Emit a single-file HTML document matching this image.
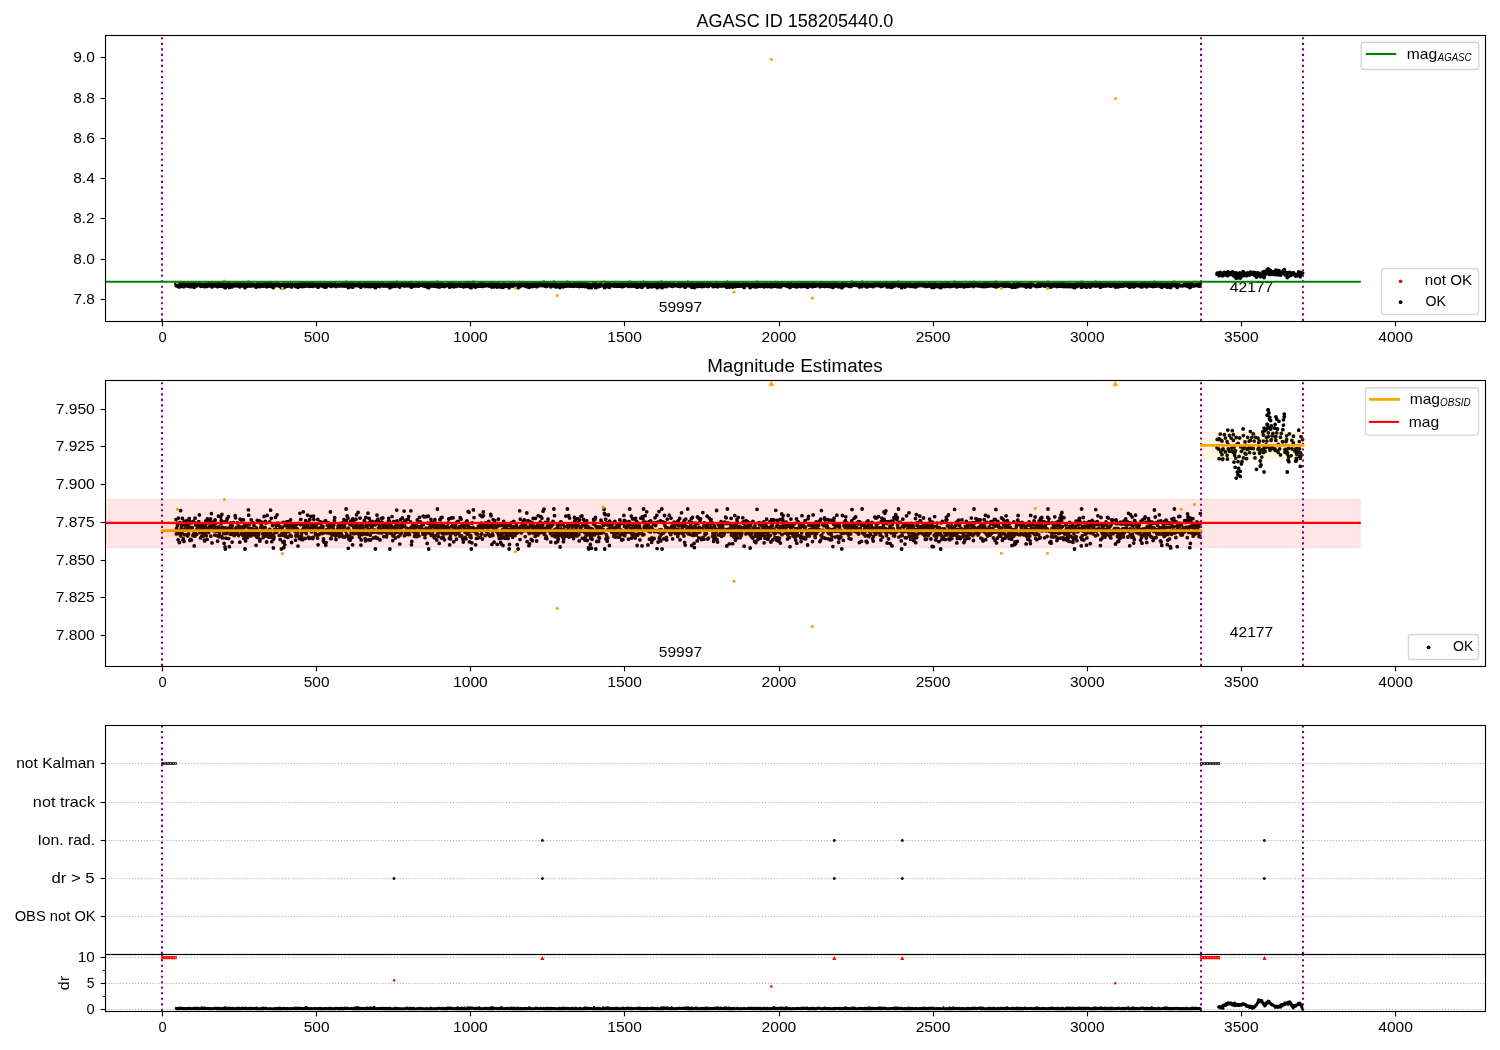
<!DOCTYPE html>
<html><head><meta charset="utf-8"><title>AGASC ID 158205440.0</title>
<style>html,body{margin:0;padding:0;background:#fff;width:1500px;height:1050px;overflow:hidden}</style>
</head><body>
<svg width="1500" height="1050" viewBox="0 0 1500 1050" style="display:block;font-family:'Liberation Sans',sans-serif;will-change:transform">
<rect width="1500" height="1050" fill="#fff"/>
<defs>
<clipPath id="c1"><rect x="105.5" y="35.5" width="1380" height="286"/></clipPath>
<clipPath id="c2"><rect x="105.5" y="380.5" width="1380" height="286"/></clipPath>
<clipPath id="c3"><rect x="105.5" y="725.5" width="1380" height="229"/></clipPath>
<clipPath id="c4"><rect x="105.5" y="954.5" width="1380" height="57"/></clipPath>
</defs>
<g clip-path="url(#c1)">
<path d="M176.0 283.8h0M176.3 285.7h0M176.6 285.0h0M176.9 285.6h0M177.2 284.3h0M177.5 284.6h0M177.8 284.4h0M178.1 286.5h0M178.4 283.6h0M178.7 285.7h0M179.1 285.3h0M179.4 286.9h0M179.7 285.3h0M180.0 284.2h0M180.3 285.5h0M180.6 282.6h0M180.9 286.0h0M181.2 285.0h0M181.5 284.5h0M181.8 284.7h0M182.1 285.6h0M182.4 283.7h0M182.8 286.5h0M183.1 284.5h0M183.4 286.4h0M183.7 285.2h0M184.0 286.7h0M184.3 284.0h0M184.6 285.8h0M184.9 285.0h0M185.2 284.5h0M185.5 285.8h0M185.8 284.7h0M186.1 284.5h0M186.5 284.9h0M186.8 283.9h0M187.1 284.9h0M187.4 285.0h0M187.7 286.0h0M188.0 285.0h0M188.3 284.4h0M188.6 285.7h0M188.9 284.8h0M189.2 283.7h0M189.5 284.0h0M189.8 286.6h0M190.2 285.0h0M190.5 286.5h0M190.8 284.2h0M191.1 284.2h0M191.4 286.5h0M191.7 284.9h0M192.0 284.9h0M192.3 284.9h0M192.6 284.2h0M192.9 285.9h0M193.2 284.0h0M193.5 285.7h0M193.8 284.2h0M194.2 287.3h0M194.5 285.7h0M194.8 286.0h0M195.1 283.6h0M195.4 285.4h0M195.7 284.5h0M196.0 284.3h0M196.3 284.4h0M196.6 285.8h0M196.9 285.1h0M197.2 284.6h0M197.5 284.6h0M197.9 284.5h0M198.2 284.6h0M198.5 284.8h0M198.8 284.1h0M199.1 284.3h0M199.4 283.2h0M199.7 285.0h0M200.0 285.6h0M200.3 284.6h0M200.6 286.3h0M200.9 284.4h0M201.2 285.1h0M201.6 286.1h0M201.9 285.3h0M202.2 284.4h0M202.5 285.4h0M202.8 284.7h0M203.1 286.0h0M203.4 285.7h0M203.7 284.9h0M204.0 285.5h0M204.3 286.6h0M204.6 286.6h0M204.9 285.8h0M205.3 284.9h0M205.6 284.6h0M205.9 284.0h0M206.2 286.0h0M206.5 284.2h0M206.8 285.4h0M207.1 286.4h0M207.4 283.7h0M207.7 285.4h0M208.0 284.2h0M208.3 285.0h0M208.6 285.5h0M209.0 284.2h0M209.3 284.0h0M209.6 284.7h0M209.9 285.3h0M210.2 284.7h0M210.5 283.7h0M210.8 286.0h0M211.1 284.1h0M211.4 283.0h0M211.7 285.2h0M212.0 286.9h0M212.3 284.3h0M212.7 285.0h0M213.0 284.2h0M213.3 284.6h0M213.6 284.1h0M213.9 285.3h0M214.2 284.5h0M214.5 284.4h0M214.8 285.9h0M215.1 283.8h0M215.4 285.9h0M215.7 284.9h0M216.0 284.3h0M216.4 285.0h0M216.7 284.8h0M217.0 285.4h0M217.3 284.9h0M217.6 286.7h0M217.9 286.0h0M218.2 286.0h0M218.5 283.3h0M218.8 284.8h0M219.1 286.1h0M219.4 285.6h0M219.7 285.1h0M220.1 285.0h0M220.4 286.0h0M220.7 283.5h0M221.0 284.4h0M221.3 283.9h0M221.6 286.1h0M221.9 283.1h0M222.2 284.9h0M222.5 286.2h0M222.8 284.8h0M223.1 285.3h0M223.4 285.1h0M223.8 285.7h0M224.1 287.0h0M224.4 284.1h0M224.7 285.1h0M225.0 287.4h0M225.3 287.7h0M225.6 284.9h0M225.9 286.3h0M226.2 285.7h0M226.5 285.6h0M226.8 283.9h0M227.1 283.7h0M227.4 285.3h0M227.8 285.0h0M228.1 285.0h0M228.4 283.4h0M228.7 286.3h0M229.0 284.9h0M229.3 287.4h0M229.6 284.9h0M229.9 285.4h0M230.2 285.8h0M230.5 284.6h0M230.8 284.3h0M231.1 284.6h0M231.5 285.1h0M231.8 284.7h0M232.1 286.8h0M232.4 284.7h0M232.7 285.8h0M233.0 285.8h0M233.3 285.4h0M233.6 284.2h0M233.9 285.6h0M234.2 285.9h0M234.5 285.3h0M234.8 285.1h0M235.2 283.3h0M235.5 283.6h0M235.8 285.0h0M236.1 285.3h0M236.4 285.8h0M236.7 284.9h0M237.0 285.3h0M237.3 284.2h0M237.6 285.7h0M237.9 285.7h0M238.2 285.0h0M238.5 285.9h0M238.9 284.7h0M239.2 284.7h0M239.5 284.9h0M239.8 286.8h0M240.1 283.7h0M240.4 285.3h0M240.7 284.8h0M241.0 285.2h0M241.3 283.9h0M241.6 285.7h0M241.9 285.7h0M242.2 284.9h0M242.6 284.8h0M242.9 285.2h0M243.2 285.9h0M243.5 283.8h0M243.8 286.3h0M244.1 284.9h0M244.4 285.8h0M244.7 284.4h0M245.0 287.7h0M245.3 285.5h0M245.6 286.6h0M245.9 284.6h0M246.3 284.6h0M246.6 286.1h0M246.9 285.8h0M247.2 285.4h0M247.5 286.2h0M247.8 285.5h0M248.1 284.9h0M248.4 282.5h0M248.7 283.2h0M249.0 285.7h0M249.3 285.6h0M249.6 284.4h0M250.0 285.9h0M250.3 285.0h0M250.6 285.2h0M250.9 286.0h0M251.2 283.8h0M251.5 285.5h0M251.8 285.6h0M252.1 285.0h0M252.4 285.3h0M252.7 284.2h0M253.0 285.3h0M253.3 285.7h0M253.7 285.8h0M254.0 284.6h0M254.3 285.9h0M254.6 285.4h0M254.9 285.7h0M255.2 285.1h0M255.5 285.7h0M255.8 285.3h0M256.1 287.2h0M256.4 284.9h0M256.7 286.1h0M257.0 285.1h0M257.3 283.9h0M257.7 285.6h0M258.0 286.2h0M258.3 285.8h0M258.6 285.8h0M258.9 284.0h0M259.2 285.4h0M259.5 284.0h0M259.8 286.7h0M260.1 286.5h0M260.4 284.3h0M260.7 284.8h0M261.0 284.1h0M261.4 284.5h0M261.7 284.8h0M262.0 284.2h0M262.3 284.8h0M262.6 285.7h0M262.9 284.9h0M263.2 286.2h0M263.5 285.0h0M263.8 285.3h0M264.1 283.4h0M264.4 285.9h0M264.7 284.2h0M265.1 284.8h0M265.4 284.1h0M265.7 285.6h0M266.0 284.3h0M266.3 286.0h0M266.6 286.8h0M266.9 285.7h0M267.2 283.2h0M267.5 286.0h0M267.8 285.3h0M268.1 286.0h0M268.4 285.5h0M268.8 286.1h0M269.1 286.0h0M269.4 285.1h0M269.7 284.1h0M270.0 285.1h0M270.3 285.8h0M270.6 282.6h0M270.9 285.4h0M271.2 283.6h0M271.5 286.1h0M271.8 286.7h0M272.1 285.9h0M272.5 284.6h0M272.8 285.8h0M273.1 286.3h0M273.4 287.6h0M273.7 286.4h0M274.0 286.1h0M274.3 284.3h0M274.6 285.1h0M274.9 285.6h0M275.2 285.2h0M275.5 283.5h0M275.8 285.0h0M276.2 284.6h0M276.5 285.4h0M276.8 285.5h0M277.1 283.2h0M277.4 284.5h0M277.7 285.3h0M278.0 284.3h0M278.3 285.1h0M278.6 284.5h0M278.9 284.6h0M279.2 285.9h0M279.5 285.1h0M279.9 284.7h0M280.2 286.5h0M280.5 284.9h0M280.8 285.1h0M281.1 285.2h0M281.4 287.7h0M281.7 285.7h0M282.0 285.9h0M282.3 284.8h0M282.6 285.9h0M282.9 286.8h0M283.2 284.2h0M283.6 285.5h0M283.9 287.5h0M284.2 286.7h0M284.5 285.4h0M284.8 287.1h0M285.1 284.6h0M285.4 286.1h0M285.7 285.6h0M286.0 284.3h0M286.3 286.0h0M286.6 284.1h0M286.9 284.6h0M287.2 285.1h0M287.6 284.2h0M287.9 286.2h0M288.2 284.8h0M288.5 284.1h0M288.8 285.4h0M289.1 285.2h0M289.4 284.3h0M289.7 284.4h0M290.0 285.9h0M290.3 285.9h0M290.6 283.8h0M290.9 286.0h0M291.3 286.0h0M291.6 286.9h0M291.9 284.8h0M292.2 284.5h0M292.5 285.1h0M292.8 284.6h0M293.1 285.0h0M293.4 284.7h0M293.7 285.0h0M294.0 284.5h0M294.3 285.2h0M294.6 285.3h0M295.0 284.9h0M295.3 284.7h0M295.6 286.6h0M295.9 286.0h0M296.2 285.6h0M296.5 284.4h0M296.8 285.7h0M297.1 285.0h0M297.4 285.7h0M297.7 285.4h0M298.0 287.3h0M298.3 285.2h0M298.7 284.3h0M299.0 286.1h0M299.3 286.2h0M299.6 286.3h0M299.9 283.0h0M300.2 284.4h0M300.5 284.5h0M300.8 283.8h0M301.1 285.3h0M301.4 285.7h0M301.7 286.1h0M302.0 286.5h0M302.4 285.2h0M302.7 286.5h0M303.0 285.4h0M303.3 282.8h0M303.6 284.9h0M303.9 284.5h0M304.2 285.4h0M304.5 284.8h0M304.8 284.9h0M305.1 286.3h0M305.4 284.5h0M305.7 284.0h0M306.1 285.3h0M306.4 285.7h0M306.7 285.0h0M307.0 285.1h0M307.3 284.6h0M307.6 283.2h0M307.9 284.5h0M308.2 284.2h0M308.5 286.2h0M308.8 284.9h0M309.1 286.3h0M309.4 285.0h0M309.8 283.8h0M310.1 285.3h0M310.4 285.3h0M310.7 286.2h0M311.0 283.4h0M311.3 284.7h0M311.6 285.4h0M311.9 284.5h0M312.2 285.3h0M312.5 284.8h0M312.8 286.3h0M313.1 286.2h0M313.5 283.3h0M313.8 283.8h0M314.1 284.4h0M314.4 285.0h0M314.7 285.0h0M315.0 284.7h0M315.3 285.6h0M315.6 285.8h0M315.9 285.2h0M316.2 284.9h0M316.5 285.1h0M316.8 284.4h0M317.1 285.8h0M317.5 286.3h0M317.8 283.8h0M318.1 287.2h0M318.4 285.1h0M318.7 285.8h0M319.0 285.1h0M319.3 285.0h0M319.6 285.7h0M319.9 284.3h0M320.2 284.9h0M320.5 284.1h0M320.8 285.5h0M321.2 284.9h0M321.5 284.8h0M321.8 284.7h0M322.1 285.7h0M322.4 285.5h0M322.7 284.9h0M323.0 284.7h0M323.3 286.6h0M323.6 286.4h0M323.9 284.2h0M324.2 286.8h0M324.5 285.6h0M324.9 285.4h0M325.2 285.5h0M325.5 284.0h0M325.8 287.2h0M326.1 286.9h0M326.4 285.2h0M326.7 285.1h0M327.0 285.3h0M327.3 284.6h0M327.6 285.6h0M327.9 285.1h0M328.2 284.2h0M328.6 284.7h0M328.9 284.6h0M329.2 284.6h0M329.5 284.8h0M329.8 285.6h0M330.1 284.7h0M330.4 282.8h0M330.7 286.3h0M331.0 284.6h0M331.3 286.3h0M331.6 285.3h0M331.9 285.9h0M332.3 284.4h0M332.6 285.2h0M332.9 284.8h0M333.2 285.0h0M333.5 285.5h0M333.8 284.5h0M334.1 285.8h0M334.4 283.9h0M334.7 283.6h0M335.0 285.5h0M335.3 285.5h0M335.6 286.0h0M336.0 286.5h0M336.3 285.5h0M336.6 285.7h0M336.9 285.3h0M337.2 285.2h0M337.5 285.0h0M337.8 285.2h0M338.1 284.6h0M338.4 285.0h0M338.7 285.8h0M339.0 285.5h0M339.3 286.1h0M339.7 284.7h0M340.0 284.8h0M340.3 285.5h0M340.6 284.4h0M340.9 284.4h0M341.2 285.6h0M341.5 284.9h0M341.8 285.8h0M342.1 285.2h0M342.4 284.5h0M342.7 284.2h0M343.0 286.1h0M343.4 285.0h0M343.7 284.3h0M344.0 283.8h0M344.3 284.0h0M344.6 284.7h0M344.9 286.1h0M345.2 284.3h0M345.5 285.3h0M345.8 285.3h0M346.1 282.4h0M346.4 284.0h0M346.7 285.7h0M347.1 283.3h0M347.4 286.0h0M347.7 285.1h0M348.0 283.6h0M348.3 287.6h0M348.6 284.9h0M348.9 286.4h0M349.2 285.2h0M349.5 284.4h0M349.8 286.0h0M350.1 286.6h0M350.4 286.1h0M350.7 284.0h0M351.1 285.6h0M351.4 284.0h0M351.7 284.5h0M352.0 286.2h0M352.3 283.8h0M352.6 287.2h0M352.9 283.7h0M353.2 283.9h0M353.5 285.7h0M353.8 284.9h0M354.1 284.8h0M354.4 284.2h0M354.8 285.7h0M355.1 285.2h0M355.4 285.0h0M355.7 284.3h0M356.0 283.8h0M356.3 285.0h0M356.6 283.2h0M356.9 284.5h0M357.2 285.6h0M357.5 285.6h0M357.8 284.7h0M358.1 282.8h0M358.5 285.5h0M358.8 285.8h0M359.1 285.1h0M359.4 286.1h0M359.7 285.9h0M360.0 283.6h0M360.3 284.8h0M360.6 284.6h0M360.9 287.2h0M361.2 286.5h0M361.5 285.1h0M361.8 285.5h0M362.2 285.8h0M362.5 284.4h0M362.8 284.9h0M363.1 285.0h0M363.4 284.7h0M363.7 284.8h0M364.0 285.3h0M364.3 283.9h0M364.6 284.1h0M364.9 285.7h0M365.2 286.3h0M365.5 286.6h0M365.9 283.5h0M366.2 285.4h0M366.5 284.3h0M366.8 284.6h0M367.1 284.8h0M367.4 285.4h0M367.7 285.8h0M368.0 283.0h0M368.3 284.5h0M368.6 286.5h0M368.9 285.1h0M369.2 283.6h0M369.6 284.2h0M369.9 284.3h0M370.2 285.9h0M370.5 286.5h0M370.8 284.1h0M371.1 285.5h0M371.4 284.8h0M371.7 285.5h0M372.0 284.8h0M372.3 284.1h0M372.6 284.5h0M372.9 284.5h0M373.3 286.3h0M373.6 284.4h0M373.9 285.5h0M374.2 284.3h0M374.5 284.4h0M374.8 285.2h0M375.1 284.5h0M375.4 287.7h0M375.7 286.1h0M376.0 284.0h0M376.3 285.4h0M376.6 286.3h0M377.0 283.2h0M377.3 284.3h0M377.6 286.3h0M377.9 283.7h0M378.2 285.5h0M378.5 284.9h0M378.8 285.2h0M379.1 284.1h0M379.4 284.9h0M379.7 284.6h0M380.0 286.5h0M380.3 285.6h0M380.6 285.1h0M381.0 285.0h0M381.3 285.6h0M381.6 283.6h0M381.9 284.1h0M382.2 284.2h0M382.5 284.3h0M382.8 283.6h0M383.1 285.4h0M383.4 284.6h0M383.7 286.1h0M384.0 284.9h0M384.3 284.7h0M384.7 285.4h0M385.0 285.4h0M385.3 284.8h0M385.6 285.5h0M385.9 286.1h0M386.2 284.6h0M386.5 286.1h0M386.8 284.6h0M387.1 285.7h0M387.4 285.0h0M387.7 284.4h0M388.0 285.3h0M388.4 284.0h0M388.7 283.6h0M389.0 285.0h0M389.3 284.8h0M389.6 284.0h0M389.9 287.7h0M390.2 285.3h0M390.5 284.4h0M390.8 285.6h0M391.1 285.5h0M391.4 284.7h0M391.7 284.8h0M392.1 283.4h0M392.4 285.2h0M392.7 286.6h0M393.0 286.0h0M393.3 285.9h0M393.6 284.1h0M393.9 284.1h0M394.2 285.8h0M394.5 285.3h0M394.8 284.8h0M395.1 284.7h0M395.4 286.3h0M395.8 285.5h0M396.1 284.6h0M396.4 284.9h0M396.7 282.5h0M397.0 284.0h0M397.3 285.5h0M397.6 284.6h0M397.9 284.3h0M398.2 285.2h0M398.5 286.1h0M398.8 284.3h0M399.1 284.7h0M399.5 284.8h0M399.8 287.1h0M400.1 285.9h0M400.4 285.2h0M400.7 283.8h0M401.0 285.6h0M401.3 285.5h0M401.6 284.8h0M401.9 284.4h0M402.2 284.3h0M402.5 283.6h0M402.8 284.7h0M403.2 284.6h0M403.5 284.2h0M403.8 284.7h0M404.1 282.7h0M404.4 286.0h0M404.7 284.7h0M405.0 284.0h0M405.3 285.6h0M405.6 285.5h0M405.9 284.2h0M406.2 283.9h0M406.5 284.9h0M406.9 285.6h0M407.2 285.5h0M407.5 285.8h0M407.8 285.7h0M408.1 283.7h0M408.4 285.1h0M408.7 283.4h0M409.0 285.8h0M409.3 285.3h0M409.6 285.8h0M409.9 285.0h0M410.2 285.0h0M410.5 284.1h0M410.9 282.6h0M411.2 284.8h0M411.5 287.2h0M411.8 286.7h0M412.1 284.8h0M412.4 285.3h0M412.7 285.4h0M413.0 284.5h0M413.3 285.0h0M413.6 285.3h0M413.9 284.6h0M414.2 285.4h0M414.6 286.0h0M414.9 285.7h0M415.2 285.3h0M415.5 284.9h0M415.8 285.6h0M416.1 284.5h0M416.4 284.5h0M416.7 286.1h0M417.0 284.7h0M417.3 283.9h0M417.6 285.7h0M417.9 285.6h0M418.3 286.0h0M418.6 284.8h0M418.9 286.0h0M419.2 284.9h0M419.5 283.5h0M419.8 284.9h0M420.1 285.2h0M420.4 284.1h0M420.7 284.9h0M421.0 285.2h0M421.3 284.7h0M421.6 285.1h0M422.0 285.0h0M422.3 284.3h0M422.6 285.4h0M422.9 285.8h0M423.2 283.3h0M423.5 284.5h0M423.8 285.7h0M424.1 285.4h0M424.4 283.4h0M424.7 285.2h0M425.0 286.2h0M425.3 285.8h0M425.7 285.7h0M426.0 285.0h0M426.3 285.1h0M426.6 283.4h0M426.9 285.1h0M427.2 287.0h0M427.5 285.0h0M427.8 284.3h0M428.1 285.5h0M428.4 283.3h0M428.7 287.7h0M429.0 285.6h0M429.4 284.8h0M429.7 284.8h0M430.0 284.3h0M430.3 285.2h0M430.6 285.1h0M430.9 283.8h0M431.2 285.9h0M431.5 284.8h0M431.8 284.2h0M432.1 285.9h0M432.4 285.7h0M432.7 284.2h0M433.1 284.5h0M433.4 286.0h0M433.7 284.7h0M434.0 285.3h0M434.3 286.2h0M434.6 284.1h0M434.9 283.8h0M435.2 284.4h0M435.5 284.6h0M435.8 285.1h0M436.1 285.9h0M436.4 284.7h0M436.8 286.5h0M437.1 285.3h0M437.4 282.4h0M437.7 285.1h0M438.0 285.7h0M438.3 286.0h0M438.6 284.5h0M438.9 285.0h0M439.2 287.0h0M439.5 285.2h0M439.8 283.8h0M440.1 283.8h0M440.4 284.7h0M440.8 285.4h0M441.1 283.6h0M441.4 286.3h0M441.7 284.5h0M442.0 283.5h0M442.3 285.7h0M442.6 285.1h0M442.9 284.9h0M443.2 286.2h0M443.5 284.6h0M443.8 285.7h0M444.1 284.7h0M444.5 286.5h0M444.8 285.1h0M445.1 285.1h0M445.4 285.6h0M445.7 285.1h0M446.0 285.5h0M446.3 284.9h0M446.6 285.7h0M446.9 285.2h0M447.2 284.7h0M447.5 285.6h0M447.8 285.5h0M448.2 284.2h0M448.5 284.9h0M448.8 283.7h0M449.1 285.2h0M449.4 286.3h0M449.7 287.2h0M450.0 285.4h0M450.3 286.0h0M450.6 286.4h0M450.9 285.7h0M451.2 283.6h0M451.5 284.7h0M451.9 285.4h0M452.2 285.4h0M452.5 285.2h0M452.8 284.4h0M453.1 283.6h0M453.4 285.5h0M453.7 286.8h0M454.0 284.7h0M454.3 285.6h0M454.6 284.4h0M454.9 285.0h0M455.2 284.7h0M455.6 285.8h0M455.9 284.4h0M456.2 285.3h0M456.5 286.4h0M456.8 285.1h0M457.1 284.1h0M457.4 285.5h0M457.7 285.0h0M458.0 284.1h0M458.3 285.0h0M458.6 284.9h0M458.9 285.6h0M459.3 284.7h0M459.6 285.2h0M459.9 286.0h0M460.2 283.5h0M460.5 286.0h0M460.8 285.1h0M461.1 283.8h0M461.4 285.2h0M461.7 286.0h0M462.0 284.6h0M462.3 284.7h0M462.6 286.3h0M463.0 286.4h0M463.3 286.8h0M463.6 285.2h0M463.9 284.3h0M464.2 284.3h0M464.5 284.9h0M464.8 284.3h0M465.1 285.5h0M465.4 286.2h0M465.7 284.2h0M466.0 286.4h0M466.3 284.4h0M466.7 284.6h0M467.0 284.0h0M467.3 285.7h0M467.6 285.1h0M467.9 285.2h0M468.2 282.7h0M468.5 284.6h0M468.8 285.4h0M469.1 282.8h0M469.4 286.8h0M469.7 285.4h0M470.0 286.0h0M470.4 284.9h0M470.7 285.9h0M471.0 286.2h0M471.3 287.7h0M471.6 284.3h0M471.9 286.9h0M472.2 284.3h0M472.5 285.3h0M472.8 284.8h0M473.1 285.0h0M473.4 282.5h0M473.7 284.9h0M474.0 283.5h0M474.4 285.0h0M474.7 285.4h0M475.0 285.2h0M475.3 285.1h0M475.6 287.2h0M475.9 285.5h0M476.2 285.7h0M476.5 286.3h0M476.8 285.2h0M477.1 285.3h0M477.4 285.8h0M477.7 285.0h0M478.1 286.2h0M478.4 284.7h0M478.7 285.0h0M479.0 285.1h0M479.3 284.9h0M479.6 285.2h0M479.9 284.6h0M480.2 283.2h0M480.5 286.2h0M480.8 284.6h0M481.1 285.8h0M481.4 284.3h0M481.8 285.7h0M482.1 283.4h0M482.4 286.4h0M482.7 285.1h0M483.0 284.8h0M483.3 282.8h0M483.6 283.3h0M483.9 284.7h0M484.2 284.6h0M484.5 284.3h0M484.8 284.7h0M485.1 285.9h0M485.5 284.8h0M485.8 284.8h0M486.1 284.5h0M486.4 284.2h0M486.7 285.4h0M487.0 284.8h0M487.3 284.8h0M487.6 285.4h0M487.9 285.2h0M488.2 285.8h0M488.5 285.8h0M488.8 284.1h0M489.2 284.5h0M489.5 285.9h0M489.8 284.8h0M490.1 286.0h0M490.4 284.4h0M490.7 283.1h0M491.0 283.3h0M491.3 284.6h0M491.6 284.8h0M491.9 287.1h0M492.2 285.8h0M492.5 285.7h0M492.9 285.9h0M493.2 283.8h0M493.5 285.2h0M493.8 285.1h0M494.1 286.8h0M494.4 284.6h0M494.7 283.9h0M495.0 285.2h0M495.3 285.0h0M495.6 285.2h0M495.9 285.4h0M496.2 285.3h0M496.6 284.6h0M496.9 284.8h0M497.2 287.1h0M497.5 284.7h0M497.8 285.6h0M498.1 284.3h0M498.4 283.7h0M498.7 285.9h0M499.0 285.4h0M499.3 286.3h0M499.6 286.1h0M499.9 285.4h0M500.3 284.6h0M500.6 286.9h0M500.9 285.4h0M501.2 287.0h0M501.5 285.9h0M501.8 286.0h0M502.1 286.2h0M502.4 285.7h0M502.7 285.1h0M503.0 287.3h0M503.3 284.6h0M503.6 284.0h0M503.9 285.6h0M504.3 284.8h0M504.6 286.1h0M504.9 285.2h0M505.2 286.3h0M505.5 285.4h0M505.8 284.7h0M506.1 285.0h0M506.4 285.9h0M506.7 284.8h0M507.0 284.6h0M507.3 285.2h0M507.6 285.6h0M508.0 286.3h0M508.3 285.7h0M508.6 286.0h0M508.9 285.1h0M509.2 287.7h0M509.5 287.1h0M509.8 284.5h0M510.1 285.5h0M510.4 285.2h0M510.7 285.9h0M511.0 285.0h0M511.3 284.7h0M511.7 284.2h0M512.0 284.9h0M512.3 285.3h0M512.6 286.2h0M512.9 285.8h0M513.2 284.9h0M513.5 284.7h0M513.8 284.0h0M514.1 285.9h0M514.4 285.4h0M514.7 285.8h0M515.0 285.9h0M515.4 285.7h0M515.7 285.2h0M516.0 285.0h0M516.3 284.4h0M516.6 284.7h0M516.9 285.6h0M517.2 287.1h0M517.5 284.9h0M517.8 285.5h0M518.1 287.7h0M518.4 285.3h0M518.7 285.0h0M519.1 285.3h0M519.4 285.0h0M519.7 282.6h0M520.0 286.5h0M520.3 283.7h0M520.6 284.8h0M520.9 284.9h0M521.2 285.6h0M521.5 285.0h0M521.8 284.8h0M522.1 284.5h0M522.4 285.4h0M522.8 284.9h0M523.1 284.2h0M523.4 284.0h0M523.7 284.4h0M524.0 285.3h0M524.3 283.8h0M524.6 285.2h0M524.9 285.2h0M525.2 286.1h0M525.5 284.5h0M525.8 284.3h0M526.1 285.0h0M526.5 284.8h0M526.8 282.9h0M527.1 286.7h0M527.4 285.3h0M527.7 285.2h0M528.0 283.9h0M528.3 285.4h0M528.6 284.9h0M528.9 287.3h0M529.2 285.7h0M529.5 287.1h0M529.8 284.1h0M530.2 284.4h0M530.5 284.7h0M530.8 284.6h0M531.1 286.4h0M531.4 285.4h0M531.7 284.2h0M532.0 284.9h0M532.3 286.6h0M532.6 284.8h0M532.9 285.6h0M533.2 283.7h0M533.5 284.6h0M533.8 285.0h0M534.2 284.7h0M534.5 285.1h0M534.8 285.4h0M535.1 286.1h0M535.4 283.6h0M535.7 285.1h0M536.0 285.7h0M536.3 285.3h0M536.6 286.7h0M536.9 285.0h0M537.2 284.7h0M537.5 284.4h0M537.9 285.9h0M538.2 283.3h0M538.5 284.7h0M538.8 285.0h0M539.1 285.6h0M539.4 284.8h0M539.7 284.3h0M540.0 285.6h0M540.3 284.1h0M540.6 284.5h0M540.9 283.4h0M541.2 285.2h0M541.6 285.2h0M541.9 283.6h0M542.2 284.9h0M542.5 285.5h0M542.8 284.5h0M543.1 282.7h0M543.4 285.0h0M543.7 285.6h0M544.0 282.4h0M544.3 285.8h0M544.6 285.0h0M544.9 285.8h0M545.3 284.2h0M545.6 286.3h0M545.9 285.3h0M546.2 286.1h0M546.5 285.1h0M546.8 286.4h0M547.1 284.9h0M547.4 284.7h0M547.7 284.2h0M548.0 283.7h0M548.3 285.1h0M548.6 284.8h0M549.0 285.0h0M549.3 284.8h0M549.6 285.3h0M549.9 285.1h0M550.2 284.6h0M550.5 285.7h0M550.8 286.8h0M551.1 284.3h0M551.4 284.7h0M551.7 285.5h0M552.0 284.5h0M552.3 285.9h0M552.7 284.5h0M553.0 284.1h0M553.3 284.3h0M553.6 285.9h0M553.9 282.4h0M554.2 285.2h0M554.5 283.3h0M554.8 286.1h0M555.1 285.4h0M555.4 285.6h0M555.7 286.9h0M556.0 285.1h0M556.4 286.1h0M556.7 285.6h0M557.0 286.0h0M557.3 284.5h0M557.6 286.7h0M557.9 284.9h0M558.2 286.4h0M558.5 286.0h0M558.8 285.3h0M559.1 285.7h0M559.4 285.7h0M559.7 285.6h0M560.1 287.5h0M560.4 284.5h0M560.7 284.1h0M561.0 284.1h0M561.3 285.0h0M561.6 285.2h0M561.9 285.8h0M562.2 286.1h0M562.5 285.5h0M562.8 285.4h0M563.1 284.5h0M563.4 286.8h0M563.7 286.4h0M564.1 285.2h0M564.4 285.9h0M564.7 284.7h0M565.0 285.3h0M565.3 285.5h0M565.6 286.0h0M565.9 283.3h0M566.2 285.3h0M566.5 286.0h0M566.8 285.6h0M567.1 285.8h0M567.4 282.4h0M567.8 284.5h0M568.1 284.9h0M568.4 284.6h0M568.7 283.3h0M569.0 286.1h0M569.3 285.4h0M569.6 283.6h0M569.9 284.6h0M570.2 285.2h0M570.5 286.0h0M570.8 285.8h0M571.1 284.4h0M571.5 284.7h0M571.8 285.4h0M572.1 286.0h0M572.4 284.8h0M572.7 284.7h0M573.0 285.7h0M573.3 285.3h0M573.6 286.3h0M573.9 285.6h0M574.2 286.0h0M574.5 283.5h0M574.8 284.0h0M575.2 283.9h0M575.5 284.6h0M575.8 285.5h0M576.1 284.9h0M576.4 285.6h0M576.7 284.5h0M577.0 286.0h0M577.3 285.9h0M577.6 283.7h0M577.9 284.2h0M578.2 284.6h0M578.5 285.8h0M578.9 285.8h0M579.2 286.6h0M579.5 283.9h0M579.8 285.3h0M580.1 285.1h0M580.4 284.9h0M580.7 285.0h0M581.0 283.4h0M581.3 285.4h0M581.6 284.8h0M581.9 283.3h0M582.2 286.3h0M582.6 284.5h0M582.9 285.3h0M583.2 284.5h0M583.5 283.8h0M583.8 284.4h0M584.1 285.4h0M584.4 284.2h0M584.7 285.5h0M585.0 286.6h0M585.3 286.1h0M585.6 284.8h0M585.9 284.4h0M586.3 285.9h0M586.6 283.9h0M586.9 284.2h0M587.2 286.6h0M587.5 285.5h0M587.8 285.6h0M588.1 284.7h0M588.4 287.6h0M588.7 287.7h0M589.0 285.0h0M589.3 285.9h0M589.6 284.9h0M590.0 285.6h0M590.3 287.1h0M590.6 286.3h0M590.9 285.0h0M591.2 285.5h0M591.5 287.6h0M591.8 286.0h0M592.1 286.4h0M592.4 285.7h0M592.7 285.1h0M593.0 284.3h0M593.3 284.4h0M593.6 283.8h0M594.0 284.3h0M594.3 284.5h0M594.6 285.8h0M594.9 283.8h0M595.2 285.6h0M595.5 283.5h0M595.8 287.7h0M596.1 284.7h0M596.4 285.3h0M596.7 286.7h0M597.0 285.0h0M597.3 285.4h0M597.7 285.3h0M598.0 285.7h0M598.3 284.8h0M598.6 286.7h0M598.9 286.2h0M599.2 285.3h0M599.5 286.3h0M599.8 285.1h0M600.1 284.8h0M600.4 285.1h0M600.7 285.6h0M601.0 283.9h0M601.4 284.9h0M601.7 285.6h0M602.0 284.3h0M602.3 285.5h0M602.6 284.3h0M602.9 285.4h0M603.2 285.1h0M603.5 285.5h0M603.8 284.6h0M604.1 282.4h0M604.4 283.0h0M604.7 287.7h0M605.1 283.1h0M605.4 284.4h0M605.7 283.8h0M606.0 286.4h0M606.3 285.8h0M606.6 285.9h0M606.9 284.2h0M607.2 286.7h0M607.5 284.5h0M607.8 286.3h0M608.1 285.1h0M608.4 283.2h0M608.8 285.1h0M609.1 284.4h0M609.4 287.3h0M609.7 284.0h0M610.0 284.9h0M610.3 284.9h0M610.6 284.4h0M610.9 284.5h0M611.2 285.1h0M611.5 285.5h0M611.8 284.8h0M612.1 284.9h0M612.5 285.2h0M612.8 284.3h0M613.1 284.9h0M613.4 285.2h0M613.7 286.0h0M614.0 285.7h0M614.3 285.6h0M614.6 285.9h0M614.9 284.0h0M615.2 286.1h0M615.5 284.8h0M615.8 284.9h0M616.2 284.8h0M616.5 286.1h0M616.8 284.6h0M617.1 285.6h0M617.4 284.8h0M617.7 284.7h0M618.0 285.5h0M618.3 284.4h0M618.6 286.2h0M618.9 284.5h0M619.2 284.7h0M619.5 286.1h0M619.9 283.8h0M620.2 285.9h0M620.5 285.2h0M620.8 285.2h0M621.1 285.3h0M621.4 284.3h0M621.7 286.5h0M622.0 285.6h0M622.3 285.7h0M622.6 285.8h0M622.9 286.5h0M623.2 285.4h0M623.6 284.3h0M623.9 283.2h0M624.2 283.9h0M624.5 284.7h0M624.8 285.9h0M625.1 284.0h0M625.4 284.8h0M625.7 285.6h0M626.0 284.8h0M626.3 284.9h0M626.6 284.2h0M626.9 285.2h0M627.2 284.6h0M627.6 284.5h0M627.9 284.7h0M628.2 285.4h0M628.5 286.4h0M628.8 284.1h0M629.1 285.5h0M629.4 284.1h0M629.7 282.4h0M630.0 284.5h0M630.3 285.1h0M630.6 285.0h0M630.9 285.4h0M631.3 283.3h0M631.6 286.3h0M631.9 285.8h0M632.2 285.6h0M632.5 283.7h0M632.8 285.5h0M633.1 284.6h0M633.4 284.7h0M633.7 285.1h0M634.0 283.7h0M634.3 286.0h0M634.6 285.9h0M635.0 285.8h0M635.3 286.3h0M635.6 283.6h0M635.9 284.6h0M636.2 284.8h0M636.5 284.0h0M636.8 285.8h0M637.1 287.3h0M637.4 284.2h0M637.7 285.9h0M638.0 285.2h0M638.3 285.2h0M638.7 285.2h0M639.0 285.7h0M639.3 284.6h0M639.6 284.8h0M639.9 286.5h0M640.2 285.1h0M640.5 285.1h0M640.8 283.6h0M641.1 285.5h0M641.4 285.6h0M641.7 285.3h0M642.0 287.3h0M642.4 283.4h0M642.7 285.9h0M643.0 283.7h0M643.3 284.2h0M643.6 282.4h0M643.9 285.8h0M644.2 284.9h0M644.5 284.7h0M644.8 285.1h0M645.1 283.3h0M645.4 284.1h0M645.7 285.2h0M646.1 284.5h0M646.4 285.0h0M646.7 282.8h0M647.0 285.2h0M647.3 284.8h0M647.6 285.2h0M647.9 287.2h0M648.2 285.1h0M648.5 284.5h0M648.8 285.4h0M649.1 284.1h0M649.4 286.4h0M649.8 285.0h0M650.1 285.0h0M650.4 285.4h0M650.7 284.0h0M651.0 285.0h0M651.3 284.8h0M651.6 286.8h0M651.9 286.2h0M652.2 286.6h0M652.5 285.0h0M652.8 285.1h0M653.1 286.4h0M653.5 284.4h0M653.8 284.2h0M654.1 286.3h0M654.4 285.4h0M654.7 285.4h0M655.0 283.6h0M655.3 284.3h0M655.6 284.6h0M655.9 284.4h0M656.2 285.3h0M656.5 284.2h0M656.8 283.3h0M657.1 287.7h0M657.5 285.4h0M657.8 284.1h0M658.1 286.8h0M658.4 285.5h0M658.7 285.3h0M659.0 282.7h0M659.3 286.3h0M659.6 285.2h0M659.9 286.1h0M660.2 286.5h0M660.5 284.0h0M660.8 286.6h0M661.2 285.8h0M661.5 285.2h0M661.8 282.4h0M662.1 287.7h0M662.4 285.4h0M662.7 285.6h0M663.0 284.1h0M663.3 285.6h0M663.6 285.6h0M663.9 286.4h0M664.2 284.3h0M664.5 283.3h0M664.9 284.6h0M665.2 284.3h0M665.5 285.3h0M665.8 284.8h0M666.1 285.3h0M666.4 286.2h0M666.7 286.5h0M667.0 285.1h0M667.3 283.7h0M667.6 285.1h0M667.9 284.9h0M668.2 285.0h0M668.6 284.9h0M668.9 285.0h0M669.2 283.2h0M669.5 285.5h0M669.8 285.5h0M670.1 285.3h0M670.4 284.9h0M670.7 285.8h0M671.0 283.6h0M671.3 284.8h0M671.6 285.5h0M671.9 284.7h0M672.3 285.0h0M672.6 286.4h0M672.9 284.9h0M673.2 284.3h0M673.5 284.6h0M673.8 285.3h0M674.1 284.1h0M674.4 285.0h0M674.7 284.7h0M675.0 285.1h0M675.3 285.7h0M675.6 285.6h0M676.0 285.1h0M676.3 285.2h0M676.6 285.7h0M676.9 284.4h0M677.2 285.2h0M677.5 284.1h0M677.8 286.1h0M678.1 285.1h0M678.4 284.0h0M678.7 284.6h0M679.0 285.7h0M679.3 285.3h0M679.7 283.7h0M680.0 286.5h0M680.3 285.3h0M680.6 285.4h0M680.9 284.6h0M681.2 284.4h0M681.5 282.9h0M681.8 285.2h0M682.1 285.0h0M682.4 284.8h0M682.7 285.7h0M683.0 285.4h0M683.4 284.2h0M683.7 284.7h0M684.0 286.0h0M684.3 283.9h0M684.6 286.8h0M684.9 284.6h0M685.2 287.2h0M685.5 285.4h0M685.8 283.7h0M686.1 285.4h0M686.4 285.1h0M686.7 284.7h0M687.0 285.1h0M687.4 285.1h0M687.7 282.4h0M688.0 285.7h0M688.3 284.8h0M688.6 285.1h0M688.9 285.7h0M689.2 285.1h0M689.5 284.1h0M689.8 285.8h0M690.1 284.8h0M690.4 285.3h0M690.7 284.5h0M691.1 285.0h0M691.4 283.7h0M691.7 287.2h0M692.0 284.2h0M692.3 285.9h0M692.6 283.5h0M692.9 285.4h0M693.2 284.8h0M693.5 285.9h0M693.8 285.3h0M694.1 287.0h0M694.4 287.5h0M694.8 284.6h0M695.1 285.7h0M695.4 284.3h0M695.7 284.3h0M696.0 285.0h0M696.3 285.8h0M696.6 285.6h0M696.9 284.9h0M697.2 286.6h0M697.5 283.5h0M697.8 284.3h0M698.1 285.0h0M698.5 283.6h0M698.8 286.2h0M699.1 284.9h0M699.4 284.8h0M699.7 285.5h0M700.0 284.0h0M700.3 285.0h0M700.6 283.7h0M700.9 285.0h0M701.2 285.2h0M701.5 286.5h0M701.8 285.1h0M702.2 286.3h0M702.5 285.1h0M702.8 282.9h0M703.1 286.2h0M703.4 285.2h0M703.7 284.6h0M704.0 286.4h0M704.3 284.2h0M704.6 284.6h0M704.9 285.7h0M705.2 285.8h0M705.5 284.6h0M705.9 285.4h0M706.2 285.2h0M706.5 285.6h0M706.8 284.9h0M707.1 283.3h0M707.4 284.6h0M707.7 286.4h0M708.0 284.4h0M708.3 285.0h0M708.6 286.3h0M708.9 284.9h0M709.2 283.6h0M709.6 285.1h0M709.9 285.0h0M710.2 284.4h0M710.5 285.0h0M710.8 284.0h0M711.1 283.8h0M711.4 284.2h0M711.7 284.9h0M712.0 285.1h0M712.3 284.3h0M712.6 286.0h0M712.9 285.6h0M713.3 285.2h0M713.6 286.7h0M713.9 286.4h0M714.2 285.7h0M714.5 284.7h0M714.8 285.8h0M715.1 286.1h0M715.4 285.5h0M715.7 285.0h0M716.0 285.4h0M716.3 285.4h0M716.6 282.6h0M717.0 286.5h0M717.3 285.2h0M717.6 286.8h0M717.9 285.2h0M718.2 284.5h0M718.5 285.8h0M718.8 285.2h0M719.1 285.9h0M719.4 284.8h0M719.7 284.8h0M720.0 284.6h0M720.3 284.6h0M720.6 285.5h0M721.0 284.1h0M721.3 285.3h0M721.6 286.1h0M721.9 284.3h0M722.2 284.9h0M722.5 284.5h0M722.8 284.8h0M723.1 285.2h0M723.4 285.7h0M723.7 285.9h0M724.0 284.2h0M724.3 285.7h0M724.7 284.3h0M725.0 284.2h0M725.3 284.3h0M725.6 283.5h0M725.9 285.1h0M726.2 283.6h0M726.5 285.3h0M726.8 287.3h0M727.1 284.3h0M727.4 282.4h0M727.7 285.4h0M728.0 284.2h0M728.4 285.1h0M728.7 285.1h0M729.0 285.3h0M729.3 287.0h0M729.6 285.4h0M729.9 285.3h0M730.2 285.0h0M730.5 284.5h0M730.8 284.6h0M731.1 283.6h0M731.4 285.9h0M731.7 285.0h0M732.1 285.7h0M732.4 285.4h0M732.7 287.0h0M733.0 285.1h0M733.3 285.7h0M733.6 284.6h0M733.9 286.1h0M734.2 285.0h0M734.5 285.2h0M734.8 283.3h0M735.1 285.6h0M735.4 286.6h0M735.8 286.3h0M736.1 284.3h0M736.4 285.9h0M736.7 284.6h0M737.0 283.8h0M737.3 284.1h0M737.6 286.2h0M737.9 284.9h0M738.2 283.5h0M738.5 285.5h0M738.8 285.7h0M739.1 284.9h0M739.5 285.6h0M739.8 284.7h0M740.1 286.2h0M740.4 285.8h0M740.7 285.1h0M741.0 285.7h0M741.3 285.9h0M741.6 285.1h0M741.9 285.6h0M742.2 285.1h0M742.5 284.9h0M742.8 283.6h0M743.2 284.1h0M743.5 284.3h0M743.8 285.2h0M744.1 287.4h0M744.4 284.3h0M744.7 284.8h0M745.0 284.1h0M745.3 284.8h0M745.6 284.9h0M745.9 285.7h0M746.2 284.0h0M746.5 285.5h0M746.9 285.3h0M747.2 284.7h0M747.5 284.1h0M747.8 284.2h0M748.1 284.9h0M748.4 285.6h0M748.7 285.0h0M749.0 284.5h0M749.3 285.4h0M749.6 284.2h0M749.9 285.8h0M750.2 287.6h0M750.5 284.6h0M750.9 286.0h0M751.2 284.3h0M751.5 285.2h0M751.8 285.6h0M752.1 286.1h0M752.4 285.2h0M752.7 286.3h0M753.0 284.1h0M753.3 285.0h0M753.6 285.1h0M753.9 285.3h0M754.2 285.0h0M754.6 286.7h0M754.9 284.6h0M755.2 286.0h0M755.5 285.8h0M755.8 286.9h0M756.1 285.0h0M756.4 285.8h0M756.7 285.6h0M757.0 282.4h0M757.3 285.5h0M757.6 286.0h0M757.9 286.5h0M758.3 284.3h0M758.6 285.0h0M758.9 286.2h0M759.2 284.2h0M759.5 284.5h0M759.8 285.7h0M760.1 285.8h0M760.4 286.3h0M760.7 286.1h0M761.0 285.4h0M761.3 284.3h0M761.6 284.6h0M762.0 285.2h0M762.3 285.5h0M762.6 285.3h0M762.9 285.9h0M763.2 284.6h0M763.5 284.8h0M763.8 284.1h0M764.1 286.9h0M764.4 285.1h0M764.7 286.0h0M765.0 286.3h0M765.3 285.5h0M765.7 285.1h0M766.0 284.6h0M766.3 285.0h0M766.6 283.7h0M766.9 284.8h0M767.2 286.4h0M767.5 285.7h0M767.8 286.5h0M768.1 285.9h0M768.4 286.3h0M768.7 285.3h0M769.0 285.4h0M769.4 286.0h0M769.7 284.9h0M770.0 284.1h0M770.3 285.9h0M770.6 285.2h0M770.9 286.8h0M771.2 284.7h0M771.5 283.8h0M771.8 285.1h0M772.1 284.7h0M772.4 284.4h0M772.7 286.5h0M773.1 285.4h0M773.4 284.2h0M773.7 283.8h0M774.0 285.1h0M774.3 285.7h0M774.6 285.4h0M774.9 286.2h0M775.2 285.5h0M775.5 285.6h0M775.8 282.6h0M776.1 286.3h0M776.4 284.7h0M776.8 286.6h0M777.1 283.9h0M777.4 284.4h0M777.7 286.2h0M778.0 284.2h0M778.3 285.3h0M778.6 284.9h0M778.9 286.7h0M779.2 285.5h0M779.5 286.3h0M779.8 285.2h0M780.1 283.8h0M780.4 286.9h0M780.8 284.7h0M781.1 285.3h0M781.4 285.2h0M781.7 283.0h0M782.0 285.8h0M782.3 284.7h0M782.6 283.7h0M782.9 283.9h0M783.2 283.3h0M783.5 284.1h0M783.8 285.0h0M784.1 284.4h0M784.5 285.1h0M784.8 284.9h0M785.1 285.6h0M785.4 285.2h0M785.7 285.0h0M786.0 284.5h0M786.3 284.2h0M786.6 284.4h0M786.9 285.5h0M787.2 284.7h0M787.5 286.4h0M787.8 285.8h0M788.2 283.3h0M788.5 285.5h0M788.8 286.2h0M789.1 284.6h0M789.4 286.2h0M789.7 284.5h0M790.0 287.4h0M790.3 285.6h0M790.6 284.9h0M790.9 283.7h0M791.2 285.1h0M791.5 284.5h0M791.9 285.5h0M792.2 284.4h0M792.5 285.6h0M792.8 284.7h0M793.1 286.0h0M793.4 285.8h0M793.7 285.3h0M794.0 285.6h0M794.3 286.1h0M794.6 284.3h0M794.9 285.7h0M795.2 285.4h0M795.6 286.5h0M795.9 285.0h0M796.2 286.0h0M796.5 283.7h0M796.8 286.9h0M797.1 285.5h0M797.4 285.5h0M797.7 285.9h0M798.0 284.1h0M798.3 285.0h0M798.6 285.2h0M798.9 284.9h0M799.3 284.4h0M799.6 286.0h0M799.9 285.2h0M800.2 285.0h0M800.5 285.2h0M800.8 286.3h0M801.1 286.7h0M801.4 286.1h0M801.7 285.6h0M802.0 283.3h0M802.3 284.7h0M802.6 284.4h0M803.0 284.4h0M803.3 286.2h0M803.6 284.6h0M803.9 286.3h0M804.2 285.3h0M804.5 285.0h0M804.8 285.0h0M805.1 283.9h0M805.4 284.8h0M805.7 286.4h0M806.0 286.2h0M806.3 285.3h0M806.7 285.7h0M807.0 285.4h0M807.3 285.5h0M807.6 287.2h0M807.9 285.3h0M808.2 283.7h0M808.5 283.4h0M808.8 284.5h0M809.1 285.3h0M809.4 286.0h0M809.7 285.1h0M810.0 285.3h0M810.3 285.7h0M810.7 284.3h0M811.0 285.1h0M811.3 285.4h0M811.6 284.6h0M811.9 284.5h0M812.2 285.6h0M812.5 286.7h0M812.8 285.2h0M813.1 283.2h0M813.4 284.5h0M813.7 284.8h0M814.0 285.5h0M814.4 284.5h0M814.7 284.8h0M815.0 286.0h0M815.3 286.2h0M815.6 285.2h0M815.9 284.2h0M816.2 284.1h0M816.5 285.7h0M816.8 284.5h0M817.1 285.1h0M817.4 285.0h0M817.7 285.3h0M818.1 285.4h0M818.4 284.3h0M818.7 284.6h0M819.0 285.3h0M819.3 285.2h0M819.6 284.0h0M819.9 286.7h0M820.2 283.9h0M820.5 286.6h0M820.8 283.7h0M821.1 285.9h0M821.4 282.6h0M821.8 285.9h0M822.1 285.3h0M822.4 286.2h0M822.7 284.5h0M823.0 285.3h0M823.3 285.4h0M823.6 285.2h0M823.9 284.6h0M824.2 286.3h0M824.5 283.6h0M824.8 283.8h0M825.1 283.9h0M825.5 286.3h0M825.8 284.4h0M826.1 284.5h0M826.4 284.5h0M826.7 284.8h0M827.0 284.7h0M827.3 284.7h0M827.6 283.8h0M827.9 285.5h0M828.2 285.1h0M828.5 286.4h0M828.8 285.7h0M829.2 285.0h0M829.5 283.9h0M829.8 285.2h0M830.1 285.6h0M830.4 286.5h0M830.7 285.4h0M831.0 285.8h0M831.3 285.6h0M831.6 286.5h0M831.9 286.1h0M832.2 285.2h0M832.5 283.9h0M832.9 287.4h0M833.2 285.2h0M833.5 284.4h0M833.8 283.9h0M834.1 283.6h0M834.4 285.3h0M834.7 285.0h0M835.0 285.4h0M835.3 286.1h0M835.6 284.6h0M835.9 285.4h0M836.2 284.7h0M836.6 284.4h0M836.9 283.2h0M837.2 284.4h0M837.5 286.0h0M837.8 284.7h0M838.1 285.4h0M838.4 285.2h0M838.7 286.8h0M839.0 286.4h0M839.3 284.6h0M839.6 284.8h0M839.9 286.1h0M840.3 285.3h0M840.6 285.2h0M840.9 286.1h0M841.2 285.6h0M841.5 285.3h0M841.8 287.7h0M842.1 285.5h0M842.4 283.3h0M842.7 285.4h0M843.0 285.4h0M843.3 286.6h0M843.6 285.6h0M843.9 284.6h0M844.3 285.5h0M844.6 284.1h0M844.9 284.8h0M845.2 285.4h0M845.5 283.9h0M845.8 283.4h0M846.1 284.3h0M846.4 284.4h0M846.7 285.6h0M847.0 284.7h0M847.3 285.1h0M847.6 284.3h0M848.0 285.2h0M848.3 284.6h0M848.6 285.9h0M848.9 285.3h0M849.2 286.3h0M849.5 285.6h0M849.8 284.8h0M850.1 284.4h0M850.4 285.3h0M850.7 285.7h0M851.0 286.4h0M851.3 284.6h0M851.7 284.0h0M852.0 282.5h0M852.3 284.2h0M852.6 284.9h0M852.9 284.8h0M853.2 284.6h0M853.5 285.0h0M853.8 285.3h0M854.1 283.6h0M854.4 285.1h0M854.7 284.9h0M855.0 284.9h0M855.4 284.7h0M855.7 283.5h0M856.0 285.4h0M856.3 284.3h0M856.6 284.8h0M856.9 285.3h0M857.2 285.1h0M857.5 285.4h0M857.8 285.6h0M858.1 284.3h0M858.4 284.1h0M858.7 285.7h0M859.1 284.4h0M859.4 286.9h0M859.7 284.1h0M860.0 285.2h0M860.3 285.0h0M860.6 285.3h0M860.9 284.2h0M861.2 285.3h0M861.5 286.7h0M861.8 284.6h0M862.1 282.4h0M862.4 285.6h0M862.8 285.4h0M863.1 285.6h0M863.4 284.3h0M863.7 285.4h0M864.0 285.8h0M864.3 284.6h0M864.6 285.1h0M864.9 285.5h0M865.2 286.0h0M865.5 284.6h0M865.8 285.2h0M866.1 286.7h0M866.5 286.7h0M866.8 284.1h0M867.1 286.9h0M867.4 284.7h0M867.7 285.9h0M868.0 284.0h0M868.3 284.9h0M868.6 284.5h0M868.9 286.1h0M869.2 285.2h0M869.5 285.4h0M869.8 285.3h0M870.2 285.2h0M870.5 285.8h0M870.8 285.1h0M871.1 284.9h0M871.4 284.5h0M871.7 284.3h0M872.0 284.2h0M872.3 285.3h0M872.6 286.4h0M872.9 284.9h0M873.2 286.7h0M873.5 286.1h0M873.8 285.0h0M874.2 285.4h0M874.5 285.0h0M874.8 283.5h0M875.1 285.7h0M875.4 285.2h0M875.7 283.6h0M876.0 285.7h0M876.3 284.5h0M876.6 284.8h0M876.9 283.6h0M877.2 285.0h0M877.5 285.4h0M877.9 284.3h0M878.2 285.0h0M878.5 283.4h0M878.8 285.4h0M879.1 284.9h0M879.4 285.0h0M879.7 285.6h0M880.0 285.9h0M880.3 284.9h0M880.6 285.7h0M880.9 286.5h0M881.2 284.1h0M881.6 285.1h0M881.9 283.6h0M882.2 285.3h0M882.5 286.1h0M882.8 284.9h0M883.1 284.0h0M883.4 284.5h0M883.7 285.3h0M884.0 282.8h0M884.3 283.8h0M884.6 285.4h0M884.9 283.0h0M885.3 285.0h0M885.6 284.1h0M885.9 282.6h0M886.2 285.7h0M886.5 285.9h0M886.8 284.3h0M887.1 286.9h0M887.4 285.1h0M887.7 285.4h0M888.0 285.2h0M888.3 284.1h0M888.6 286.4h0M889.0 285.1h0M889.3 285.4h0M889.6 285.1h0M889.9 284.7h0M890.2 287.0h0M890.5 285.4h0M890.8 284.8h0M891.1 285.6h0M891.4 284.0h0M891.7 285.3h0M892.0 287.3h0M892.3 284.5h0M892.7 285.4h0M893.0 284.0h0M893.3 285.1h0M893.6 286.0h0M893.9 283.5h0M894.2 283.6h0M894.5 286.0h0M894.8 285.3h0M895.1 285.6h0M895.4 285.5h0M895.7 283.1h0M896.0 283.6h0M896.4 283.4h0M896.7 285.4h0M897.0 283.8h0M897.3 283.5h0M897.6 284.5h0M897.9 284.9h0M898.2 285.2h0M898.5 282.4h0M898.8 286.1h0M899.1 284.2h0M899.4 285.1h0M899.7 285.0h0M900.1 284.2h0M900.4 285.4h0M900.7 285.3h0M901.0 286.0h0M901.3 286.7h0M901.6 287.7h0M901.9 285.8h0M902.2 285.9h0M902.5 284.7h0M902.8 283.8h0M903.1 285.4h0M903.4 284.5h0M903.7 284.8h0M904.1 284.6h0M904.4 285.4h0M904.7 284.7h0M905.0 287.1h0M905.3 286.2h0M905.6 284.6h0M905.9 285.4h0M906.2 286.2h0M906.5 283.3h0M906.8 285.2h0M907.1 284.6h0M907.4 285.1h0M907.8 284.6h0M908.1 285.2h0M908.4 285.4h0M908.7 285.6h0M909.0 282.9h0M909.3 286.0h0M909.6 285.1h0M909.9 284.5h0M910.2 285.0h0M910.5 286.4h0M910.8 284.9h0M911.1 284.3h0M911.5 286.0h0M911.8 284.9h0M912.1 285.7h0M912.4 285.3h0M912.7 286.2h0M913.0 284.6h0M913.3 284.8h0M913.6 286.6h0M913.9 286.5h0M914.2 285.3h0M914.5 286.1h0M914.8 285.7h0M915.2 285.1h0M915.5 283.7h0M915.8 286.9h0M916.1 286.1h0M916.4 283.1h0M916.7 286.2h0M917.0 284.6h0M917.3 284.2h0M917.6 284.6h0M917.9 285.7h0M918.2 285.0h0M918.5 284.9h0M918.9 284.9h0M919.2 284.8h0M919.5 285.5h0M919.8 283.3h0M920.1 283.9h0M920.4 284.9h0M920.7 284.1h0M921.0 285.2h0M921.3 284.8h0M921.6 285.6h0M921.9 284.9h0M922.2 285.6h0M922.6 285.1h0M922.9 285.7h0M923.2 284.6h0M923.5 283.6h0M923.8 285.1h0M924.1 285.1h0M924.4 284.7h0M924.7 286.0h0M925.0 285.9h0M925.3 286.4h0M925.6 284.6h0M925.9 284.8h0M926.3 285.6h0M926.6 286.4h0M926.9 284.5h0M927.2 285.6h0M927.5 285.1h0M927.8 284.9h0M928.1 285.9h0M928.4 285.9h0M928.7 285.8h0M929.0 284.6h0M929.3 285.2h0M929.6 283.7h0M930.0 285.6h0M930.3 284.1h0M930.6 284.9h0M930.9 286.4h0M931.2 285.0h0M931.5 285.3h0M931.8 284.6h0M932.1 287.4h0M932.4 284.1h0M932.7 284.7h0M933.0 285.1h0M933.3 287.4h0M933.6 284.7h0M934.0 285.2h0M934.3 285.9h0M934.6 283.4h0M934.9 286.0h0M935.2 285.8h0M935.5 286.5h0M935.8 286.5h0M936.1 285.7h0M936.4 286.2h0M936.7 284.7h0M937.0 284.3h0M937.3 285.1h0M937.7 285.4h0M938.0 285.0h0M938.3 285.6h0M938.6 285.8h0M938.9 286.8h0M939.2 285.1h0M939.5 284.9h0M939.8 285.7h0M940.1 285.5h0M940.4 285.8h0M940.7 287.7h0M941.0 284.2h0M941.4 285.9h0M941.7 286.5h0M942.0 286.4h0M942.3 284.0h0M942.6 285.0h0M942.9 286.4h0M943.2 285.3h0M943.5 286.0h0M943.8 285.2h0M944.1 286.4h0M944.4 285.5h0M944.7 285.0h0M945.1 285.4h0M945.4 286.5h0M945.7 285.6h0M946.0 283.9h0M946.3 283.5h0M946.6 285.9h0M946.9 283.8h0M947.2 285.4h0M947.5 284.6h0M947.8 285.4h0M948.1 284.6h0M948.4 283.2h0M948.8 286.4h0M949.1 285.2h0M949.4 285.0h0M949.7 286.5h0M950.0 285.8h0M950.3 286.1h0M950.6 285.0h0M950.9 285.3h0M951.2 285.5h0M951.5 284.6h0M951.8 286.3h0M952.1 285.5h0M952.5 284.9h0M952.8 284.8h0M953.1 285.9h0M953.4 284.9h0M953.7 285.5h0M954.0 285.4h0M954.3 285.0h0M954.6 282.4h0M954.9 285.4h0M955.2 285.8h0M955.5 284.6h0M955.8 284.6h0M956.2 285.9h0M956.5 284.1h0M956.8 286.9h0M957.1 285.6h0M957.4 286.3h0M957.7 285.1h0M958.0 285.3h0M958.3 285.4h0M958.6 283.9h0M958.9 284.4h0M959.2 286.1h0M959.5 284.6h0M959.9 284.4h0M960.2 285.4h0M960.5 286.3h0M960.8 285.1h0M961.1 284.9h0M961.4 285.1h0M961.7 285.5h0M962.0 283.8h0M962.3 285.5h0M962.6 285.5h0M962.9 286.1h0M963.2 286.1h0M963.6 285.7h0M963.9 286.9h0M964.2 285.2h0M964.5 285.1h0M964.8 286.6h0M965.1 285.4h0M965.4 284.7h0M965.7 284.7h0M966.0 285.2h0M966.3 284.1h0M966.6 286.0h0M966.9 285.5h0M967.2 286.3h0M967.6 284.3h0M967.9 284.9h0M968.2 284.7h0M968.5 285.6h0M968.8 285.5h0M969.1 286.3h0M969.4 285.8h0M969.7 284.3h0M970.0 285.4h0M970.3 285.3h0M970.6 285.2h0M970.9 285.6h0M971.3 283.6h0M971.6 284.6h0M971.9 285.0h0M972.2 284.5h0M972.5 284.2h0M972.8 285.9h0M973.1 285.9h0M973.4 286.6h0M973.7 284.4h0M974.0 282.4h0M974.3 285.7h0M974.6 284.9h0M975.0 284.2h0M975.3 285.6h0M975.6 285.1h0M975.9 283.7h0M976.2 285.2h0M976.5 283.7h0M976.8 285.5h0M977.1 284.1h0M977.4 283.8h0M977.7 285.7h0M978.0 285.9h0M978.3 284.9h0M978.7 284.1h0M979.0 285.6h0M979.3 285.2h0M979.6 285.3h0M979.9 284.8h0M980.2 283.8h0M980.5 284.7h0M980.8 286.3h0M981.1 284.5h0M981.4 285.0h0M981.7 285.0h0M982.0 286.4h0M982.4 285.3h0M982.7 284.7h0M983.0 286.6h0M983.3 285.2h0M983.6 285.3h0M983.9 284.5h0M984.2 283.8h0M984.5 285.5h0M984.8 284.8h0M985.1 285.3h0M985.4 283.2h0M985.7 286.5h0M986.1 285.1h0M986.4 285.8h0M986.7 284.2h0M987.0 285.2h0M987.3 285.2h0M987.6 286.0h0M987.9 285.7h0M988.2 283.4h0M988.5 285.3h0M988.8 285.2h0M989.1 284.8h0M989.4 285.4h0M989.8 285.9h0M990.1 285.9h0M990.4 284.1h0M990.7 284.4h0M991.0 285.1h0M991.3 285.6h0M991.6 284.3h0M991.9 285.1h0M992.2 284.0h0M992.5 285.1h0M992.8 284.9h0M993.1 285.5h0M993.5 286.2h0M993.8 284.4h0M994.1 285.4h0M994.4 283.8h0M994.7 285.4h0M995.0 286.6h0M995.3 283.8h0M995.6 284.7h0M995.9 282.5h0M996.2 285.5h0M996.5 286.9h0M996.8 284.3h0M997.1 285.4h0M997.5 286.3h0M997.8 284.0h0M998.1 285.3h0M998.4 284.5h0M998.7 284.7h0M999.0 285.1h0M999.3 285.8h0M999.6 285.4h0M999.9 285.1h0M1000.2 284.9h0M1000.5 286.0h0M1000.8 285.5h0M1001.2 285.5h0M1001.5 283.6h0M1001.8 284.9h0M1002.1 283.6h0M1002.4 286.6h0M1002.7 285.7h0M1003.0 286.3h0M1003.3 284.4h0M1003.6 283.8h0M1003.9 284.5h0M1004.2 285.7h0M1004.5 284.6h0M1004.9 285.7h0M1005.2 286.3h0M1005.5 284.9h0M1005.8 286.0h0M1006.1 283.3h0M1006.4 284.1h0M1006.7 284.6h0M1007.0 284.9h0M1007.3 283.9h0M1007.6 284.8h0M1007.9 286.0h0M1008.2 285.9h0M1008.6 285.5h0M1008.9 284.4h0M1009.2 286.3h0M1009.5 285.7h0M1009.8 284.3h0M1010.1 286.0h0M1010.4 284.9h0M1010.7 285.6h0M1011.0 285.5h0M1011.3 285.6h0M1011.6 286.4h0M1011.9 287.3h0M1012.3 285.5h0M1012.6 285.3h0M1012.9 285.1h0M1013.2 285.6h0M1013.5 286.1h0M1013.8 284.1h0M1014.1 285.4h0M1014.4 287.1h0M1014.7 285.8h0M1015.0 286.8h0M1015.3 285.2h0M1015.6 287.0h0M1016.0 285.7h0M1016.3 284.8h0M1016.6 284.6h0M1016.9 285.6h0M1017.2 286.7h0M1017.5 284.3h0M1017.8 283.9h0M1018.1 283.3h0M1018.4 285.8h0M1018.7 284.3h0M1019.0 284.2h0M1019.3 284.3h0M1019.7 284.4h0M1020.0 285.8h0M1020.3 284.5h0M1020.6 285.3h0M1020.9 284.6h0M1021.2 284.9h0M1021.5 285.7h0M1021.8 285.7h0M1022.1 284.2h0M1022.4 285.2h0M1022.7 284.4h0M1023.0 285.8h0M1023.4 284.3h0M1023.7 284.4h0M1024.0 285.8h0M1024.3 284.7h0M1024.6 285.3h0M1024.9 285.8h0M1025.2 284.7h0M1025.5 284.9h0M1025.8 285.6h0M1026.1 287.1h0M1026.4 286.0h0M1026.7 285.8h0M1027.0 285.2h0M1027.4 285.1h0M1027.7 286.4h0M1028.0 284.5h0M1028.3 284.6h0M1028.6 286.4h0M1028.9 284.5h0M1029.2 284.1h0M1029.5 285.6h0M1029.8 286.0h0M1030.1 286.6h0M1030.4 287.0h0M1030.7 283.2h0M1031.1 285.0h0M1031.4 284.9h0M1031.7 285.5h0M1032.0 284.4h0M1032.3 285.2h0M1032.6 285.6h0M1032.9 285.3h0M1033.2 284.4h0M1033.5 285.4h0M1033.8 284.4h0M1034.1 284.0h0M1034.4 284.9h0M1034.8 285.8h0M1035.1 283.5h0M1035.4 285.1h0M1035.7 286.3h0M1036.0 285.3h0M1036.3 284.7h0M1036.6 285.4h0M1036.9 286.5h0M1037.2 285.0h0M1037.5 284.6h0M1037.8 285.8h0M1038.1 284.9h0M1038.5 284.6h0M1038.8 285.8h0M1039.1 284.0h0M1039.4 284.9h0M1039.7 286.3h0M1040.0 285.3h0M1040.3 286.2h0M1040.6 283.6h0M1040.9 283.9h0M1041.2 284.5h0M1041.5 285.0h0M1041.8 283.5h0M1042.2 285.3h0M1042.5 284.7h0M1042.8 284.7h0M1043.1 285.2h0M1043.4 284.9h0M1043.7 284.1h0M1044.0 284.9h0M1044.3 284.1h0M1044.6 286.2h0M1044.9 284.7h0M1045.2 284.7h0M1045.5 284.6h0M1045.9 285.1h0M1046.2 285.3h0M1046.5 285.0h0M1046.8 284.2h0M1047.1 286.1h0M1047.4 285.1h0M1047.7 283.5h0M1048.0 282.4h0M1048.3 284.2h0M1048.6 284.1h0M1048.9 283.7h0M1049.2 284.3h0M1049.6 285.4h0M1049.9 286.9h0M1050.2 285.3h0M1050.5 285.4h0M1050.8 286.7h0M1051.1 287.0h0M1051.4 286.1h0M1051.7 285.6h0M1052.0 285.0h0M1052.3 284.3h0M1052.6 285.5h0M1052.9 286.1h0M1053.3 285.4h0M1053.6 284.6h0M1053.9 285.6h0M1054.2 285.0h0M1054.5 284.6h0M1054.8 283.4h0M1055.1 285.6h0M1055.4 284.5h0M1055.7 286.1h0M1056.0 284.2h0M1056.3 285.2h0M1056.6 284.6h0M1056.9 286.6h0M1057.3 286.3h0M1057.6 285.1h0M1057.9 286.3h0M1058.2 284.1h0M1058.5 285.7h0M1058.8 284.3h0M1059.1 285.0h0M1059.4 284.5h0M1059.7 285.6h0M1060.0 283.6h0M1060.3 284.7h0M1060.6 286.3h0M1061.0 283.2h0M1061.3 284.9h0M1061.6 284.0h0M1061.9 282.9h0M1062.2 285.5h0M1062.5 284.7h0M1062.8 286.2h0M1063.1 283.5h0M1063.4 285.4h0M1063.7 286.5h0M1064.0 283.6h0M1064.3 285.7h0M1064.7 285.7h0M1065.0 285.3h0M1065.3 286.3h0M1065.6 285.7h0M1065.9 284.5h0M1066.2 284.5h0M1066.5 285.0h0M1066.8 286.5h0M1067.1 285.0h0M1067.4 285.9h0M1067.7 285.0h0M1068.0 285.7h0M1068.4 285.6h0M1068.7 286.2h0M1069.0 286.7h0M1069.3 284.7h0M1069.6 284.2h0M1069.9 285.1h0M1070.2 285.1h0M1070.5 285.4h0M1070.8 286.0h0M1071.1 284.8h0M1071.4 285.2h0M1071.7 285.2h0M1072.1 286.8h0M1072.4 284.6h0M1072.7 286.2h0M1073.0 286.8h0M1073.3 285.0h0M1073.6 286.4h0M1073.9 285.7h0M1074.2 285.1h0M1074.5 287.7h0M1074.8 286.3h0M1075.1 284.9h0M1075.4 286.1h0M1075.8 284.6h0M1076.1 284.0h0M1076.4 286.1h0M1076.7 285.2h0M1077.0 286.6h0M1077.3 285.4h0M1077.6 285.4h0M1077.9 285.1h0M1078.2 285.4h0M1078.5 284.5h0M1078.8 285.0h0M1079.1 283.7h0M1079.5 283.7h0M1079.8 284.0h0M1080.1 284.4h0M1080.4 285.1h0M1080.7 285.0h0M1081.0 286.2h0M1081.3 287.3h0M1081.6 282.4h0M1081.9 286.4h0M1082.2 286.0h0M1082.5 284.7h0M1082.8 285.3h0M1083.2 283.5h0M1083.5 285.0h0M1083.8 286.5h0M1084.1 284.2h0M1084.4 284.7h0M1084.7 285.4h0M1085.0 285.8h0M1085.3 285.2h0M1085.6 284.7h0M1085.9 285.7h0M1086.2 284.7h0M1086.5 287.2h0M1086.9 286.2h0M1087.2 285.3h0M1087.5 284.5h0M1087.8 284.7h0M1088.1 284.2h0M1088.4 284.9h0M1088.7 285.5h0M1089.0 284.1h0M1089.3 285.4h0M1089.6 285.2h0M1089.9 284.4h0M1090.2 287.0h0M1090.5 285.6h0M1090.9 285.4h0M1091.2 284.7h0M1091.5 284.5h0M1091.8 285.2h0M1092.1 283.9h0M1092.4 285.5h0M1092.7 284.2h0M1093.0 285.1h0M1093.3 285.7h0M1093.6 284.8h0M1093.9 284.6h0M1094.2 284.5h0M1094.6 285.3h0M1094.9 284.2h0M1095.2 285.1h0M1095.5 286.0h0M1095.8 282.5h0M1096.1 284.5h0M1096.4 285.4h0M1096.7 284.2h0M1097.0 284.2h0M1097.3 284.1h0M1097.6 285.8h0M1097.9 283.3h0M1098.3 285.0h0M1098.6 284.9h0M1098.9 285.1h0M1099.2 284.4h0M1099.5 285.2h0M1099.8 284.3h0M1100.1 284.4h0M1100.4 287.3h0M1100.7 286.5h0M1101.0 283.5h0M1101.3 284.5h0M1101.6 285.5h0M1102.0 286.3h0M1102.3 284.9h0M1102.6 285.7h0M1102.9 285.3h0M1103.2 286.1h0M1103.5 284.6h0M1103.8 284.4h0M1104.1 285.3h0M1104.4 285.5h0M1104.7 285.1h0M1105.0 286.1h0M1105.3 285.7h0M1105.7 285.2h0M1106.0 284.1h0M1106.3 285.7h0M1106.6 285.8h0M1106.9 284.6h0M1107.2 285.0h0M1107.5 283.5h0M1107.8 285.2h0M1108.1 284.9h0M1108.4 283.6h0M1108.7 285.1h0M1109.0 284.8h0M1109.4 284.8h0M1109.7 286.0h0M1110.0 285.5h0M1110.3 285.8h0M1110.6 284.6h0M1110.9 286.2h0M1111.2 284.5h0M1111.5 285.7h0M1111.8 283.9h0M1112.1 285.3h0M1112.4 284.3h0M1112.7 283.9h0M1113.1 285.7h0M1113.4 285.3h0M1113.7 285.5h0M1114.0 285.1h0M1114.3 285.5h0M1114.6 285.1h0M1114.9 285.0h0M1115.2 285.2h0M1115.5 287.1h0M1115.8 284.3h0M1116.1 283.9h0M1116.4 284.3h0M1116.8 284.2h0M1117.1 285.6h0M1117.4 286.1h0M1117.7 286.8h0M1118.0 285.0h0M1118.3 285.8h0M1118.6 286.7h0M1118.9 285.7h0M1119.2 286.3h0M1119.5 284.3h0M1119.8 285.9h0M1120.1 286.3h0M1120.4 284.1h0M1120.8 285.2h0M1121.1 285.7h0M1121.4 284.4h0M1121.7 285.9h0M1122.0 286.0h0M1122.3 285.4h0M1122.6 285.1h0M1122.9 285.0h0M1123.2 285.7h0M1123.5 286.1h0M1123.8 284.0h0M1124.1 285.3h0M1124.5 285.5h0M1124.8 284.4h0M1125.1 284.1h0M1125.4 285.0h0M1125.7 283.7h0M1126.0 285.3h0M1126.3 284.9h0M1126.6 284.2h0M1126.9 285.1h0M1127.2 284.4h0M1127.5 284.1h0M1127.8 286.1h0M1128.2 284.5h0M1128.5 283.0h0M1128.8 285.4h0M1129.1 284.2h0M1129.4 284.4h0M1129.7 287.3h0M1130.0 285.1h0M1130.3 285.8h0M1130.6 283.2h0M1130.9 284.2h0M1131.2 284.4h0M1131.5 286.1h0M1131.9 284.5h0M1132.2 283.5h0M1132.5 285.7h0M1132.8 284.7h0M1133.1 285.2h0M1133.4 286.2h0M1133.7 286.9h0M1134.0 285.1h0M1134.3 286.4h0M1134.6 283.9h0M1134.9 285.2h0M1135.2 285.4h0M1135.6 283.2h0M1135.9 284.3h0M1136.2 284.5h0M1136.5 285.5h0M1136.8 284.7h0M1137.1 284.7h0M1137.4 284.5h0M1137.7 285.5h0M1138.0 285.0h0M1138.3 285.0h0M1138.6 284.9h0M1138.9 285.7h0M1139.3 284.5h0M1139.6 285.1h0M1139.9 285.1h0M1140.2 285.4h0M1140.5 286.5h0M1140.8 285.4h0M1141.1 284.0h0M1141.4 286.0h0M1141.7 286.2h0M1142.0 286.9h0M1142.3 285.9h0M1142.6 283.8h0M1143.0 285.1h0M1143.3 285.8h0M1143.6 285.9h0M1143.9 285.1h0M1144.2 285.3h0M1144.5 283.7h0M1144.8 285.5h0M1145.1 283.4h0M1145.4 285.0h0M1145.7 286.0h0M1146.0 284.2h0M1146.3 286.3h0M1146.7 286.8h0M1147.0 285.6h0M1147.3 284.8h0M1147.6 284.8h0M1147.9 284.2h0M1148.2 285.8h0M1148.5 283.7h0M1148.8 285.4h0M1149.1 284.3h0M1149.4 285.7h0M1149.7 284.0h0M1150.0 285.1h0M1150.3 284.6h0M1150.7 286.1h0M1151.0 284.9h0M1151.3 285.1h0M1151.6 286.1h0M1151.9 284.3h0M1152.2 284.1h0M1152.5 285.1h0M1152.8 284.3h0M1153.1 286.6h0M1153.4 285.3h0M1153.7 285.4h0M1154.0 284.9h0M1154.4 282.5h0M1154.7 286.2h0M1155.0 285.1h0M1155.3 283.5h0M1155.6 284.3h0M1155.9 285.1h0M1156.2 286.2h0M1156.5 285.5h0M1156.8 285.7h0M1157.1 285.4h0M1157.4 284.4h0M1157.7 284.6h0M1158.1 285.2h0M1158.4 284.0h0M1158.7 285.2h0M1159.0 285.7h0M1159.3 283.2h0M1159.6 285.0h0M1159.9 284.9h0M1160.2 285.2h0M1160.5 286.6h0M1160.8 284.0h0M1161.1 286.8h0M1161.4 285.7h0M1161.8 287.3h0M1162.1 284.8h0M1162.4 285.7h0M1162.7 285.1h0M1163.0 285.6h0M1163.3 284.4h0M1163.6 284.5h0M1163.9 285.0h0M1164.2 286.1h0M1164.5 284.1h0M1164.8 284.9h0M1165.1 284.3h0M1165.5 285.4h0M1165.8 285.8h0M1166.1 283.9h0M1166.4 284.3h0M1166.7 284.8h0M1167.0 284.3h0M1167.3 287.2h0M1167.6 286.6h0M1167.9 285.8h0M1168.2 285.6h0M1168.5 284.2h0M1168.8 284.3h0M1169.2 285.5h0M1169.5 286.4h0M1169.8 284.8h0M1170.1 285.4h0M1170.4 287.4h0M1170.7 287.6h0M1171.0 284.3h0M1171.3 285.4h0M1171.6 285.8h0M1171.9 283.7h0M1172.2 284.7h0M1172.5 285.3h0M1172.9 284.7h0M1173.2 285.6h0M1173.5 284.8h0M1173.8 283.7h0M1174.1 284.0h0M1174.4 282.4h0M1174.7 284.0h0M1175.0 285.6h0M1175.3 285.3h0M1175.6 285.5h0M1175.9 286.2h0M1176.2 284.1h0M1176.6 284.7h0M1176.9 285.2h0M1177.2 287.4h0M1177.5 285.3h0M1177.8 285.0h0M1178.1 285.3h0M1178.4 284.3h0M1178.7 283.4h0M1179.0 285.5h0M1179.3 284.7h0M1179.6 285.5h0M1179.9 283.4h0M1180.2 284.3h0M1180.6 285.7h0M1180.9 285.3h0M1181.2 285.9h0M1181.5 284.5h0M1181.8 285.1h0M1182.1 285.7h0M1182.4 285.8h0M1182.7 285.0h0M1183.0 285.3h0M1183.3 284.9h0M1183.6 285.0h0M1183.9 285.0h0M1184.3 285.5h0M1184.6 283.9h0M1184.9 285.0h0M1185.2 284.2h0M1185.5 285.1h0M1185.8 284.8h0M1186.1 285.2h0M1186.4 284.8h0M1186.7 284.9h0M1187.0 283.9h0M1187.3 286.2h0M1187.6 283.1h0M1188.0 283.4h0M1188.3 285.5h0M1188.6 285.5h0M1188.9 284.9h0M1189.2 284.7h0M1189.5 284.1h0M1189.8 287.6h0M1190.1 283.6h0M1190.4 287.0h0M1190.7 283.7h0M1191.0 284.2h0M1191.3 284.8h0M1191.7 284.6h0M1192.0 285.6h0M1192.3 284.3h0M1192.6 284.7h0M1192.9 283.7h0M1193.2 286.0h0M1193.5 284.8h0M1193.8 284.4h0M1194.1 285.0h0M1194.4 285.8h0M1194.7 285.3h0M1195.0 284.4h0M1195.4 285.2h0M1195.7 285.3h0M1196.0 285.4h0M1196.3 284.8h0M1196.6 285.6h0M1196.9 284.1h0M1197.2 285.2h0M1197.5 284.4h0M1197.8 285.1h0M1198.1 284.6h0M1198.4 285.7h0M1198.7 284.7h0M1199.1 286.1h0M1199.4 284.3h0M1199.7 286.0h0M1200.0 284.4h0M1200.3 283.0h0M1232.3 271.9h0M1220.3 272.4h0M1224.3 272.5h0M1229.4 272.6h0M1233.4 272.5h0M1219.1 273.0h0M1225.4 272.9h0M1231.1 272.9h0M1233.4 273.2h0M1222.0 273.3h0M1227.1 273.4h0M1218.6 274.4h0M1223.1 274.4h0M1228.3 274.4h0M1234.0 274.2h0M1220.9 274.8h0M1225.4 274.8h0M1229.4 274.7h0M1233.4 274.8h0M1222.0 275.1h0M1227.1 275.2h0M1234.6 275.2h0M1241.4 274.7h0M1239.1 275.4h0M1219.1 275.7h0M1222.6 275.8h0M1227.4 275.7h0M1235.7 275.6h0M1234.0 276.1h0M1238.0 276.1h0M1241.4 276.4h0M1235.1 276.8h0M1238.6 277.0h0M1237.4 277.4h0M1240.3 277.4h0M1238.0 277.8h0M1240.3 278.0h0M1236.3 278.3h0M1250.4 272.1h0M1253.4 272.4h0M1247.6 272.8h0M1251.9 272.8h0M1255.7 272.8h0M1258.0 272.9h0M1245.0 273.4h0M1250.4 273.2h0M1254.2 273.3h0M1258.8 273.5h0M1243.5 274.4h0M1248.1 274.3h0M1253.4 274.3h0M1258.0 274.4h0M1262.6 274.4h0M1245.0 275.0h0M1249.6 274.9h0M1254.2 275.0h0M1259.5 275.0h0M1263.3 274.9h0M1243.5 275.6h0M1246.6 275.7h0M1255.0 275.6h0M1261.8 275.5h0M1242.0 276.1h0M1260.3 276.0h0M1261.0 276.5h0M1260.3 276.7h0M1256.5 277.1h0M1264.1 277.5h0M1267.9 269.2h0M1267.1 269.9h0M1269.4 270.4h0M1267.1 271.1h0M1264.1 271.6h0M1267.9 271.5h0M1264.9 271.9h0M1263.3 272.5h0M1266.4 272.8h0M1263.3 273.3h0M1271.0 273.2h0M1268.3 269.2h0M1269.0 269.6h0M1267.5 269.9h0M1269.8 270.2h0M1270.6 270.6h0M1284.3 269.7h0M1284.3 270.1h0M1283.5 270.5h0M1275.9 270.1h0M1276.7 270.4h0M1279.0 270.7h0M1267.5 271.1h0M1271.3 271.3h0M1275.1 271.1h0M1283.5 271.2h0M1266.8 271.7h0M1270.6 271.7h0M1274.4 271.6h0M1277.4 271.7h0M1282.8 271.8h0M1268.3 272.2h0M1272.9 272.3h0M1276.7 272.2h0M1281.2 272.3h0M1268.3 272.7h0M1272.1 272.6h0M1275.9 272.7h0M1280.5 272.8h0M1286.6 272.6h0M1293.4 272.7h0M1301.0 272.7h0M1266.8 273.3h0M1271.3 273.1h0M1275.9 273.2h0M1282.8 273.4h0M1286.6 273.1h0M1291.9 273.2h0M1302.6 273.1h0M1273.6 274.4h0M1279.7 274.4h0M1285.0 274.4h0M1291.9 274.4h0M1295.7 274.4h0M1299.5 274.4h0M1275.1 274.6h0M1294.9 274.7h0M1298.8 274.9h0M1280.5 275.2h0M1287.3 275.1h0M1291.1 275.3h0M1296.5 275.1h0M1299.5 275.4h0M1288.1 275.9h0M1288.9 276.1h0M1296.5 275.9h0M1300.3 276.7h0M1287.3 277.5h0M1298.1 274.7h0M1292.0 274.4h0M1231.7 274.2h0M1288.6 275.5h0M1269.5 274.4h0M1286.1 273.4h0M1297.0 274.3h0M1277.2 274.6h0M1222.3 274.5h0M1244.8 274.2h0M1227.9 273.7h0M1245.9 275.1h0M1268.7 274.1h0M1295.7 276.0h0M1237.2 273.7h0M1301.3 275.1h0M1296.3 275.6h0M1300.5 274.9h0M1270.2 274.4h0M1249.2 273.3h0M1286.8 274.4h0M1239.7 272.9h0M1217.2 273.1h0M1265.4 274.2h0M1289.4 272.4h0M1259.8 274.6h0M1237.2 273.8h0M1285.0 274.8h0M1243.4 272.6h0M1293.3 273.6h0M1249.2 274.0h0M1235.5 274.6h0M1288.6 274.3h0M1274.9 274.4h0M1250.7 274.3h0M1221.5 273.3h0M1300.8 275.4h0M1265.1 274.7h0M1238.2 273.6h0M1300.3 275.6h0M1263.8 274.0h0M1299.3 273.4h0M1298.7 271.9h0M1258.8 274.4h0M1232.3 274.7h0M1286.5 274.7h0M1278.3 273.8h0M1234.7 274.9h0M1270.0 274.6h0M1247.2 274.4h0M1259.3 273.3h0M1240.8 274.1h0M1252.0 274.2h0M1272.4 274.1h0M1217.0 274.2h0M1219.8 273.1h0M1278.1 274.8h0M1227.8 271.9h0M1287.5 274.9h0M1236.2 272.8h0M1275.4 272.8h0M1266.0 273.8h0M1243.1 271.7h0M1259.7 274.8h0M1258.9 274.2h0M1282.4 273.4h0M1296.6 275.1h0M1222.8 275.7h0M1262.8 272.1h0M1241.3 274.1h0" stroke="#000" stroke-width="3.8" stroke-linecap="round" fill="none"/>
<path d="M162 320.9V35.5" stroke="#800080" stroke-width="2.083" stroke-dasharray="2.083 3.4375"/>
<path d="M1201 320.9V35.5" stroke="#800080" stroke-width="2.083" stroke-dasharray="2.083 3.4375"/>
<path d="M1303 320.9V35.5" stroke="#800080" stroke-width="2.083" stroke-dasharray="2.083 3.4375"/>
<path d="M177.3 282.4h0M224.3 281.1h0M282.4 288.3h0M515.5 288.1h0M557.3 295.6h0M603.2 282.1h0M734.1 292.0h0M812.3 298.1h0M1001.3 288.3h0M1035.2 282.3h0M1047.5 288.3h0M1181.3 282.4h0M1194.4 281.8h0M771.4 59.5h0M1115.5 98.5h0" stroke="#ffa500" stroke-width="3.2" stroke-linecap="round" fill="none"/>
<text transform="matrix(1.1219 0 0 1.0597 658.81 312)" font-size="13.89" fill="#000" style="">59997</text>
<text transform="matrix(1.1253 0 0 1.0597 1229.78 292)" font-size="13.89" fill="#000" style="">42177</text>
<path d="M103.5 281.8H1360.8" stroke="#008000" stroke-width="2.083"/>
</g>
<rect x="105.5" y="35.5" width="1380" height="286" fill="none" stroke="#000" stroke-width="1.111" stroke-linejoin="miter"/>
<path d="M162.5 321.5L162.5 326.36" stroke="#000" stroke-width="1.11"/>
<text transform="matrix(1.0543 0 0 1.0597 158.43 342)" font-size="13.89" fill="#000" style="">0</text>
<path d="M316.5 321.5L316.5 326.36" stroke="#000" stroke-width="1.11"/>
<text transform="matrix(1.1106 0 0 1.0597 303.75 342)" font-size="13.89" fill="#000" style="">500</text>
<path d="M470.5 321.5L470.5 326.36" stroke="#000" stroke-width="1.11"/>
<text transform="matrix(1.1230 0 0 1.0597 453.11 342)" font-size="13.89" fill="#000" style="">1000</text>
<path d="M624.5 321.5L624.5 326.36" stroke="#000" stroke-width="1.11"/>
<text transform="matrix(1.1230 0 0 1.0597 607.24 342)" font-size="13.89" fill="#000" style="">1500</text>
<path d="M779.5 321.5L779.5 326.36" stroke="#000" stroke-width="1.11"/>
<text transform="matrix(1.1265 0 0 1.0597 761.51 342)" font-size="13.89" fill="#000" style="">2000</text>
<path d="M933.5 321.5L933.5 326.36" stroke="#000" stroke-width="1.11"/>
<text transform="matrix(1.1265 0 0 1.0597 915.63 342)" font-size="13.89" fill="#000" style="">2500</text>
<path d="M1087.5 321.5L1087.5 326.36" stroke="#000" stroke-width="1.11"/>
<text transform="matrix(1.1187 0 0 1.0597 1069.97 342)" font-size="13.89" fill="#000" style="">3000</text>
<path d="M1241.5 321.5L1241.5 326.36" stroke="#000" stroke-width="1.11"/>
<text transform="matrix(1.1187 0 0 1.0597 1224.1 342)" font-size="13.89" fill="#000" style="">3500</text>
<path d="M1395.5 321.5L1395.5 326.36" stroke="#000" stroke-width="1.11"/>
<text transform="matrix(1.1235 0 0 1.0597 1378.27 342)" font-size="13.89" fill="#000" style="">4000</text>
<path d="M100.64 299.5L105.5 299.5" stroke="#000" stroke-width="1.11"/>
<text transform="matrix(1.1115 0 0 1.0597 73.39 303.8)" font-size="13.89" fill="#000" style="">7.8</text>
<path d="M100.64 259.5L105.5 259.5" stroke="#000" stroke-width="1.11"/>
<text transform="matrix(1.1136 0 0 1.0597 73.31 263.8)" font-size="13.89" fill="#000" style="">8.0</text>
<path d="M100.64 218.5L105.5 218.5" stroke="#000" stroke-width="1.11"/>
<text transform="matrix(1.0971 0 0 1.0597 73.32 222.8)" font-size="13.89" fill="#000" style="">8.2</text>
<path d="M100.64 178.5L105.5 178.5" stroke="#000" stroke-width="1.11"/>
<text transform="matrix(1.1131 0 0 1.0597 73.31 182.8)" font-size="13.89" fill="#000" style="">8.4</text>
<path d="M100.64 138.5L105.5 138.5" stroke="#000" stroke-width="1.11"/>
<text transform="matrix(1.1204 0 0 1.0597 73.3 142.8)" font-size="13.89" fill="#000" style="">8.6</text>
<path d="M100.64 98.5L105.5 98.5" stroke="#000" stroke-width="1.11"/>
<text transform="matrix(1.1158 0 0 1.0597 73.31 102.8)" font-size="13.89" fill="#000" style="">8.8</text>
<path d="M100.64 57.5L105.5 57.5" stroke="#000" stroke-width="1.11"/>
<text transform="matrix(1.1203 0 0 1.0597 73.18 61.8)" font-size="13.89" fill="#000" style="">9.0</text>
<text transform="matrix(1.0839 0 0 1.0597 696.46 27)" font-size="16.67" fill="#000" style="">AGASC ID 158205440.0</text>
<rect x="1361.2" y="42.3" width="117.6" height="27.2" rx="2.8" ry="2.8" fill="#fff" fill-opacity="0.8" stroke="#cccccc" stroke-opacity="0.8" stroke-width="1.389"/>
<path d="M1366.9 54H1395.2" stroke="#008000" stroke-width="2.083" stroke-linecap="square"/>
<text transform="matrix(1.1243 0 0 1.0597 1406.86 59.1)" font-size="13.89" fill="#000" style="">mag</text>
<text transform="matrix(0.9916 0 0 1.0597 1437.78 60.9)" font-size="9.72" fill="#000" style="font-style:italic;">AGASC</text>
<rect x="1381.5" y="268.6" width="97" height="45.8" rx="2.8" ry="2.8" fill="#fff" fill-opacity="0.8" stroke="#cccccc" stroke-opacity="0.8" stroke-width="1.389"/>
<path d="M1400.6 281.4h0" stroke="#ff0000" stroke-width="3.6" stroke-linecap="round" fill="none"/>
<path d="M1400.6 302.2h0" stroke="#000" stroke-width="3.8" stroke-linecap="round" fill="none"/>
<text transform="matrix(1.0967 0 0 1.0597 1424.79 285)" font-size="13.89" fill="#000" style="">not OK</text>
<text transform="matrix(1.0155 0 0 1.0597 1425.53 305.8)" font-size="13.89" fill="#000" style="">OK</text>
<g clip-path="url(#c2)">
<path d="M176.0 519.6h0M176.3 533.9h0M176.6 528.5h0M176.9 532.9h0M177.2 523.5h0M177.5 525.8h0M177.8 523.8h0M178.1 539.8h0M178.4 518.1h0M178.7 533.6h0M179.1 530.9h0M179.4 542.5h0M179.7 531.0h0M180.0 522.7h0M180.3 532.5h0M180.6 510.7h0M180.9 535.9h0M181.2 528.5h0M181.5 524.5h0M181.8 526.0h0M182.1 532.9h0M182.4 518.5h0M182.8 540.1h0M183.1 524.7h0M183.4 538.9h0M183.7 530.3h0M184.0 541.4h0M184.3 521.4h0M184.6 534.8h0M184.9 528.8h0M185.2 525.1h0M185.5 534.6h0M185.8 526.5h0M186.1 524.5h0M186.5 527.8h0M186.8 520.7h0M187.1 527.7h0M187.4 528.5h0M187.7 536.1h0M188.0 528.6h0M188.3 524.2h0M188.6 534.0h0M188.9 526.8h0M189.2 518.6h0M189.5 521.4h0M189.8 540.4h0M190.2 528.4h0M190.5 539.5h0M190.8 522.8h0M191.1 522.3h0M191.4 540.1h0M191.7 527.5h0M192.0 527.9h0M192.3 527.7h0M192.6 522.5h0M192.9 535.6h0M193.2 521.3h0M193.5 534.0h0M193.8 522.2h0M194.2 545.9h0M194.5 533.7h0M194.8 536.2h0M195.1 518.2h0M195.4 531.3h0M195.7 525.0h0M196.0 523.5h0M196.3 523.7h0M196.6 534.4h0M196.9 529.4h0M197.2 525.9h0M197.5 525.2h0M197.9 525.0h0M198.2 525.6h0M198.5 527.3h0M198.8 521.7h0M199.1 523.3h0M199.4 514.9h0M199.7 528.9h0M200.0 532.7h0M200.3 525.9h0M200.6 537.9h0M200.9 524.2h0M201.2 529.3h0M201.6 536.5h0M201.9 530.7h0M202.2 524.0h0M202.5 531.4h0M202.8 526.5h0M203.1 536.2h0M203.4 534.0h0M203.7 527.7h0M204.0 532.5h0M204.3 540.2h0M204.6 540.9h0M204.9 534.6h0M205.3 528.0h0M205.6 525.4h0M205.9 520.9h0M206.2 535.7h0M206.5 522.3h0M206.8 531.7h0M207.1 539.4h0M207.4 519.0h0M207.7 531.4h0M208.0 522.8h0M208.3 528.4h0M208.6 532.5h0M209.0 522.9h0M209.3 520.8h0M209.6 526.6h0M209.9 530.5h0M210.2 526.7h0M210.5 518.8h0M210.8 536.2h0M211.1 522.0h0M211.4 513.6h0M211.7 529.8h0M212.0 542.9h0M212.3 523.6h0M212.7 528.6h0M213.0 522.6h0M213.3 525.3h0M213.6 522.0h0M213.9 530.9h0M214.2 524.8h0M214.5 524.1h0M214.8 535.1h0M215.1 519.9h0M215.4 535.1h0M215.7 528.0h0M216.0 523.3h0M216.4 528.7h0M216.7 527.4h0M217.0 531.2h0M217.3 527.8h0M217.6 541.2h0M217.9 535.9h0M218.2 536.3h0M218.5 516.2h0M218.8 527.0h0M219.1 536.8h0M219.4 533.0h0M219.7 529.4h0M220.1 528.7h0M220.4 535.9h0M220.7 517.1h0M221.0 523.7h0M221.3 520.4h0M221.6 536.6h0M221.9 514.4h0M222.2 527.5h0M222.5 537.9h0M222.8 527.4h0M223.1 531.1h0M223.4 529.5h0M223.8 533.6h0M224.1 543.3h0M224.4 521.8h0M224.7 529.0h0M225.0 546.8h0M225.3 549.0h0M225.6 527.9h0M225.9 538.2h0M226.2 533.6h0M226.5 533.4h0M226.8 520.3h0M227.1 519.0h0M227.4 530.7h0M227.8 528.6h0M228.1 528.2h0M228.4 516.7h0M228.7 538.6h0M229.0 528.2h0M229.3 546.7h0M229.6 527.9h0M229.9 531.7h0M230.2 534.2h0M230.5 525.6h0M230.8 523.0h0M231.1 525.8h0M231.5 529.5h0M231.8 526.2h0M232.1 542.1h0M232.4 526.1h0M232.7 534.3h0M233.0 534.6h0M233.3 531.4h0M233.6 522.6h0M233.9 532.7h0M234.2 535.5h0M234.5 530.5h0M234.8 529.6h0M235.2 515.7h0M235.5 517.8h0M235.8 528.3h0M236.1 530.7h0M236.4 534.2h0M236.7 527.5h0M237.0 530.6h0M237.3 522.9h0M237.6 533.5h0M237.9 534.1h0M238.2 528.7h0M238.5 535.6h0M238.9 526.2h0M239.2 526.3h0M239.5 527.6h0M239.8 542.2h0M240.1 519.2h0M240.4 530.7h0M240.7 527.2h0M241.0 530.2h0M241.3 520.1h0M241.6 534.1h0M241.9 533.7h0M242.2 527.8h0M242.6 526.8h0M242.9 529.9h0M243.2 535.6h0M243.5 519.8h0M243.8 538.4h0M244.1 527.5h0M244.4 534.9h0M244.7 524.3h0M245.0 549.0h0M245.3 532.5h0M245.6 540.9h0M245.9 525.7h0M246.3 525.5h0M246.6 536.8h0M246.9 534.2h0M247.2 531.9h0M247.5 537.6h0M247.8 532.4h0M248.1 527.6h0M248.4 509.8h0M248.7 515.2h0M249.0 533.9h0M249.3 533.4h0M249.6 524.0h0M250.0 535.7h0M250.3 528.5h0M250.6 530.4h0M250.9 535.9h0M251.2 519.8h0M251.5 532.1h0M251.8 533.1h0M252.1 528.6h0M252.4 530.9h0M252.7 522.6h0M253.0 530.8h0M253.3 533.8h0M253.7 534.8h0M254.0 525.4h0M254.3 534.9h0M254.6 531.8h0M254.9 534.1h0M255.2 529.6h0M255.5 533.8h0M255.8 531.1h0M256.1 545.3h0M256.4 527.9h0M256.7 537.0h0M257.0 529.7h0M257.3 520.3h0M257.7 532.8h0M258.0 537.6h0M258.3 534.6h0M258.6 534.8h0M258.9 521.3h0M259.2 531.7h0M259.5 521.0h0M259.8 541.1h0M260.1 539.6h0M260.4 523.2h0M260.7 527.3h0M261.0 521.9h0M261.4 525.0h0M261.7 526.9h0M262.0 522.3h0M262.3 526.8h0M262.6 533.8h0M262.9 527.9h0M263.2 537.5h0M263.5 528.7h0M263.8 531.0h0M264.1 516.5h0M264.4 535.6h0M264.7 522.5h0M265.1 527.4h0M265.4 521.5h0M265.7 532.9h0M266.0 523.0h0M266.3 535.9h0M266.6 542.0h0M266.9 533.5h0M267.2 515.4h0M267.5 536.0h0M267.8 530.9h0M268.1 536.4h0M268.4 532.4h0M268.8 537.2h0M269.1 536.3h0M269.4 529.4h0M269.7 521.9h0M270.0 529.3h0M270.3 534.7h0M270.6 510.2h0M270.9 531.6h0M271.2 518.3h0M271.5 537.0h0M271.8 541.7h0M272.1 535.5h0M272.5 525.6h0M272.8 534.9h0M273.1 538.4h0M273.4 548.0h0M273.7 539.0h0M274.0 536.9h0M274.3 523.6h0M274.6 529.3h0M274.9 532.9h0M275.2 530.2h0M275.5 517.4h0M275.8 528.8h0M276.2 525.4h0M276.5 531.2h0M276.8 532.1h0M277.1 514.8h0M277.4 525.0h0M277.7 530.9h0M278.0 523.2h0M278.3 529.6h0M278.6 524.5h0M278.9 525.3h0M279.2 535.4h0M279.5 529.0h0M279.9 526.3h0M280.2 539.6h0M280.5 527.8h0M280.8 529.6h0M281.1 529.9h0M281.4 549.0h0M281.7 533.8h0M282.0 535.3h0M282.3 527.4h0M282.6 535.2h0M282.9 542.0h0M283.2 522.3h0M283.6 532.6h0M283.9 547.5h0M284.2 541.4h0M284.5 531.4h0M284.8 544.6h0M285.1 525.5h0M285.4 536.5h0M285.7 533.3h0M286.0 523.2h0M286.3 536.3h0M286.6 521.8h0M286.9 525.7h0M287.2 529.2h0M287.6 522.2h0M287.9 537.4h0M288.2 527.0h0M288.5 522.0h0M288.8 531.6h0M289.1 529.9h0M289.4 523.0h0M289.7 524.4h0M290.0 535.6h0M290.3 535.2h0M290.6 519.8h0M290.9 536.1h0M291.3 536.2h0M291.6 542.5h0M291.9 526.9h0M292.2 525.1h0M292.5 529.4h0M292.8 525.8h0M293.1 528.4h0M293.4 526.2h0M293.7 528.2h0M294.0 525.1h0M294.3 530.2h0M294.6 531.1h0M295.0 527.6h0M295.3 526.5h0M295.6 540.2h0M295.9 536.0h0M296.2 533.1h0M296.5 524.4h0M296.8 534.0h0M297.1 528.6h0M297.4 533.8h0M297.7 531.5h0M298.0 546.1h0M298.3 530.1h0M298.7 523.5h0M299.0 536.9h0M299.3 537.3h0M299.6 538.5h0M299.9 513.3h0M300.2 524.0h0M300.5 524.7h0M300.8 519.4h0M301.1 530.7h0M301.4 534.0h0M301.7 536.7h0M302.0 539.7h0M302.4 530.0h0M302.7 539.7h0M303.0 531.4h0M303.3 511.8h0M303.6 527.7h0M303.9 524.9h0M304.2 531.8h0M304.5 526.9h0M304.8 527.5h0M305.1 538.4h0M305.4 524.7h0M305.7 520.7h0M306.1 531.1h0M306.4 533.6h0M306.7 528.7h0M307.0 529.4h0M307.3 525.6h0M307.6 515.2h0M307.9 524.5h0M308.2 522.6h0M308.5 537.2h0M308.8 527.7h0M309.1 538.4h0M309.4 528.5h0M309.8 519.5h0M310.1 530.5h0M310.4 530.6h0M310.7 537.8h0M311.0 516.3h0M311.3 526.6h0M311.6 531.9h0M311.9 524.5h0M312.2 530.4h0M312.5 527.4h0M312.8 538.5h0M313.1 537.4h0M313.5 516.1h0M313.8 519.4h0M314.1 524.2h0M314.4 528.9h0M314.7 528.3h0M315.0 526.0h0M315.3 533.2h0M315.6 534.9h0M315.9 530.0h0M316.2 527.5h0M316.5 529.6h0M316.8 524.1h0M317.1 534.7h0M317.5 538.2h0M317.8 519.4h0M318.1 544.8h0M318.4 529.1h0M318.7 534.7h0M319.0 529.3h0M319.3 528.2h0M319.6 534.0h0M319.9 523.2h0M320.2 527.8h0M320.5 521.8h0M320.8 532.6h0M321.2 527.9h0M321.5 527.4h0M321.8 526.0h0M322.1 533.5h0M322.4 532.2h0M322.7 528.0h0M323.0 526.5h0M323.3 540.8h0M323.6 539.0h0M323.9 522.2h0M324.2 542.3h0M324.5 532.8h0M324.9 531.4h0M325.2 532.2h0M325.5 520.7h0M325.8 545.2h0M326.1 542.6h0M326.4 529.9h0M326.7 529.6h0M327.0 530.4h0M327.3 525.2h0M327.6 532.9h0M327.9 529.2h0M328.2 522.6h0M328.6 526.3h0M328.9 525.3h0M329.2 525.5h0M329.5 527.2h0M329.8 533.3h0M330.1 526.6h0M330.4 511.9h0M330.7 538.5h0M331.0 525.6h0M331.3 538.5h0M331.6 530.9h0M331.9 535.0h0M332.3 523.9h0M332.6 529.9h0M332.9 526.9h0M333.2 528.9h0M333.5 532.3h0M333.8 525.0h0M334.1 534.6h0M334.4 520.3h0M334.7 517.7h0M335.0 532.1h0M335.3 532.6h0M335.6 536.1h0M336.0 539.6h0M336.3 532.2h0M336.6 534.2h0M336.9 531.0h0M337.2 530.4h0M337.5 528.8h0M337.8 530.1h0M338.1 525.9h0M338.4 528.5h0M338.7 534.5h0M339.0 532.6h0M339.3 536.7h0M339.7 526.4h0M340.0 527.2h0M340.3 532.2h0M340.6 524.0h0M340.9 523.7h0M341.2 533.4h0M341.5 527.5h0M341.8 534.9h0M342.1 529.9h0M342.4 524.6h0M342.7 522.7h0M343.0 536.9h0M343.4 528.8h0M343.7 523.6h0M344.0 519.7h0M344.3 521.3h0M344.6 526.6h0M344.9 537.0h0M345.2 523.3h0M345.5 531.0h0M345.8 530.5h0M346.1 509.0h0M346.4 521.0h0M346.7 534.2h0M347.1 516.0h0M347.4 536.1h0M347.7 529.0h0M348.0 518.2h0M348.3 548.3h0M348.6 528.1h0M348.9 539.0h0M349.2 530.2h0M349.5 524.1h0M349.8 536.0h0M350.1 540.3h0M350.4 537.0h0M350.7 521.3h0M351.1 532.8h0M351.4 521.4h0M351.7 525.0h0M352.0 537.5h0M352.3 519.7h0M352.6 544.8h0M352.9 519.0h0M353.2 520.5h0M353.5 533.6h0M353.8 527.5h0M354.1 526.8h0M354.4 522.9h0M354.8 533.5h0M355.1 530.2h0M355.4 528.3h0M355.7 523.6h0M356.0 519.2h0M356.3 528.7h0M356.6 514.8h0M356.9 524.6h0M357.2 532.8h0M357.5 533.2h0M357.8 526.2h0M358.1 512.3h0M358.5 532.3h0M358.8 534.5h0M359.1 529.2h0M359.4 537.0h0M359.7 535.4h0M360.0 518.1h0M360.3 527.4h0M360.6 525.7h0M360.9 545.1h0M361.2 539.9h0M361.5 529.6h0M361.8 532.5h0M362.2 534.5h0M362.5 524.3h0M362.8 527.7h0M363.1 528.2h0M363.4 526.1h0M363.7 526.7h0M364.0 530.9h0M364.3 520.5h0M364.6 521.4h0M364.9 533.9h0M365.2 538.6h0M365.5 540.8h0M365.9 517.5h0M366.2 531.2h0M366.5 523.4h0M366.8 525.3h0M367.1 527.4h0M367.4 531.3h0M367.7 534.3h0M368.0 513.2h0M368.3 524.9h0M368.6 539.9h0M368.9 529.6h0M369.2 518.4h0M369.6 522.4h0M369.9 523.6h0M370.2 535.2h0M370.5 540.0h0M370.8 521.7h0M371.1 532.0h0M371.4 526.9h0M371.7 532.4h0M372.0 527.2h0M372.3 521.5h0M372.6 524.5h0M372.9 524.4h0M373.3 538.0h0M373.6 523.8h0M373.9 532.2h0M374.2 523.2h0M374.5 524.3h0M374.8 530.1h0M375.1 524.9h0M375.4 549.0h0M375.7 537.1h0M376.0 521.3h0M376.3 531.9h0M376.6 538.3h0M377.0 515.1h0M377.3 523.7h0M377.6 538.1h0M377.9 519.2h0M378.2 532.7h0M378.5 528.1h0M378.8 529.8h0M379.1 521.9h0M379.4 528.2h0M379.7 525.8h0M380.0 539.9h0M380.3 532.7h0M380.6 529.3h0M381.0 528.5h0M381.3 533.0h0M381.6 518.3h0M381.9 522.1h0M382.2 522.7h0M382.5 523.4h0M382.8 518.0h0M383.1 531.9h0M383.4 525.5h0M383.7 536.6h0M384.0 527.8h0M384.3 526.2h0M384.7 531.4h0M385.0 531.3h0M385.3 526.7h0M385.6 532.3h0M385.9 536.6h0M386.2 525.6h0M386.5 536.8h0M386.8 525.8h0M387.1 534.1h0M387.4 528.3h0M387.7 523.8h0M388.0 530.5h0M388.4 521.4h0M388.7 518.3h0M389.0 528.3h0M389.3 527.0h0M389.6 521.4h0M389.9 549.0h0M390.2 531.2h0M390.5 523.9h0M390.8 533.4h0M391.1 532.0h0M391.4 526.0h0M391.7 527.0h0M392.1 516.6h0M392.4 530.0h0M392.7 540.6h0M393.0 535.9h0M393.3 535.2h0M393.6 521.7h0M393.9 521.6h0M394.2 534.2h0M394.5 530.4h0M394.8 527.3h0M395.1 526.5h0M395.4 537.9h0M395.8 532.6h0M396.1 525.5h0M396.4 527.8h0M396.7 510.1h0M397.0 521.0h0M397.3 532.2h0M397.6 525.6h0M397.9 523.0h0M398.2 530.3h0M398.5 536.6h0M398.8 523.2h0M399.1 526.5h0M399.5 526.9h0M399.8 544.1h0M400.1 535.1h0M400.4 530.2h0M400.7 519.5h0M401.0 533.4h0M401.3 532.2h0M401.6 527.3h0M401.9 523.8h0M402.2 523.1h0M402.5 518.0h0M402.8 526.1h0M403.2 525.6h0M403.5 522.7h0M403.8 526.5h0M404.1 511.1h0M404.4 535.7h0M404.7 526.2h0M405.0 521.0h0M405.3 533.4h0M405.6 532.1h0M405.9 522.5h0M406.2 520.1h0M406.5 528.1h0M406.9 532.8h0M407.2 532.6h0M407.5 534.4h0M407.8 533.9h0M408.1 519.1h0M408.4 529.2h0M408.7 516.6h0M409.0 534.6h0M409.3 531.1h0M409.6 534.5h0M409.9 528.7h0M410.2 528.4h0M410.5 522.0h0M410.9 510.8h0M411.2 527.2h0M411.5 544.8h0M411.8 541.4h0M412.1 527.1h0M412.4 530.6h0M412.7 531.3h0M413.0 524.8h0M413.3 528.5h0M413.6 530.7h0M413.9 525.3h0M414.2 531.4h0M414.6 536.4h0M414.9 533.8h0M415.2 530.8h0M415.5 527.5h0M415.8 533.2h0M416.1 525.2h0M416.4 524.6h0M416.7 536.7h0M417.0 526.3h0M417.3 520.0h0M417.6 534.0h0M417.9 533.2h0M418.3 535.8h0M418.6 527.0h0M418.9 535.9h0M419.2 527.8h0M419.5 517.4h0M419.8 527.5h0M420.1 530.3h0M420.4 521.8h0M420.7 527.5h0M421.0 530.3h0M421.3 526.0h0M421.6 529.2h0M422.0 528.6h0M422.3 523.6h0M422.6 531.8h0M422.9 534.3h0M423.2 516.1h0M423.5 524.5h0M423.8 534.0h0M424.1 531.7h0M424.4 516.9h0M424.7 530.3h0M425.0 537.7h0M425.3 534.4h0M425.7 533.8h0M426.0 528.2h0M426.3 529.4h0M426.6 516.5h0M426.9 529.1h0M427.2 543.5h0M427.5 528.9h0M427.8 523.2h0M428.1 532.3h0M428.4 516.2h0M428.7 549.0h0M429.0 533.0h0M429.4 527.4h0M429.7 526.8h0M430.0 523.3h0M430.3 529.8h0M430.6 529.3h0M430.9 519.3h0M431.2 535.4h0M431.5 526.9h0M431.8 522.2h0M432.1 535.1h0M432.4 533.9h0M432.7 522.9h0M433.1 525.0h0M433.4 536.1h0M433.7 526.7h0M434.0 530.5h0M434.3 537.8h0M434.6 521.6h0M434.9 519.7h0M435.2 523.9h0M435.5 525.6h0M435.8 529.4h0M436.1 535.4h0M436.4 526.6h0M436.8 540.0h0M437.1 530.7h0M437.4 509.0h0M437.7 529.1h0M438.0 533.8h0M438.3 536.3h0M438.6 524.9h0M438.9 528.7h0M439.2 543.4h0M439.5 530.3h0M439.8 519.6h0M440.1 519.8h0M440.4 526.6h0M440.8 531.7h0M441.1 517.7h0M441.4 538.0h0M441.7 524.7h0M442.0 517.4h0M442.3 533.5h0M442.6 529.7h0M442.9 528.0h0M443.2 537.5h0M443.5 525.7h0M443.8 533.9h0M444.1 526.1h0M444.5 539.8h0M444.8 529.5h0M445.1 529.7h0M445.4 533.3h0M445.7 529.0h0M446.0 532.4h0M446.3 528.0h0M446.6 533.5h0M446.9 529.9h0M447.2 526.1h0M447.5 533.1h0M447.8 532.5h0M448.2 522.9h0M448.5 527.7h0M448.8 519.0h0M449.1 530.2h0M449.4 538.4h0M449.7 544.8h0M450.0 531.4h0M450.3 536.2h0M450.6 538.9h0M450.9 534.2h0M451.2 517.9h0M451.5 526.7h0M451.9 531.7h0M452.2 531.5h0M452.5 530.4h0M452.8 523.9h0M453.1 517.8h0M453.4 531.9h0M453.7 541.8h0M454.0 526.6h0M454.3 533.1h0M454.6 524.1h0M454.9 528.7h0M455.2 526.0h0M455.6 534.8h0M455.9 523.8h0M456.2 530.5h0M456.5 539.2h0M456.8 529.5h0M457.1 521.9h0M457.4 532.0h0M457.7 528.5h0M458.0 521.5h0M458.3 528.5h0M458.6 527.8h0M458.9 533.4h0M459.3 526.6h0M459.6 530.2h0M459.9 536.0h0M460.2 517.7h0M460.5 535.7h0M460.8 529.7h0M461.1 519.2h0M461.4 530.4h0M461.7 536.0h0M462.0 525.3h0M462.3 526.1h0M462.6 538.1h0M463.0 539.4h0M463.3 542.0h0M463.6 529.8h0M463.9 523.7h0M464.2 523.6h0M464.5 527.5h0M464.8 523.4h0M465.1 532.3h0M465.4 537.5h0M465.7 522.9h0M466.0 538.8h0M466.3 523.9h0M466.7 525.2h0M467.0 521.0h0M467.3 534.1h0M467.6 529.1h0M467.9 529.7h0M468.2 511.5h0M468.5 525.9h0M468.8 531.5h0M469.1 512.3h0M469.4 541.8h0M469.7 531.6h0M470.0 536.4h0M470.4 527.7h0M470.7 535.3h0M471.0 537.7h0M471.3 549.0h0M471.6 523.2h0M471.9 542.8h0M472.2 523.0h0M472.5 530.8h0M472.8 527.4h0M473.1 528.8h0M473.4 509.9h0M473.7 528.1h0M474.0 517.6h0M474.4 528.7h0M474.7 531.6h0M475.0 530.3h0M475.3 529.2h0M475.6 544.8h0M475.9 532.1h0M476.2 533.8h0M476.5 538.4h0M476.8 529.7h0M477.1 530.7h0M477.4 534.2h0M477.7 528.4h0M478.1 537.9h0M478.4 526.1h0M478.7 528.7h0M479.0 529.1h0M479.3 528.0h0M479.6 529.9h0M479.9 525.4h0M480.2 515.1h0M480.5 537.2h0M480.8 525.8h0M481.1 534.6h0M481.4 523.2h0M481.8 533.6h0M482.1 516.7h0M482.4 539.0h0M482.7 529.0h0M483.0 527.1h0M483.3 511.9h0M483.6 515.6h0M483.9 526.6h0M484.2 525.7h0M484.5 523.3h0M484.8 526.4h0M485.1 535.7h0M485.5 527.1h0M485.8 527.1h0M486.1 524.9h0M486.4 522.8h0M486.7 531.9h0M487.0 526.9h0M487.3 527.2h0M487.6 531.4h0M487.9 529.9h0M488.2 534.5h0M488.5 534.2h0M488.8 521.5h0M489.2 524.6h0M489.5 535.6h0M489.8 527.2h0M490.1 536.2h0M490.4 524.0h0M490.7 514.3h0M491.0 515.8h0M491.3 525.2h0M491.6 526.9h0M491.9 544.4h0M492.2 534.3h0M492.5 534.0h0M492.9 535.4h0M493.2 519.6h0M493.5 530.1h0M493.8 529.1h0M494.1 542.1h0M494.4 525.3h0M494.7 520.6h0M495.0 530.2h0M495.3 528.6h0M495.6 530.4h0M495.9 531.3h0M496.2 530.8h0M496.6 525.9h0M496.9 527.1h0M497.2 544.4h0M497.5 526.0h0M497.8 533.1h0M498.1 523.6h0M498.4 519.2h0M498.7 535.6h0M499.0 531.3h0M499.3 538.4h0M499.6 536.8h0M499.9 531.8h0M500.3 525.5h0M500.6 542.4h0M500.9 531.7h0M501.2 543.9h0M501.5 534.9h0M501.8 536.3h0M502.1 537.9h0M502.4 533.6h0M502.7 529.5h0M503.0 545.5h0M503.3 525.3h0M503.6 521.4h0M503.9 532.7h0M504.3 526.8h0M504.6 537.0h0M504.9 530.0h0M505.2 538.3h0M505.5 531.5h0M505.8 526.0h0M506.1 528.9h0M506.4 535.3h0M506.7 527.0h0M507.0 525.6h0M507.3 529.7h0M507.6 532.8h0M508.0 538.5h0M508.3 533.5h0M508.6 536.2h0M508.9 529.6h0M509.2 549.0h0M509.5 544.5h0M509.8 524.9h0M510.1 532.3h0M510.4 530.0h0M510.7 535.0h0M511.0 528.9h0M511.3 526.4h0M511.7 522.6h0M512.0 527.6h0M512.3 530.8h0M512.6 537.2h0M512.9 534.3h0M513.2 528.1h0M513.5 526.6h0M513.8 521.3h0M514.1 535.0h0M514.4 531.3h0M514.7 534.5h0M515.0 535.4h0M515.4 534.1h0M515.7 530.4h0M516.0 528.8h0M516.3 524.4h0M516.6 526.6h0M516.9 533.2h0M517.2 544.7h0M517.5 528.0h0M517.8 532.0h0M518.1 549.0h0M518.4 531.1h0M518.7 528.4h0M519.1 530.5h0M519.4 528.9h0M519.7 510.8h0M520.0 539.6h0M520.3 519.2h0M520.6 526.7h0M520.9 527.5h0M521.2 532.9h0M521.5 528.7h0M521.8 527.0h0M522.1 524.6h0M522.4 531.4h0M522.8 527.7h0M523.1 522.5h0M523.4 521.4h0M523.7 524.3h0M524.0 530.6h0M524.3 519.8h0M524.6 530.4h0M524.9 530.1h0M525.2 536.7h0M525.5 525.2h0M525.8 523.3h0M526.1 528.8h0M526.5 526.9h0M526.8 513.0h0M527.1 541.6h0M527.4 530.8h0M527.7 530.1h0M528.0 520.7h0M528.3 531.5h0M528.6 527.5h0M528.9 545.7h0M529.2 533.6h0M529.5 543.9h0M529.8 521.6h0M530.2 523.8h0M530.5 526.6h0M530.8 525.4h0M531.1 539.3h0M531.4 531.5h0M531.7 522.6h0M532.0 527.6h0M532.3 540.7h0M532.6 527.4h0M532.9 533.1h0M533.2 518.5h0M533.5 525.8h0M533.8 528.3h0M534.2 526.5h0M534.5 529.3h0M534.8 531.5h0M535.1 536.4h0M535.4 518.3h0M535.7 529.6h0M536.0 533.7h0M536.3 530.7h0M536.6 541.0h0M536.9 528.5h0M537.2 526.6h0M537.5 524.1h0M537.9 535.0h0M538.2 515.7h0M538.5 526.6h0M538.8 528.6h0M539.1 533.1h0M539.4 527.4h0M539.7 523.3h0M540.0 532.8h0M540.3 522.0h0M540.6 524.6h0M540.9 516.6h0M541.2 530.2h0M541.6 530.0h0M541.9 518.2h0M542.2 527.6h0M542.5 532.5h0M542.8 524.8h0M543.1 511.2h0M543.4 528.3h0M543.7 532.8h0M544.0 509.2h0M544.3 534.3h0M544.6 528.5h0M544.9 534.7h0M545.3 522.4h0M545.6 538.2h0M545.9 530.9h0M546.2 536.7h0M546.5 529.4h0M546.8 538.8h0M547.1 527.9h0M547.4 526.2h0M547.7 522.5h0M548.0 519.2h0M548.3 529.3h0M548.6 526.8h0M549.0 528.3h0M549.3 527.2h0M549.6 531.1h0M549.9 529.2h0M550.2 525.2h0M550.5 533.6h0M550.8 542.1h0M551.1 523.5h0M551.4 526.2h0M551.7 532.4h0M552.0 524.5h0M552.3 535.4h0M552.7 524.8h0M553.0 521.5h0M553.3 523.2h0M553.6 535.7h0M553.9 509.0h0M554.2 529.9h0M554.5 515.7h0M554.8 536.6h0M555.1 531.7h0M555.4 533.4h0M555.7 542.7h0M556.0 529.0h0M556.4 536.7h0M556.7 533.3h0M557.0 536.2h0M557.3 525.0h0M557.6 541.6h0M557.9 527.9h0M558.2 539.2h0M558.5 535.9h0M558.8 531.1h0M559.1 533.8h0M559.4 533.5h0M559.7 533.1h0M560.1 547.0h0M560.4 525.1h0M560.7 521.8h0M561.0 522.0h0M561.3 528.8h0M561.6 530.1h0M561.9 534.7h0M562.2 536.6h0M562.5 532.0h0M562.8 531.4h0M563.1 524.7h0M563.4 541.7h0M563.7 539.2h0M564.1 529.8h0M564.4 535.1h0M564.7 526.6h0M565.0 531.1h0M565.3 532.4h0M565.6 536.0h0M565.9 516.2h0M566.2 531.0h0M566.5 536.2h0M566.8 532.8h0M567.1 534.8h0M567.4 509.0h0M567.8 525.1h0M568.1 527.8h0M568.4 525.7h0M568.7 515.7h0M569.0 537.0h0M569.3 531.9h0M569.6 518.1h0M569.9 525.6h0M570.2 530.4h0M570.5 536.2h0M570.8 534.3h0M571.1 523.7h0M571.5 526.0h0M571.8 531.5h0M572.1 536.3h0M572.4 527.2h0M572.7 526.0h0M573.0 533.6h0M573.3 530.9h0M573.6 538.6h0M573.9 533.0h0M574.2 536.2h0M574.5 517.5h0M574.8 521.3h0M575.2 520.2h0M575.5 525.5h0M575.8 532.0h0M576.1 528.0h0M576.4 532.9h0M576.7 524.9h0M577.0 535.9h0M577.3 535.1h0M577.6 518.7h0M577.9 522.9h0M578.2 525.7h0M578.5 534.8h0M578.9 534.5h0M579.2 540.9h0M579.5 520.0h0M579.8 530.9h0M580.1 529.4h0M580.4 527.7h0M580.7 528.6h0M581.0 516.3h0M581.3 531.3h0M581.6 526.7h0M581.9 516.0h0M582.2 538.3h0M582.6 525.0h0M582.9 530.8h0M583.2 524.9h0M583.5 519.5h0M583.8 524.3h0M584.1 531.3h0M584.4 522.9h0M584.7 532.5h0M585.0 540.2h0M585.3 536.9h0M585.6 527.4h0M585.9 524.4h0M586.3 535.3h0M586.6 520.6h0M586.9 522.8h0M587.2 540.5h0M587.5 532.0h0M587.8 532.7h0M588.1 526.6h0M588.4 547.8h0M588.7 549.0h0M589.0 528.8h0M589.3 535.1h0M589.6 528.1h0M590.0 532.9h0M590.3 544.5h0M590.6 538.2h0M590.9 528.5h0M591.2 532.6h0M591.5 548.2h0M591.8 536.3h0M592.1 539.3h0M592.4 533.9h0M592.7 529.5h0M593.0 523.2h0M593.3 523.9h0M593.6 519.5h0M594.0 523.2h0M594.3 524.5h0M594.6 534.8h0M594.9 519.5h0M595.2 532.8h0M595.5 517.5h0M595.8 549.0h0M596.1 526.4h0M596.4 531.1h0M596.7 541.4h0M597.0 528.9h0M597.3 531.6h0M597.7 531.1h0M598.0 533.7h0M598.3 526.9h0M598.6 541.4h0M598.9 537.5h0M599.2 531.1h0M599.5 538.0h0M599.8 529.5h0M600.1 526.8h0M600.4 529.5h0M600.7 533.2h0M601.0 520.2h0M601.4 528.1h0M601.7 533.0h0M602.0 523.0h0M602.3 532.2h0M602.6 523.0h0M602.9 531.4h0M603.2 529.6h0M603.5 532.3h0M603.8 525.3h0M604.1 509.2h0M604.4 513.3h0M604.7 549.0h0M605.1 514.5h0M605.4 524.3h0M605.7 519.2h0M606.0 538.9h0M606.3 534.6h0M606.6 535.5h0M606.9 522.6h0M607.2 541.2h0M607.5 525.0h0M607.8 537.9h0M608.1 529.4h0M608.4 515.0h0M608.8 529.2h0M609.1 524.2h0M609.4 545.5h0M609.7 521.2h0M610.0 527.9h0M610.3 528.0h0M610.6 524.3h0M610.9 525.0h0M611.2 529.4h0M611.5 532.0h0M611.8 527.0h0M612.1 528.0h0M612.5 529.8h0M612.8 523.5h0M613.1 528.1h0M613.4 529.9h0M613.7 536.3h0M614.0 534.1h0M614.3 532.9h0M614.6 535.6h0M614.9 521.3h0M615.2 537.0h0M615.5 527.2h0M615.8 528.1h0M616.2 526.9h0M616.5 536.8h0M616.8 525.4h0M617.1 533.3h0M617.4 527.3h0M617.7 526.3h0M618.0 532.1h0M618.3 524.0h0M618.6 537.2h0M618.9 524.9h0M619.2 526.4h0M619.5 537.2h0M619.9 519.9h0M620.2 535.2h0M620.5 529.8h0M620.8 530.0h0M621.1 530.6h0M621.4 523.5h0M621.7 540.0h0M622.0 532.8h0M622.3 533.6h0M622.6 534.6h0M622.9 539.6h0M623.2 531.3h0M623.6 523.3h0M623.9 515.4h0M624.2 520.5h0M624.5 526.4h0M624.8 535.7h0M625.1 520.9h0M625.4 527.0h0M625.7 533.0h0M626.0 527.0h0M626.3 527.5h0M626.6 522.3h0M626.9 530.2h0M627.2 525.4h0M627.6 524.6h0M627.9 526.5h0M628.2 531.4h0M628.5 539.2h0M628.8 521.7h0M629.1 532.2h0M629.4 522.0h0M629.7 509.0h0M630.0 524.8h0M630.3 529.4h0M630.6 528.7h0M630.9 531.4h0M631.3 516.1h0M631.6 538.0h0M631.9 534.3h0M632.2 533.3h0M632.5 518.8h0M632.8 532.0h0M633.1 525.9h0M633.4 526.0h0M633.7 529.2h0M634.0 518.9h0M634.3 536.0h0M634.6 535.6h0M635.0 534.3h0M635.3 538.1h0M635.6 518.3h0M635.9 525.8h0M636.2 527.0h0M636.5 521.3h0M636.8 534.4h0M637.1 545.5h0M637.4 522.5h0M637.7 535.2h0M638.0 529.8h0M638.3 530.3h0M638.7 530.0h0M639.0 533.7h0M639.3 525.3h0M639.6 526.8h0M639.9 539.9h0M640.2 529.3h0M640.5 529.3h0M640.8 518.2h0M641.1 532.3h0M641.4 533.2h0M641.7 531.1h0M642.0 545.9h0M642.4 516.7h0M642.7 535.0h0M643.0 518.9h0M643.3 522.6h0M643.6 509.0h0M643.9 534.4h0M644.2 527.6h0M644.5 526.3h0M644.8 529.3h0M645.1 515.7h0M645.4 522.2h0M645.7 530.3h0M646.1 525.2h0M646.4 528.5h0M646.7 511.8h0M647.0 530.0h0M647.3 527.0h0M647.6 530.3h0M647.9 545.0h0M648.2 529.3h0M648.5 525.0h0M648.8 531.3h0M649.1 521.7h0M649.4 539.2h0M649.8 528.8h0M650.1 528.9h0M650.4 531.9h0M650.7 520.8h0M651.0 528.6h0M651.3 527.2h0M651.6 542.3h0M651.9 537.8h0M652.2 540.3h0M652.5 528.9h0M652.8 529.6h0M653.1 539.2h0M653.5 524.3h0M653.8 522.8h0M654.1 538.5h0M654.4 531.6h0M654.7 531.6h0M655.0 517.8h0M655.3 523.5h0M655.6 525.6h0M655.9 524.1h0M656.2 530.6h0M656.5 522.7h0M656.8 515.5h0M657.1 548.6h0M657.5 531.6h0M657.8 522.1h0M658.1 542.1h0M658.4 532.3h0M658.7 531.0h0M659.0 511.6h0M659.3 538.3h0M659.6 530.0h0M659.9 536.8h0M660.2 539.9h0M660.5 520.9h0M660.8 540.9h0M661.2 534.4h0M661.5 529.9h0M661.8 509.0h0M662.1 549.0h0M662.4 531.3h0M662.7 533.2h0M663.0 521.8h0M663.3 533.2h0M663.6 532.9h0M663.9 538.8h0M664.2 523.4h0M664.5 515.5h0M664.9 525.4h0M665.2 523.0h0M665.5 531.0h0M665.8 527.4h0M666.1 530.6h0M666.4 537.3h0M666.7 540.0h0M667.0 529.6h0M667.3 519.2h0M667.6 529.1h0M667.9 527.9h0M668.2 528.6h0M668.6 528.2h0M668.9 528.9h0M669.2 515.2h0M669.5 532.5h0M669.8 532.2h0M670.1 531.1h0M670.4 528.2h0M670.7 534.6h0M671.0 518.2h0M671.3 527.3h0M671.6 532.5h0M671.9 525.9h0M672.3 528.3h0M672.6 538.9h0M672.9 527.7h0M673.2 523.2h0M673.5 525.7h0M673.8 531.0h0M674.1 522.1h0M674.4 528.8h0M674.7 526.2h0M675.0 529.1h0M675.3 533.4h0M675.6 533.3h0M676.0 529.1h0M676.3 530.1h0M676.6 533.6h0M676.9 523.9h0M677.2 529.7h0M677.5 521.6h0M677.8 536.5h0M678.1 529.3h0M678.4 520.7h0M678.7 525.8h0M679.0 533.5h0M679.3 530.6h0M679.7 518.5h0M680.0 539.8h0M680.3 530.8h0M680.6 531.2h0M680.9 525.3h0M681.2 523.8h0M681.5 512.8h0M681.8 529.9h0M682.1 528.8h0M682.4 527.3h0M682.7 533.7h0M683.0 531.9h0M683.4 522.6h0M683.7 526.4h0M684.0 536.0h0M684.3 520.4h0M684.6 542.3h0M684.9 525.6h0M685.2 545.1h0M685.5 531.8h0M685.8 519.1h0M686.1 531.9h0M686.4 529.6h0M686.7 526.5h0M687.0 529.5h0M687.4 529.5h0M687.7 509.0h0M688.0 533.7h0M688.3 527.3h0M688.6 529.3h0M688.9 533.6h0M689.2 529.1h0M689.5 521.5h0M689.8 534.3h0M690.1 527.2h0M690.4 530.6h0M690.7 524.7h0M691.1 528.2h0M691.4 518.7h0M691.7 545.4h0M692.0 522.6h0M692.3 535.2h0M692.6 517.5h0M692.9 531.6h0M693.2 527.4h0M693.5 535.4h0M693.8 530.7h0M694.1 543.4h0M694.4 547.6h0M694.8 525.8h0M695.1 533.6h0M695.4 523.3h0M695.7 523.2h0M696.0 528.9h0M696.3 534.9h0M696.6 533.4h0M696.9 528.2h0M697.2 540.9h0M697.5 516.9h0M697.8 523.7h0M698.1 528.9h0M698.5 518.0h0M698.8 537.8h0M699.1 527.9h0M699.4 527.3h0M699.7 532.2h0M700.0 521.0h0M700.3 528.7h0M700.6 518.8h0M700.9 528.4h0M701.2 530.2h0M701.5 539.5h0M701.8 529.5h0M702.2 538.0h0M702.5 529.4h0M702.8 512.6h0M703.1 537.4h0M703.4 530.0h0M703.7 525.9h0M704.0 539.2h0M704.3 522.9h0M704.6 525.5h0M704.9 533.9h0M705.2 534.8h0M705.5 525.4h0M705.9 531.4h0M706.2 530.0h0M706.5 533.4h0M706.8 528.0h0M707.1 516.2h0M707.4 525.6h0M707.7 539.0h0M708.0 524.2h0M708.3 528.2h0M708.6 538.1h0M708.9 528.0h0M709.2 518.1h0M709.6 529.1h0M709.9 528.2h0M710.2 524.0h0M710.5 528.5h0M710.8 520.8h0M711.1 519.6h0M711.4 522.4h0M711.7 527.5h0M712.0 529.5h0M712.3 523.1h0M712.6 536.3h0M712.9 533.2h0M713.3 529.8h0M713.6 541.4h0M713.9 538.9h0M714.2 534.0h0M714.5 526.0h0M714.8 534.9h0M715.1 537.0h0M715.4 532.2h0M715.7 528.9h0M716.0 531.3h0M716.3 531.7h0M716.6 510.5h0M717.0 539.5h0M717.3 529.9h0M717.6 542.1h0M717.9 530.1h0M718.2 524.6h0M718.5 534.8h0M718.8 530.2h0M719.1 535.2h0M719.4 526.9h0M719.7 526.8h0M720.0 525.4h0M720.3 525.3h0M720.6 532.3h0M721.0 521.7h0M721.3 530.7h0M721.6 536.4h0M721.9 523.6h0M722.2 528.2h0M722.5 524.7h0M722.8 527.1h0M723.1 530.4h0M723.4 533.9h0M723.7 535.0h0M724.0 522.5h0M724.3 533.7h0M724.7 523.0h0M725.0 522.2h0M725.3 523.4h0M725.6 517.2h0M725.9 529.6h0M726.2 517.8h0M726.5 530.6h0M726.8 546.0h0M727.1 523.5h0M727.4 509.0h0M727.7 531.7h0M728.0 522.8h0M728.4 529.1h0M728.7 529.2h0M729.0 530.8h0M729.3 543.8h0M729.6 531.4h0M729.9 531.1h0M730.2 528.9h0M730.5 524.9h0M730.8 525.6h0M731.1 518.4h0M731.4 535.0h0M731.7 528.6h0M732.1 533.8h0M732.4 531.6h0M732.7 543.7h0M733.0 529.1h0M733.3 533.5h0M733.6 525.9h0M733.9 537.0h0M734.2 528.5h0M734.5 530.0h0M734.8 515.6h0M735.1 533.3h0M735.4 540.3h0M735.8 538.4h0M736.1 523.1h0M736.4 535.5h0M736.7 525.5h0M737.0 519.6h0M737.3 522.1h0M737.6 537.8h0M737.9 528.0h0M738.2 517.5h0M738.5 532.2h0M738.8 533.7h0M739.1 528.0h0M739.5 533.0h0M739.8 526.3h0M740.1 537.7h0M740.4 534.8h0M740.7 529.5h0M741.0 534.0h0M741.3 535.6h0M741.6 529.2h0M741.9 533.2h0M742.2 529.1h0M742.5 527.8h0M742.8 517.8h0M743.2 521.9h0M743.5 523.4h0M743.8 530.0h0M744.1 546.2h0M744.4 523.7h0M744.7 526.8h0M745.0 521.4h0M745.3 527.1h0M745.6 528.1h0M745.9 533.9h0M746.2 520.7h0M746.5 532.6h0M746.9 531.0h0M747.2 526.3h0M747.5 521.6h0M747.8 522.8h0M748.1 528.1h0M748.4 533.0h0M748.7 528.8h0M749.0 524.6h0M749.3 531.2h0M749.6 522.8h0M749.9 534.4h0M750.2 548.0h0M750.5 525.8h0M750.9 536.0h0M751.2 523.3h0M751.5 530.0h0M751.8 532.9h0M752.1 537.2h0M752.4 529.7h0M752.7 538.1h0M753.0 521.5h0M753.3 528.2h0M753.6 529.5h0M753.9 530.5h0M754.2 528.8h0M754.6 541.3h0M754.9 525.6h0M755.2 536.0h0M755.5 534.2h0M755.8 542.6h0M756.1 528.3h0M756.4 534.2h0M756.7 533.3h0M757.0 509.3h0M757.3 532.3h0M757.6 536.4h0M757.9 539.5h0M758.3 523.1h0M758.6 528.6h0M758.9 537.6h0M759.2 522.7h0M759.5 524.8h0M759.8 533.6h0M760.1 534.3h0M760.4 538.4h0M760.7 537.1h0M761.0 531.3h0M761.3 523.3h0M761.6 525.8h0M762.0 530.0h0M762.3 532.4h0M762.6 530.9h0M762.9 535.1h0M763.2 525.2h0M763.5 527.3h0M763.8 521.8h0M764.1 542.8h0M764.4 529.1h0M764.7 536.3h0M765.0 538.2h0M765.3 532.4h0M765.7 529.0h0M766.0 525.3h0M766.3 528.5h0M766.6 519.2h0M766.9 526.8h0M767.2 538.7h0M767.5 533.7h0M767.8 539.4h0M768.1 535.3h0M768.4 538.1h0M768.7 530.9h0M769.0 531.4h0M769.4 536.0h0M769.7 527.9h0M770.0 521.6h0M770.3 535.5h0M770.6 530.4h0M770.9 542.0h0M771.2 526.0h0M771.5 519.6h0M771.8 529.0h0M772.1 526.0h0M772.4 524.0h0M772.7 539.9h0M773.1 531.9h0M773.4 522.6h0M773.7 519.9h0M774.0 529.3h0M774.3 533.8h0M774.6 531.8h0M774.9 537.5h0M775.2 532.1h0M775.5 533.1h0M775.8 510.3h0M776.1 538.2h0M776.4 526.6h0M776.8 540.3h0M777.1 520.3h0M777.4 524.4h0M777.7 537.6h0M778.0 522.3h0M778.3 531.2h0M778.6 527.6h0M778.9 541.2h0M779.2 532.6h0M779.5 538.3h0M779.8 529.9h0M780.1 519.4h0M780.4 543.1h0M780.8 526.5h0M781.1 530.5h0M781.4 529.9h0M781.7 513.9h0M782.0 534.7h0M782.3 526.5h0M782.6 518.9h0M782.9 520.7h0M783.2 515.6h0M783.5 522.1h0M783.8 528.7h0M784.1 523.9h0M784.5 529.7h0M784.8 527.6h0M785.1 533.1h0M785.4 530.0h0M785.7 528.7h0M786.0 524.6h0M786.3 522.2h0M786.6 524.0h0M786.9 532.1h0M787.2 526.7h0M787.5 539.0h0M787.8 534.9h0M788.2 515.5h0M788.5 532.6h0M788.8 537.6h0M789.1 525.6h0M789.4 537.5h0M789.7 525.1h0M790.0 546.7h0M790.3 533.2h0M790.6 527.4h0M790.9 519.1h0M791.2 529.0h0M791.5 524.9h0M791.9 532.0h0M792.2 524.1h0M792.5 532.7h0M792.8 526.6h0M793.1 536.0h0M793.4 534.9h0M793.7 530.8h0M794.0 532.9h0M794.3 536.7h0M794.6 523.7h0M794.9 533.6h0M795.2 531.3h0M795.6 540.0h0M795.9 528.6h0M796.2 536.0h0M796.5 518.9h0M796.8 543.2h0M797.1 532.4h0M797.4 532.2h0M797.7 535.5h0M798.0 521.7h0M798.3 528.3h0M798.6 530.3h0M798.9 527.8h0M799.3 524.4h0M799.6 535.9h0M799.9 530.0h0M800.2 528.2h0M800.5 530.0h0M800.8 538.1h0M801.1 541.6h0M801.4 536.7h0M801.7 532.9h0M802.0 515.7h0M802.3 526.1h0M802.6 523.8h0M803.0 523.7h0M803.3 537.3h0M803.6 525.9h0M803.9 538.5h0M804.2 530.4h0M804.5 528.9h0M804.8 528.4h0M805.1 520.7h0M805.4 527.1h0M805.7 538.9h0M806.0 537.2h0M806.3 530.7h0M806.7 534.1h0M807.0 531.6h0M807.3 532.3h0M807.6 545.0h0M807.9 530.6h0M808.2 518.7h0M808.5 516.3h0M808.8 525.1h0M809.1 531.1h0M809.4 536.0h0M809.7 529.6h0M810.0 530.6h0M810.3 533.6h0M810.7 523.6h0M811.0 529.5h0M811.3 531.9h0M811.6 525.8h0M811.9 524.5h0M812.2 533.1h0M812.5 541.6h0M812.8 530.2h0M813.1 514.9h0M813.4 524.7h0M813.7 527.0h0M814.0 532.5h0M814.4 524.8h0M814.7 526.9h0M815.0 535.9h0M815.3 537.6h0M815.6 530.1h0M815.9 522.6h0M816.2 521.8h0M816.5 533.6h0M816.8 524.6h0M817.1 529.4h0M817.4 528.3h0M817.7 530.4h0M818.1 531.6h0M818.4 522.9h0M818.7 525.4h0M819.0 530.6h0M819.3 529.7h0M819.6 520.9h0M819.9 541.6h0M820.2 520.6h0M820.5 540.4h0M820.8 519.1h0M821.1 535.5h0M821.4 510.6h0M821.8 535.2h0M822.1 530.5h0M822.4 537.7h0M822.7 524.6h0M823.0 531.0h0M823.3 531.8h0M823.6 530.4h0M823.9 525.8h0M824.2 537.9h0M824.5 517.9h0M824.8 519.6h0M825.1 520.0h0M825.5 538.3h0M825.8 523.7h0M826.1 524.7h0M826.4 524.7h0M826.7 527.3h0M827.0 526.4h0M827.3 526.2h0M827.6 519.7h0M827.9 532.0h0M828.2 529.3h0M828.5 538.9h0M828.8 533.6h0M829.2 528.8h0M829.5 520.2h0M829.8 529.9h0M830.1 533.1h0M830.4 539.9h0M830.7 531.9h0M831.0 534.4h0M831.3 533.2h0M831.6 539.7h0M831.9 536.7h0M832.2 529.7h0M832.5 520.2h0M832.9 546.6h0M833.2 530.3h0M833.5 524.3h0M833.8 520.3h0M834.1 518.2h0M834.4 531.1h0M834.7 528.3h0M835.0 531.4h0M835.3 537.1h0M835.6 525.5h0M835.9 531.3h0M836.2 526.0h0M836.6 523.9h0M836.9 515.2h0M837.2 524.4h0M837.5 536.3h0M837.8 526.1h0M838.1 531.3h0M838.4 530.2h0M838.7 542.3h0M839.0 538.8h0M839.3 525.3h0M839.6 526.7h0M839.9 536.7h0M840.3 531.0h0M840.6 530.2h0M840.9 537.0h0M841.2 533.2h0M841.5 530.6h0M841.8 548.9h0M842.1 532.2h0M842.4 515.5h0M842.7 531.8h0M843.0 531.4h0M843.3 540.4h0M843.6 533.3h0M843.9 525.7h0M844.3 532.0h0M844.6 521.9h0M844.9 527.3h0M845.2 531.9h0M845.5 520.6h0M845.8 516.8h0M846.1 522.9h0M846.4 524.4h0M846.7 533.1h0M847.0 526.5h0M847.3 529.0h0M847.6 523.4h0M848.0 529.8h0M848.3 525.4h0M848.6 535.2h0M848.9 530.8h0M849.2 538.5h0M849.5 533.0h0M849.8 527.2h0M850.1 523.7h0M850.4 530.6h0M850.7 533.9h0M851.0 539.1h0M851.3 525.7h0M851.7 520.8h0M852.0 509.6h0M852.3 522.8h0M852.6 527.9h0M852.9 527.3h0M853.2 525.4h0M853.5 528.7h0M853.8 531.1h0M854.1 518.3h0M854.4 529.2h0M854.7 527.9h0M855.0 527.8h0M855.4 526.1h0M855.7 517.0h0M856.0 531.8h0M856.3 523.3h0M856.6 527.1h0M856.9 530.8h0M857.2 529.1h0M857.5 531.4h0M857.8 532.9h0M858.1 523.0h0M858.4 521.6h0M858.7 534.0h0M859.1 523.9h0M859.4 542.5h0M859.7 521.8h0M860.0 529.8h0M860.3 528.4h0M860.6 530.5h0M860.9 522.9h0M861.2 530.8h0M861.5 541.4h0M861.8 525.3h0M862.1 509.0h0M862.4 532.8h0M862.8 531.4h0M863.1 533.0h0M863.4 523.6h0M863.7 531.3h0M864.0 534.3h0M864.3 525.7h0M864.6 529.0h0M864.9 532.0h0M865.2 536.1h0M865.5 525.8h0M865.8 530.0h0M866.1 541.3h0M866.5 541.5h0M866.8 522.1h0M867.1 542.5h0M867.4 526.4h0M867.7 535.4h0M868.0 520.9h0M868.3 527.5h0M868.6 524.6h0M868.9 536.7h0M869.2 530.0h0M869.5 531.4h0M869.8 531.2h0M870.2 529.9h0M870.5 534.4h0M870.8 529.4h0M871.1 528.1h0M871.4 524.6h0M871.7 522.9h0M872.0 522.4h0M872.3 530.9h0M872.6 538.7h0M872.9 527.8h0M873.2 541.1h0M873.5 536.4h0M873.8 528.8h0M874.2 531.7h0M874.5 528.5h0M874.8 517.1h0M875.1 533.7h0M875.4 530.0h0M875.7 518.0h0M876.0 534.1h0M876.3 525.0h0M876.6 527.1h0M876.9 517.8h0M877.2 528.3h0M877.5 531.2h0M877.9 523.5h0M878.2 528.5h0M878.5 516.6h0M878.8 531.8h0M879.1 528.2h0M879.4 528.2h0M879.7 532.7h0M880.0 535.0h0M880.3 528.0h0M880.6 534.2h0M880.9 540.0h0M881.2 521.6h0M881.6 529.0h0M881.9 518.2h0M882.2 530.6h0M882.5 537.1h0M882.8 527.5h0M883.1 521.2h0M883.4 525.0h0M883.7 531.0h0M884.0 511.9h0M884.3 519.5h0M884.6 531.3h0M884.9 513.3h0M885.3 528.4h0M885.6 521.7h0M885.9 510.8h0M886.2 533.5h0M886.5 535.5h0M886.8 523.5h0M887.1 543.0h0M887.4 529.5h0M887.7 531.8h0M888.0 529.8h0M888.3 521.7h0M888.6 538.8h0M889.0 529.5h0M889.3 531.8h0M889.6 529.6h0M889.9 526.2h0M890.2 543.6h0M890.5 531.5h0M890.8 527.3h0M891.1 533.0h0M891.4 521.1h0M891.7 531.1h0M892.0 545.9h0M892.3 524.5h0M892.7 531.9h0M893.0 521.3h0M893.3 529.0h0M893.6 535.8h0M893.9 517.6h0M894.2 518.4h0M894.5 536.1h0M894.8 531.1h0M895.1 533.0h0M895.4 532.1h0M895.7 514.7h0M896.0 517.9h0M896.4 516.8h0M896.7 531.9h0M897.0 519.7h0M897.3 517.5h0M897.6 525.2h0M897.9 527.8h0M898.2 530.4h0M898.5 509.0h0M898.8 537.1h0M899.1 522.7h0M899.4 529.6h0M899.7 528.4h0M900.1 522.4h0M900.4 531.2h0M900.7 530.9h0M901.0 535.9h0M901.3 540.9h0M901.6 549.0h0M901.9 534.8h0M902.2 535.6h0M902.5 526.5h0M902.8 519.2h0M903.1 531.5h0M903.4 525.1h0M903.7 527.1h0M904.1 525.8h0M904.4 531.5h0M904.7 526.3h0M905.0 544.1h0M905.3 537.7h0M905.6 525.6h0M905.9 531.3h0M906.2 537.9h0M906.5 515.8h0M906.8 530.3h0M907.1 525.6h0M907.4 529.3h0M907.8 525.8h0M908.1 530.1h0M908.4 531.9h0M908.7 533.0h0M909.0 512.8h0M909.3 536.2h0M909.6 529.2h0M909.9 524.9h0M910.2 528.6h0M910.5 539.3h0M910.8 528.0h0M911.1 523.5h0M911.5 536.3h0M911.8 527.8h0M912.1 533.6h0M912.4 530.8h0M912.7 537.9h0M913.0 525.3h0M913.3 526.7h0M913.6 540.6h0M913.9 540.1h0M914.2 530.6h0M914.5 537.0h0M914.8 534.1h0M915.2 529.3h0M915.5 518.6h0M915.8 542.7h0M916.1 536.7h0M916.4 514.7h0M916.7 537.5h0M917.0 525.4h0M917.3 522.7h0M917.6 525.6h0M917.9 533.9h0M918.2 528.8h0M918.5 527.8h0M918.9 528.1h0M919.2 526.7h0M919.5 532.6h0M919.8 516.1h0M920.1 520.6h0M920.4 528.1h0M920.7 521.6h0M921.0 530.2h0M921.3 526.7h0M921.6 533.1h0M921.9 528.1h0M922.2 533.0h0M922.6 529.2h0M922.9 533.9h0M923.2 525.3h0M923.5 518.0h0M923.8 529.4h0M924.1 529.5h0M924.4 526.2h0M924.7 535.8h0M925.0 535.0h0M925.3 539.4h0M925.6 525.5h0M925.9 527.0h0M926.3 532.8h0M926.6 539.1h0M926.9 525.2h0M927.2 532.8h0M927.5 529.4h0M927.8 527.7h0M928.1 535.5h0M928.4 535.3h0M928.7 534.3h0M929.0 525.6h0M929.3 529.7h0M929.6 519.1h0M930.0 533.2h0M930.3 521.5h0M930.6 528.1h0M930.9 539.0h0M931.2 528.3h0M931.5 530.8h0M931.8 525.6h0M932.1 546.5h0M932.4 522.1h0M932.7 526.2h0M933.0 529.0h0M933.3 546.7h0M933.6 526.4h0M934.0 530.4h0M934.3 535.2h0M934.6 516.6h0M934.9 535.9h0M935.2 534.5h0M935.5 539.9h0M935.8 540.1h0M936.1 533.6h0M936.4 537.5h0M936.7 526.3h0M937.0 523.2h0M937.3 529.0h0M937.7 531.8h0M938.0 528.6h0M938.3 533.3h0M938.6 534.6h0M938.9 541.7h0M939.2 529.6h0M939.5 527.7h0M939.8 533.7h0M940.1 532.1h0M940.4 534.4h0M940.7 549.0h0M941.0 522.9h0M941.4 535.5h0M941.7 539.4h0M942.0 539.0h0M942.3 521.4h0M942.6 528.8h0M942.9 539.0h0M943.2 530.8h0M943.5 536.4h0M943.8 530.1h0M944.1 539.0h0M944.4 532.3h0M944.7 528.9h0M945.1 531.4h0M945.4 539.6h0M945.7 533.3h0M946.0 520.3h0M946.3 517.4h0M946.6 534.9h0M946.9 519.8h0M947.2 531.3h0M947.5 525.8h0M947.8 531.6h0M948.1 525.5h0M948.4 515.0h0M948.8 538.9h0M949.1 529.7h0M949.4 528.8h0M949.7 539.8h0M950.0 534.2h0M950.3 536.8h0M950.6 528.5h0M950.9 530.6h0M951.2 532.6h0M951.5 525.9h0M951.8 538.6h0M952.1 532.5h0M952.5 527.8h0M952.8 527.2h0M953.1 535.2h0M953.4 528.1h0M953.7 532.3h0M954.0 531.5h0M954.3 528.5h0M954.6 509.4h0M954.9 531.9h0M955.2 534.8h0M955.5 525.7h0M955.8 525.5h0M956.2 535.3h0M956.5 522.1h0M956.8 542.9h0M957.1 533.3h0M957.4 538.5h0M957.7 529.5h0M958.0 530.5h0M958.3 531.6h0M958.6 520.1h0M958.9 524.3h0M959.2 536.8h0M959.5 525.5h0M959.9 523.8h0M960.2 531.9h0M960.5 538.5h0M960.8 529.5h0M961.1 528.1h0M961.4 529.7h0M961.7 532.5h0M962.0 519.9h0M962.3 532.1h0M962.6 532.4h0M962.9 536.5h0M963.2 536.7h0M963.6 534.0h0M963.9 542.6h0M964.2 530.0h0M964.5 529.3h0M964.8 540.2h0M965.1 531.6h0M965.4 526.3h0M965.7 526.6h0M966.0 529.9h0M966.3 521.5h0M966.6 536.2h0M966.9 531.9h0M967.2 538.0h0M967.6 523.6h0M967.9 527.8h0M968.2 525.9h0M968.5 533.3h0M968.8 532.4h0M969.1 538.2h0M969.4 534.4h0M969.7 523.2h0M970.0 531.8h0M970.3 530.5h0M970.6 529.9h0M970.9 533.2h0M971.3 518.1h0M971.6 525.6h0M971.9 528.2h0M972.2 524.6h0M972.5 522.6h0M972.8 535.7h0M973.1 535.3h0M973.4 540.5h0M973.7 523.9h0M974.0 509.0h0M974.3 533.8h0M974.6 527.5h0M975.0 522.8h0M975.3 532.8h0M975.6 528.9h0M975.9 518.6h0M976.2 529.9h0M976.5 519.1h0M976.8 532.7h0M977.1 521.5h0M977.4 519.7h0M977.7 533.7h0M978.0 535.1h0M978.3 527.6h0M978.7 522.0h0M979.0 532.9h0M979.3 530.0h0M979.6 530.6h0M979.9 526.7h0M980.2 519.8h0M980.5 526.2h0M980.8 538.1h0M981.1 525.0h0M981.4 528.4h0M981.7 528.8h0M982.0 538.7h0M982.4 530.9h0M982.7 526.5h0M983.0 540.9h0M983.3 530.2h0M983.6 531.1h0M983.9 525.0h0M984.2 519.7h0M984.5 532.0h0M984.8 527.0h0M985.1 531.1h0M985.4 515.3h0M985.7 539.7h0M986.1 529.4h0M986.4 534.2h0M986.7 522.5h0M987.0 529.8h0M987.3 530.2h0M987.6 536.1h0M987.9 534.1h0M988.2 516.5h0M988.5 530.6h0M988.8 530.0h0M989.1 527.2h0M989.4 531.3h0M989.8 535.1h0M990.1 535.2h0M990.4 522.1h0M990.7 524.0h0M991.0 529.5h0M991.3 533.4h0M991.6 523.3h0M991.9 529.3h0M992.2 521.4h0M992.5 529.5h0M992.8 528.2h0M993.1 532.4h0M993.5 537.9h0M993.8 524.4h0M994.1 531.9h0M994.4 519.5h0M994.7 531.2h0M995.0 540.3h0M995.3 519.7h0M995.6 526.1h0M995.9 509.5h0M996.2 532.0h0M996.5 542.9h0M996.8 523.5h0M997.1 531.4h0M997.5 538.0h0M997.8 521.3h0M998.1 530.7h0M998.4 524.6h0M998.7 526.4h0M999.0 529.6h0M999.3 534.9h0M999.6 531.8h0M999.9 529.2h0M1000.2 527.6h0M1000.5 536.2h0M1000.8 532.6h0M1001.2 532.1h0M1001.5 517.9h0M1001.8 528.2h0M1002.1 518.3h0M1002.4 540.4h0M1002.7 533.7h0M1003.0 538.6h0M1003.3 524.3h0M1003.6 519.9h0M1003.9 524.5h0M1004.2 533.6h0M1004.5 525.3h0M1004.9 534.1h0M1005.2 538.1h0M1005.5 527.5h0M1005.8 535.8h0M1006.1 515.8h0M1006.4 521.8h0M1006.7 525.8h0M1007.0 527.5h0M1007.3 520.7h0M1007.6 527.3h0M1007.9 536.2h0M1008.2 534.9h0M1008.6 532.3h0M1008.9 523.9h0M1009.2 538.6h0M1009.5 533.8h0M1009.8 523.3h0M1010.1 535.9h0M1010.4 527.5h0M1010.7 533.1h0M1011.0 532.1h0M1011.3 533.4h0M1011.6 539.2h0M1011.9 545.6h0M1012.3 532.3h0M1012.6 530.6h0M1012.9 529.6h0M1013.2 532.8h0M1013.5 536.5h0M1013.8 521.8h0M1014.1 531.4h0M1014.4 544.5h0M1014.7 534.9h0M1015.0 541.8h0M1015.3 529.8h0M1015.6 543.7h0M1016.0 533.8h0M1016.3 527.2h0M1016.6 525.4h0M1016.9 533.1h0M1017.2 541.3h0M1017.5 523.6h0M1017.8 520.2h0M1018.1 515.5h0M1018.4 534.5h0M1018.7 523.3h0M1019.0 522.6h0M1019.3 523.3h0M1019.7 524.4h0M1020.0 534.8h0M1020.3 525.1h0M1020.6 530.9h0M1020.9 525.3h0M1021.2 527.5h0M1021.5 534.0h0M1021.8 533.9h0M1022.1 522.5h0M1022.4 529.9h0M1022.7 523.8h0M1023.0 534.2h0M1023.4 523.4h0M1023.7 523.9h0M1024.0 534.9h0M1024.3 526.1h0M1024.6 530.5h0M1024.9 534.2h0M1025.2 526.3h0M1025.5 527.7h0M1025.8 533.4h0M1026.1 543.9h0M1026.4 536.0h0M1026.7 534.3h0M1027.0 529.8h0M1027.4 529.3h0M1027.7 539.1h0M1028.0 525.0h0M1028.3 525.2h0M1028.6 539.0h0M1028.9 524.7h0M1029.2 521.8h0M1029.5 532.7h0M1029.8 536.0h0M1030.1 540.8h0M1030.4 543.6h0M1030.7 515.4h0M1031.1 528.4h0M1031.4 527.7h0M1031.7 532.0h0M1032.0 524.3h0M1032.3 530.2h0M1032.6 532.8h0M1032.9 530.9h0M1033.2 524.3h0M1033.5 531.2h0M1033.8 524.2h0M1034.1 520.9h0M1034.4 528.1h0M1034.8 534.7h0M1035.1 517.0h0M1035.4 529.3h0M1035.7 538.4h0M1036.0 530.7h0M1036.3 526.3h0M1036.6 531.3h0M1036.9 539.7h0M1037.2 528.6h0M1037.5 525.2h0M1037.8 534.5h0M1038.1 528.0h0M1038.5 525.2h0M1038.8 534.9h0M1039.1 520.8h0M1039.4 527.7h0M1039.7 538.1h0M1040.0 530.6h0M1040.3 537.7h0M1040.6 518.3h0M1040.9 520.0h0M1041.2 524.6h0M1041.5 528.7h0M1041.8 517.4h0M1042.2 530.9h0M1042.5 526.1h0M1042.8 526.2h0M1043.1 529.7h0M1043.4 527.9h0M1043.7 521.8h0M1044.0 528.0h0M1044.3 521.9h0M1044.6 537.8h0M1044.9 526.5h0M1045.2 526.6h0M1045.5 525.3h0M1045.9 529.6h0M1046.2 530.9h0M1046.5 528.6h0M1046.8 522.8h0M1047.1 536.5h0M1047.4 529.2h0M1047.7 517.5h0M1048.0 509.0h0M1048.3 522.3h0M1048.6 522.0h0M1048.9 518.8h0M1049.2 523.2h0M1049.6 531.4h0M1049.9 542.5h0M1050.2 530.8h0M1050.5 531.5h0M1050.8 541.4h0M1051.1 543.2h0M1051.4 536.7h0M1051.7 533.2h0M1052.0 528.5h0M1052.3 523.0h0M1052.6 532.1h0M1052.9 537.0h0M1053.3 531.4h0M1053.6 525.9h0M1053.9 533.1h0M1054.2 528.8h0M1054.5 525.6h0M1054.8 516.8h0M1055.1 532.8h0M1055.4 525.2h0M1055.7 536.7h0M1056.0 522.6h0M1056.3 529.9h0M1056.6 525.8h0M1056.9 540.6h0M1057.3 538.0h0M1057.6 529.3h0M1057.9 538.5h0M1058.2 521.5h0M1058.5 533.6h0M1058.8 523.5h0M1059.1 528.6h0M1059.4 524.5h0M1059.7 533.2h0M1060.0 518.1h0M1060.3 526.5h0M1060.6 538.2h0M1061.0 515.0h0M1061.3 528.1h0M1061.6 520.9h0M1061.9 512.5h0M1062.2 532.0h0M1062.5 526.4h0M1062.8 537.6h0M1063.1 517.6h0M1063.4 531.9h0M1063.7 539.6h0M1064.0 517.7h0M1064.3 533.6h0M1064.7 534.0h0M1065.0 530.9h0M1065.3 538.5h0M1065.6 533.9h0M1065.9 525.0h0M1066.2 524.7h0M1066.5 528.7h0M1066.8 540.1h0M1067.1 528.8h0M1067.4 535.3h0M1067.7 528.7h0M1068.0 533.7h0M1068.4 533.1h0M1068.7 537.5h0M1069.0 541.4h0M1069.3 526.5h0M1069.6 522.4h0M1069.9 529.2h0M1070.2 529.5h0M1070.5 531.5h0M1070.8 536.2h0M1071.1 527.1h0M1071.4 529.8h0M1071.7 529.9h0M1072.1 541.8h0M1072.4 525.5h0M1072.7 537.5h0M1073.0 542.3h0M1073.3 528.5h0M1073.6 539.0h0M1073.9 533.4h0M1074.2 529.5h0M1074.5 549.0h0M1074.8 538.0h0M1075.1 528.1h0M1075.4 536.4h0M1075.8 525.8h0M1076.1 521.2h0M1076.4 536.9h0M1076.7 530.2h0M1077.0 540.7h0M1077.3 531.2h0M1077.6 531.9h0M1077.9 529.5h0M1078.2 531.3h0M1078.5 525.1h0M1078.8 528.7h0M1079.1 519.0h0M1079.5 518.5h0M1079.8 521.4h0M1080.1 523.9h0M1080.4 529.5h0M1080.7 528.9h0M1081.0 537.6h0M1081.3 545.9h0M1081.6 509.0h0M1081.9 539.3h0M1082.2 536.0h0M1082.5 526.3h0M1082.8 531.0h0M1083.2 517.5h0M1083.5 528.5h0M1083.8 540.1h0M1084.1 522.3h0M1084.4 526.1h0M1084.7 531.3h0M1085.0 534.2h0M1085.3 530.2h0M1085.6 526.5h0M1085.9 534.1h0M1086.2 526.2h0M1086.5 545.2h0M1086.9 537.9h0M1087.2 530.6h0M1087.5 524.7h0M1087.8 526.2h0M1088.1 522.3h0M1088.4 527.7h0M1088.7 532.6h0M1089.0 521.6h0M1089.3 531.8h0M1089.6 530.1h0M1089.9 523.7h0M1090.2 543.7h0M1090.5 532.9h0M1090.9 531.8h0M1091.2 526.1h0M1091.5 525.1h0M1091.8 530.0h0M1092.1 520.4h0M1092.4 532.0h0M1092.7 522.5h0M1093.0 529.6h0M1093.3 533.9h0M1093.6 527.0h0M1093.9 525.5h0M1094.2 524.9h0M1094.6 530.5h0M1094.9 522.5h0M1095.2 529.3h0M1095.5 535.8h0M1095.8 509.6h0M1096.1 524.5h0M1096.4 531.3h0M1096.7 522.4h0M1097.0 522.9h0M1097.3 521.7h0M1097.6 534.9h0M1097.9 515.8h0M1098.3 528.6h0M1098.6 528.1h0M1098.9 529.4h0M1099.2 524.3h0M1099.5 529.8h0M1099.8 523.6h0M1100.1 523.8h0M1100.4 545.6h0M1100.7 539.7h0M1101.0 517.5h0M1101.3 524.7h0M1101.6 532.0h0M1102.0 538.3h0M1102.3 528.0h0M1102.6 533.7h0M1102.9 530.5h0M1103.2 536.7h0M1103.5 525.8h0M1103.8 524.3h0M1104.1 531.0h0M1104.4 532.0h0M1104.7 529.5h0M1105.0 537.0h0M1105.3 533.7h0M1105.7 530.0h0M1106.0 521.9h0M1106.3 533.6h0M1106.6 534.7h0M1106.9 525.2h0M1107.2 528.8h0M1107.5 517.5h0M1107.8 530.1h0M1108.1 527.9h0M1108.4 518.1h0M1108.7 529.4h0M1109.0 527.3h0M1109.4 527.2h0M1109.7 535.9h0M1110.0 532.4h0M1110.3 534.9h0M1110.6 525.9h0M1110.9 537.9h0M1111.2 524.5h0M1111.5 534.1h0M1111.8 520.0h0M1112.1 530.8h0M1112.4 523.0h0M1112.7 520.2h0M1113.1 533.7h0M1113.4 530.6h0M1113.7 532.6h0M1114.0 529.7h0M1114.3 532.2h0M1114.6 529.2h0M1114.9 528.4h0M1115.2 530.2h0M1115.5 544.0h0M1115.8 523.1h0M1116.1 520.0h0M1116.4 523.7h0M1116.8 522.5h0M1117.1 532.9h0M1117.4 536.5h0M1117.7 541.7h0M1118.0 528.3h0M1118.3 534.2h0M1118.6 541.4h0M1118.9 533.8h0M1119.2 538.0h0M1119.5 523.7h0M1119.8 535.4h0M1120.1 538.5h0M1120.4 522.1h0M1120.8 530.1h0M1121.1 533.8h0M1121.4 524.2h0M1121.7 535.5h0M1122.0 536.0h0M1122.3 531.7h0M1122.6 529.1h0M1122.9 528.6h0M1123.2 534.0h0M1123.5 536.9h0M1123.8 521.2h0M1124.1 531.0h0M1124.5 532.6h0M1124.8 524.2h0M1125.1 521.6h0M1125.4 528.3h0M1125.7 519.0h0M1126.0 531.1h0M1126.3 527.9h0M1126.6 522.6h0M1126.9 529.7h0M1127.2 524.2h0M1127.5 522.0h0M1127.8 537.0h0M1128.2 524.6h0M1128.5 513.3h0M1128.8 531.4h0M1129.1 522.9h0M1129.4 523.8h0M1129.7 545.8h0M1130.0 529.0h0M1130.3 534.6h0M1130.6 514.7h0M1130.9 522.8h0M1131.2 524.1h0M1131.5 537.0h0M1131.9 525.1h0M1132.2 517.1h0M1132.5 534.1h0M1132.8 526.0h0M1133.1 529.9h0M1133.4 537.2h0M1133.7 543.1h0M1134.0 529.1h0M1134.3 539.4h0M1134.6 520.6h0M1134.9 530.4h0M1135.2 531.2h0M1135.6 515.2h0M1135.9 523.0h0M1136.2 524.7h0M1136.5 532.5h0M1136.8 526.2h0M1137.1 526.6h0M1137.4 525.0h0M1137.7 532.2h0M1138.0 528.9h0M1138.3 528.8h0M1138.6 527.8h0M1138.9 533.7h0M1139.3 524.9h0M1139.6 529.1h0M1139.9 529.5h0M1140.2 531.8h0M1140.5 540.1h0M1140.8 531.7h0M1141.1 521.1h0M1141.4 535.9h0M1141.7 537.3h0M1142.0 543.2h0M1142.3 535.2h0M1142.6 519.9h0M1143.0 529.0h0M1143.3 534.8h0M1143.6 535.0h0M1143.9 529.3h0M1144.2 530.7h0M1144.5 518.6h0M1144.8 532.4h0M1145.1 516.8h0M1145.4 528.6h0M1145.7 536.0h0M1146.0 522.4h0M1146.3 538.0h0M1146.7 542.4h0M1147.0 533.3h0M1147.3 526.7h0M1147.6 527.0h0M1147.9 522.4h0M1148.2 534.7h0M1148.5 518.7h0M1148.8 531.2h0M1149.1 523.1h0M1149.4 533.5h0M1149.7 521.3h0M1150.0 529.3h0M1150.3 525.5h0M1150.7 536.5h0M1151.0 527.5h0M1151.3 529.0h0M1151.6 537.2h0M1151.9 523.0h0M1152.2 522.2h0M1152.5 529.6h0M1152.8 523.5h0M1153.1 540.5h0M1153.4 530.8h0M1153.7 531.5h0M1154.0 527.8h0M1154.4 510.0h0M1154.7 537.9h0M1155.0 529.1h0M1155.3 517.0h0M1155.6 523.0h0M1155.9 529.7h0M1156.2 537.6h0M1156.5 532.0h0M1156.8 533.9h0M1157.1 531.9h0M1157.4 524.1h0M1157.7 525.6h0M1158.1 529.9h0M1158.4 521.3h0M1158.7 530.0h0M1159.0 534.0h0M1159.3 514.8h0M1159.6 528.3h0M1159.9 528.0h0M1160.2 530.4h0M1160.5 540.8h0M1160.8 521.0h0M1161.1 542.0h0M1161.4 534.1h0M1161.8 545.4h0M1162.1 527.4h0M1162.4 533.8h0M1162.7 529.0h0M1163.0 532.9h0M1163.3 524.1h0M1163.6 524.8h0M1163.9 528.7h0M1164.2 536.6h0M1164.5 521.5h0M1164.8 527.6h0M1165.1 523.2h0M1165.5 531.5h0M1165.8 534.9h0M1166.1 520.2h0M1166.4 523.3h0M1166.7 527.4h0M1167.0 523.2h0M1167.3 544.7h0M1167.6 540.3h0M1167.9 534.4h0M1168.2 532.9h0M1168.5 522.6h0M1168.8 523.5h0M1169.2 532.3h0M1169.5 539.0h0M1169.8 527.3h0M1170.1 531.4h0M1170.4 546.6h0M1170.7 547.9h0M1171.0 523.2h0M1171.3 531.3h0M1171.6 534.3h0M1171.9 519.1h0M1172.2 526.5h0M1172.5 530.7h0M1172.9 526.1h0M1173.2 532.8h0M1173.5 527.0h0M1173.8 518.5h0M1174.1 521.4h0M1174.4 509.0h0M1174.7 520.9h0M1175.0 533.0h0M1175.3 531.1h0M1175.6 532.4h0M1175.9 537.5h0M1176.2 522.0h0M1176.6 526.1h0M1176.9 530.0h0M1177.2 546.7h0M1177.5 531.0h0M1177.8 528.4h0M1178.1 531.1h0M1178.4 523.5h0M1178.7 516.7h0M1179.0 532.2h0M1179.3 526.5h0M1179.6 532.0h0M1179.9 516.4h0M1180.2 523.4h0M1180.6 534.0h0M1180.9 530.5h0M1181.2 535.2h0M1181.5 524.9h0M1181.8 529.6h0M1182.1 533.6h0M1182.4 534.9h0M1182.7 528.9h0M1183.0 531.0h0M1183.3 528.1h0M1183.6 528.2h0M1183.9 528.8h0M1184.3 532.0h0M1184.6 520.7h0M1184.9 528.9h0M1185.2 522.6h0M1185.5 529.2h0M1185.8 527.4h0M1186.1 530.1h0M1186.4 527.3h0M1186.7 528.0h0M1187.0 520.1h0M1187.3 537.7h0M1187.6 514.0h0M1188.0 516.8h0M1188.3 532.0h0M1188.6 532.5h0M1188.9 528.2h0M1189.2 526.6h0M1189.5 521.5h0M1189.8 547.7h0M1190.1 517.9h0M1190.4 543.4h0M1190.7 518.7h0M1191.0 522.2h0M1191.3 527.1h0M1191.7 525.9h0M1192.0 533.3h0M1192.3 523.3h0M1192.6 526.5h0M1192.9 518.7h0M1193.2 536.2h0M1193.5 526.8h0M1193.8 523.9h0M1194.1 528.9h0M1194.4 534.5h0M1194.7 531.1h0M1195.0 524.3h0M1195.4 529.8h0M1195.7 531.1h0M1196.0 531.6h0M1196.3 527.0h0M1196.6 533.3h0M1196.9 522.0h0M1197.2 529.9h0M1197.5 523.9h0M1197.8 529.5h0M1198.1 525.4h0M1198.4 533.4h0M1198.7 526.6h0M1199.1 536.7h0M1199.4 523.3h0M1199.7 535.7h0M1200.0 523.9h0M1200.3 513.6h0M1232.3 430.7h0M1220.3 434.1h0M1224.3 434.7h0M1229.4 435.3h0M1233.4 434.7h0M1219.1 438.7h0M1225.4 438.1h0M1231.1 438.1h0M1233.4 440.4h0M1222.0 441.0h0M1227.1 441.6h0M1218.6 449.0h0M1223.1 449.0h0M1228.3 449.0h0M1234.0 447.6h0M1220.9 451.9h0M1225.4 451.9h0M1229.4 451.3h0M1233.4 452.4h0M1222.0 454.7h0M1227.1 455.3h0M1234.6 455.3h0M1241.4 451.3h0M1239.1 456.4h0M1219.1 458.7h0M1222.6 459.6h0M1227.4 459.0h0M1235.7 458.1h0M1234.0 462.1h0M1238.0 461.6h0M1241.4 463.9h0M1235.1 467.3h0M1238.6 468.4h0M1237.4 471.9h0M1240.3 471.3h0M1238.0 474.7h0M1240.3 476.4h0M1236.3 478.1h0M1250.4 431.6h0M1253.4 433.9h0M1247.6 437.3h0M1251.9 437.3h0M1255.7 437.3h0M1258.0 438.1h0M1245.0 441.9h0M1250.4 440.4h0M1254.2 441.1h0M1258.8 442.7h0M1243.5 448.8h0M1248.1 448.6h0M1253.4 448.6h0M1258.0 449.2h0M1262.6 449.5h0M1245.0 453.3h0M1249.6 452.6h0M1254.2 453.3h0M1259.5 453.3h0M1263.3 452.6h0M1243.5 457.9h0M1246.6 458.7h0M1255.0 457.9h0M1261.8 457.1h0M1242.0 461.7h0M1260.3 461.0h0M1261.0 464.8h0M1260.3 466.3h0M1256.5 469.3h0M1264.1 472.0h0M1267.9 409.9h0M1267.1 415.2h0M1269.4 419.0h0M1267.1 424.4h0M1264.1 428.2h0M1267.9 427.4h0M1264.9 430.5h0M1263.3 435.0h0M1266.4 437.3h0M1263.3 441.1h0M1271.0 440.4h0M1268.3 409.9h0M1269.0 413.0h0M1267.5 415.2h0M1269.8 417.5h0M1270.6 420.6h0M1284.3 414.1h0M1284.3 416.8h0M1283.5 419.8h0M1275.9 416.8h0M1276.7 419.0h0M1279.0 421.3h0M1267.5 424.4h0M1271.3 425.9h0M1275.1 424.4h0M1283.5 425.1h0M1266.8 429.0h0M1270.6 429.0h0M1274.4 428.2h0M1277.4 429.0h0M1282.8 429.7h0M1268.3 432.8h0M1272.9 433.5h0M1276.7 432.8h0M1281.2 433.5h0M1268.3 436.6h0M1272.1 435.8h0M1275.9 436.6h0M1280.5 437.3h0M1286.6 435.8h0M1293.4 436.2h0M1301.0 436.6h0M1266.8 441.1h0M1271.3 439.6h0M1275.9 440.4h0M1282.8 441.9h0M1286.6 439.6h0M1291.9 440.4h0M1302.6 439.6h0M1273.6 448.8h0M1279.7 448.8h0M1285.0 449.5h0M1291.9 448.8h0M1295.7 448.8h0M1299.5 448.8h0M1275.1 450.3h0M1294.9 451.1h0M1298.8 452.6h0M1280.5 454.9h0M1287.3 454.1h0M1291.1 455.6h0M1296.5 454.1h0M1299.5 456.4h0M1288.1 460.2h0M1288.9 461.7h0M1296.5 460.2h0M1300.3 466.3h0M1287.3 472.0h0M1298.1 451.4h0M1292.0 448.9h0M1231.7 448.0h0M1288.6 457.0h0M1269.5 448.8h0M1286.1 441.6h0M1297.0 448.3h0M1277.2 450.8h0M1222.3 449.7h0M1244.8 447.7h0M1227.9 444.2h0M1245.9 454.2h0M1268.7 447.0h0M1295.7 461.2h0M1237.2 444.1h0M1301.3 454.6h0M1296.3 458.4h0M1300.5 452.9h0M1270.2 449.5h0M1249.2 441.2h0M1286.8 449.4h0M1239.7 438.0h0M1217.2 439.4h0M1265.4 447.7h0M1289.4 433.8h0M1259.8 450.3h0M1237.2 444.3h0M1285.0 452.3h0M1243.4 435.6h0M1293.3 442.8h0M1249.2 446.4h0M1235.5 450.8h0M1288.6 448.3h0M1274.9 448.8h0M1250.7 448.4h0M1221.5 440.6h0M1300.8 456.3h0M1265.1 451.4h0M1238.2 443.3h0M1300.3 458.3h0M1263.8 445.9h0M1299.3 441.6h0M1298.7 430.2h0M1258.8 449.4h0M1232.3 451.5h0M1286.5 451.2h0M1278.3 444.3h0M1234.7 452.9h0M1270.0 450.3h0M1247.2 449.4h0M1259.3 440.8h0M1240.8 446.9h0M1252.0 447.8h0M1272.4 446.8h0M1217.0 447.8h0M1219.8 439.4h0M1278.1 452.3h0M1227.8 430.1h0M1287.5 452.8h0M1236.2 437.5h0M1275.4 437.2h0M1266.0 444.8h0M1243.1 428.9h0M1259.7 452.4h0M1258.9 447.4h0M1282.4 441.6h0M1296.6 454.1h0M1222.8 458.9h0M1262.8 431.9h0M1241.3 446.6h0" stroke="#000" stroke-width="3.8" stroke-linecap="round" fill="none"/>
<path d="M162 665.9V380.5" stroke="#800080" stroke-width="2.083" stroke-dasharray="2.083 3.4375"/>
<path d="M1201 665.9V380.5" stroke="#800080" stroke-width="2.083" stroke-dasharray="2.083 3.4375"/>
<path d="M1303 665.9V380.5" stroke="#800080" stroke-width="2.083" stroke-dasharray="2.083 3.4375"/>
<rect x="162.6" y="524.0" width="1038.0" height="13.4" fill="#ffa500" fill-opacity="0.1" stroke="#ffa500" stroke-opacity="0.1" stroke-width="1.0"/>
<rect x="1201.2" y="432.3" width="101.8" height="26.3" fill="#ffa500" fill-opacity="0.1" stroke="#ffa500" stroke-opacity="0.1" stroke-width="1.0"/>
<path d="M160.8 530.6H1202.4" stroke="#ffa500" stroke-width="2.778"/>
<path d="M1200.0 445.3H1304.4" stroke="#ffa500" stroke-width="2.778"/>
<rect x="103.5" y="499.4" width="1256.7" height="48.0" fill="#ff0000" fill-opacity="0.1" stroke="#ff0000" stroke-opacity="0.1" stroke-width="1.0"/>
<path d="M103.5 522.9H1360.8" stroke="#ff0000" stroke-width="2.083"/>
<path d="M177.3 509.3h0M224.3 499.5h0M282.4 553.6h0M515.5 551.5h0M557.3 608.3h0M603.2 507.2h0M734.1 581.3h0M812.3 626.4h0M1001.3 553.3h0M1035.2 508.3h0M1047.5 553.3h0M1181.3 509.3h0M1194.4 504.5h0" stroke="#ffa500" stroke-width="3.2" stroke-linecap="round" fill="none"/>
<path d="M771.4 380.6l2.75 5.50h-5.50zM1115.4 380.6l2.75 5.50h-5.50z" fill="#ffa500"/>
<text transform="matrix(1.1219 0 0 1.0597 658.81 657)" font-size="13.89" fill="#000" style="">59997</text>
<text transform="matrix(1.1253 0 0 1.0597 1229.78 637)" font-size="13.89" fill="#000" style="">42177</text>
</g>
<rect x="105.5" y="380.5" width="1380" height="286" fill="none" stroke="#000" stroke-width="1.111" stroke-linejoin="miter"/>
<path d="M162.5 666.5L162.5 671.36" stroke="#000" stroke-width="1.11"/>
<text transform="matrix(1.0543 0 0 1.0597 158.43 687)" font-size="13.89" fill="#000" style="">0</text>
<path d="M316.5 666.5L316.5 671.36" stroke="#000" stroke-width="1.11"/>
<text transform="matrix(1.1106 0 0 1.0597 303.75 687)" font-size="13.89" fill="#000" style="">500</text>
<path d="M470.5 666.5L470.5 671.36" stroke="#000" stroke-width="1.11"/>
<text transform="matrix(1.1230 0 0 1.0597 453.11 687)" font-size="13.89" fill="#000" style="">1000</text>
<path d="M624.5 666.5L624.5 671.36" stroke="#000" stroke-width="1.11"/>
<text transform="matrix(1.1230 0 0 1.0597 607.24 687)" font-size="13.89" fill="#000" style="">1500</text>
<path d="M779.5 666.5L779.5 671.36" stroke="#000" stroke-width="1.11"/>
<text transform="matrix(1.1265 0 0 1.0597 761.51 687)" font-size="13.89" fill="#000" style="">2000</text>
<path d="M933.5 666.5L933.5 671.36" stroke="#000" stroke-width="1.11"/>
<text transform="matrix(1.1265 0 0 1.0597 915.63 687)" font-size="13.89" fill="#000" style="">2500</text>
<path d="M1087.5 666.5L1087.5 671.36" stroke="#000" stroke-width="1.11"/>
<text transform="matrix(1.1187 0 0 1.0597 1069.97 687)" font-size="13.89" fill="#000" style="">3000</text>
<path d="M1241.5 666.5L1241.5 671.36" stroke="#000" stroke-width="1.11"/>
<text transform="matrix(1.1187 0 0 1.0597 1224.1 687)" font-size="13.89" fill="#000" style="">3500</text>
<path d="M1395.5 666.5L1395.5 671.36" stroke="#000" stroke-width="1.11"/>
<text transform="matrix(1.1235 0 0 1.0597 1378.27 687)" font-size="13.89" fill="#000" style="">4000</text>
<path d="M100.64 635.5L105.5 635.5" stroke="#000" stroke-width="1.11"/>
<text transform="matrix(1.1253 0 0 1.0597 55.72 639.8)" font-size="13.89" fill="#000" style="">7.800</text>
<path d="M100.64 597.5L105.5 597.5" stroke="#000" stroke-width="1.11"/>
<text transform="matrix(1.1180 0 0 1.0597 55.72 601.8)" font-size="13.89" fill="#000" style="">7.825</text>
<path d="M100.64 560.5L105.5 560.5" stroke="#000" stroke-width="1.11"/>
<text transform="matrix(1.1253 0 0 1.0597 55.72 564.8)" font-size="13.89" fill="#000" style="">7.850</text>
<path d="M100.64 522.5L105.5 522.5" stroke="#000" stroke-width="1.11"/>
<text transform="matrix(1.1180 0 0 1.0597 55.72 526.8)" font-size="13.89" fill="#000" style="">7.875</text>
<path d="M100.64 484.5L105.5 484.5" stroke="#000" stroke-width="1.11"/>
<text transform="matrix(1.1253 0 0 1.0597 55.72 488.8)" font-size="13.89" fill="#000" style="">7.900</text>
<path d="M100.64 446.5L105.5 446.5" stroke="#000" stroke-width="1.11"/>
<text transform="matrix(1.1180 0 0 1.0597 55.72 450.8)" font-size="13.89" fill="#000" style="">7.925</text>
<path d="M100.64 409.5L105.5 409.5" stroke="#000" stroke-width="1.11"/>
<text transform="matrix(1.1253 0 0 1.0597 55.72 413.8)" font-size="13.89" fill="#000" style="">7.950</text>
<text transform="matrix(1.1287 0 0 1.0597 707.17 372)" font-size="16.67" fill="#000" style="">Magnitude Estimates</text>
<rect x="1365.5" y="387.7" width="113" height="47.4" rx="2.8" ry="2.8" fill="#fff" fill-opacity="0.8" stroke="#cccccc" stroke-opacity="0.8" stroke-width="1.389"/>
<path d="M1370.4 399.4H1398.6" stroke="#ffa500" stroke-width="2.778" stroke-linecap="square"/>
<path d="M1370.0 421.9H1398.0" stroke="#ff0000" stroke-width="2.083" stroke-linecap="square"/>
<text transform="matrix(1.1243 0 0 1.0597 1409.66 403.9)" font-size="13.89" fill="#000" style="">mag</text>
<text transform="matrix(1.0197 0 0 1.0597 1439.96 405.9)" font-size="9.72" fill="#000" style="font-style:italic;">OBSID</text>
<text transform="matrix(1.1243 0 0 1.0597 1408.86 426.9)" font-size="13.89" fill="#000" style="">mag</text>
<rect x="1408.4" y="634.5" width="70" height="25" rx="2.8" ry="2.8" fill="#fff" fill-opacity="0.8" stroke="#cccccc" stroke-opacity="0.8" stroke-width="1.389"/>
<path d="M1428.6 647.3h0" stroke="#000" stroke-width="3.8" stroke-linecap="round" fill="none"/>
<text transform="matrix(1.0155 0 0 1.0597 1452.93 650.6)" font-size="13.89" fill="#000" style="">OK</text>
<path d="M105.5 916.5H1485.5" stroke="#b0b0b0" stroke-width="1.111" stroke-dasharray="1.111 1.833"/>
<path d="M105.5 878.5H1485.5" stroke="#b0b0b0" stroke-width="1.111" stroke-dasharray="1.111 1.833"/>
<path d="M105.5 840.5H1485.5" stroke="#b0b0b0" stroke-width="1.111" stroke-dasharray="1.111 1.833"/>
<path d="M105.5 802.5H1485.5" stroke="#b0b0b0" stroke-width="1.111" stroke-dasharray="1.111 1.833"/>
<path d="M105.5 763.5H1485.5" stroke="#b0b0b0" stroke-width="1.111" stroke-dasharray="1.111 1.833"/>
<g clip-path="url(#c3)">
<path d="M161.3 763.5H176.8M1200.1 763.5H1220.1" stroke="#000" stroke-width="2.7"/>
<path d="M165.0 763.5h0M167.9 763.5h0M170.8 763.5h0M173.7 763.5h0M175.4 763.5h0M1201.5 763.5h0M1204.4 763.5h0M1207.3 763.5h0M1210.2 763.5h0M1213.1 763.5h0M1216.0 763.5h0M1218.9 763.5h0" stroke="#fff" stroke-width="1" stroke-linecap="round" fill="none"/>
<g fill="none" stroke="#000" stroke-width="1.2"><circle cx="542.4" cy="840.5" r="0.9"/><circle cx="834.3" cy="840.5" r="0.9"/><circle cx="902.3" cy="840.5" r="0.9"/><circle cx="1264.3" cy="840.5" r="0.9"/><circle cx="394.0" cy="878.5" r="0.9"/><circle cx="542.4" cy="878.5" r="0.9"/><circle cx="834.3" cy="878.5" r="0.9"/><circle cx="902.3" cy="878.5" r="0.9"/><circle cx="1264.3" cy="878.5" r="0.9"/></g>
<path d="M162 953.9V725.5" stroke="#800080" stroke-width="2.083" stroke-dasharray="2.083 3.4375"/>
<path d="M1201 953.9V725.5" stroke="#800080" stroke-width="2.083" stroke-dasharray="2.083 3.4375"/>
<path d="M1303 953.9V725.5" stroke="#800080" stroke-width="2.083" stroke-dasharray="2.083 3.4375"/>
</g>
<rect x="105.5" y="725.5" width="1380" height="229" fill="none" stroke="#000" stroke-width="1.111" stroke-linejoin="miter"/>
<path d="M100.64 916.5L105.5 916.5" stroke="#000" stroke-width="1.11"/>
<text transform="matrix(1.0602 0 0 1.0597 14.64 920.8)" font-size="13.89" fill="#000" style="">OBS not OK</text>
<path d="M100.64 878.5L105.5 878.5" stroke="#000" stroke-width="1.11"/>
<text transform="matrix(1.2048 0 0 1.0597 51.38 882.8)" font-size="13.89" fill="#000" style="">dr &gt; 5</text>
<path d="M100.64 840.5L105.5 840.5" stroke="#000" stroke-width="1.11"/>
<text transform="matrix(1.1324 0 0 1.0597 37.4 844.8)" font-size="13.89" fill="#000" style="">Ion. rad.</text>
<path d="M100.64 802.5L105.5 802.5" stroke="#000" stroke-width="1.11"/>
<text transform="matrix(1.1689 0 0 1.0597 32.86 806.8)" font-size="13.89" fill="#000" style="">not track</text>
<path d="M100.64 763.5L105.5 763.5" stroke="#000" stroke-width="1.11"/>
<text transform="matrix(1.1222 0 0 1.0597 16.19 767.8)" font-size="13.89" fill="#000" style="">not Kalman</text>
<path d="M105.5 1009.5H1485.5" stroke="#b0b0b0" stroke-width="1.111" stroke-dasharray="1.111 1.833"/>
<path d="M105.5 983.5H1485.5" stroke="#b0b0b0" stroke-width="1.111" stroke-dasharray="1.111 1.833"/>
<path d="M105.5 957.5H1485.5" stroke="#b0b0b0" stroke-width="1.111" stroke-dasharray="1.111 1.833"/>
<g clip-path="url(#c4)">
<path d="M162 1010.9V954.5" stroke="#800080" stroke-width="2.083" stroke-dasharray="2.083 3.4375"/>
<path d="M1201 1010.9V954.5" stroke="#800080" stroke-width="2.083" stroke-dasharray="2.083 3.4375"/>
<path d="M1303 1010.9V954.5" stroke="#800080" stroke-width="2.083" stroke-dasharray="2.083 3.4375"/>
<path d="M176.0 1008.4h0M176.3 1008.8h0M176.6 1008.7h0M176.9 1008.3h0M177.2 1008.8h0M177.5 1008.9h0M177.8 1008.9h0M178.1 1008.8h0M178.4 1008.7h0M178.7 1009.0h0M179.1 1007.8h0M179.4 1008.5h0M179.7 1008.8h0M180.0 1008.2h0M180.3 1008.4h0M180.6 1008.5h0M180.9 1008.1h0M181.2 1008.7h0M181.5 1008.3h0M181.8 1008.5h0M182.1 1008.9h0M182.4 1008.5h0M182.8 1008.2h0M183.1 1008.8h0M183.4 1008.4h0M183.7 1008.9h0M184.0 1008.6h0M184.3 1008.6h0M184.6 1008.5h0M184.9 1009.0h0M185.2 1008.5h0M185.5 1008.7h0M185.8 1008.6h0M186.1 1008.8h0M186.5 1008.7h0M186.8 1008.4h0M187.1 1008.9h0M187.4 1008.8h0M187.7 1008.5h0M188.0 1008.9h0M188.3 1008.2h0M188.6 1008.7h0M188.9 1008.4h0M189.2 1008.3h0M189.5 1008.6h0M189.8 1008.4h0M190.2 1008.2h0M190.5 1008.9h0M190.8 1008.8h0M191.1 1008.5h0M191.4 1008.9h0M191.7 1008.5h0M192.0 1008.8h0M192.3 1008.9h0M192.6 1008.6h0M192.9 1008.7h0M193.2 1008.5h0M193.5 1008.0h0M193.8 1008.7h0M194.2 1008.1h0M194.5 1008.7h0M194.8 1008.5h0M195.1 1008.9h0M195.4 1008.3h0M195.7 1008.7h0M196.0 1008.1h0M196.3 1008.7h0M196.6 1008.9h0M196.9 1008.1h0M197.2 1008.8h0M197.5 1008.7h0M197.9 1008.8h0M198.2 1008.9h0M198.5 1008.1h0M198.8 1008.5h0M199.1 1008.9h0M199.4 1008.3h0M199.7 1008.8h0M200.0 1008.9h0M200.3 1008.5h0M200.6 1008.7h0M200.9 1008.7h0M201.2 1008.6h0M201.6 1008.5h0M201.9 1007.6h0M202.2 1008.3h0M202.5 1008.5h0M202.8 1008.9h0M203.1 1008.5h0M203.4 1008.8h0M203.7 1008.9h0M204.0 1008.2h0M204.3 1008.5h0M204.6 1008.0h0M204.9 1008.2h0M205.3 1008.6h0M205.6 1008.5h0M205.9 1008.8h0M206.2 1008.3h0M206.5 1008.6h0M206.8 1008.8h0M207.1 1008.5h0M207.4 1008.7h0M207.7 1008.6h0M208.0 1008.5h0M208.3 1008.7h0M208.6 1008.7h0M209.0 1008.9h0M209.3 1008.8h0M209.6 1009.0h0M209.9 1008.9h0M210.2 1008.3h0M210.5 1008.4h0M210.8 1008.8h0M211.1 1008.8h0M211.4 1008.5h0M211.7 1009.0h0M212.0 1008.5h0M212.3 1008.9h0M212.7 1008.9h0M213.0 1008.7h0M213.3 1008.9h0M213.6 1008.7h0M213.9 1008.7h0M214.2 1008.7h0M214.5 1008.7h0M214.8 1008.5h0M215.1 1008.4h0M215.4 1008.1h0M215.7 1008.5h0M216.0 1008.1h0M216.4 1008.7h0M216.7 1008.8h0M217.0 1008.7h0M217.3 1009.0h0M217.6 1009.0h0M217.9 1008.1h0M218.2 1008.6h0M218.5 1008.4h0M218.8 1008.8h0M219.1 1008.2h0M219.4 1008.5h0M219.7 1008.9h0M220.1 1008.8h0M220.4 1008.8h0M220.7 1008.4h0M221.0 1008.7h0M221.3 1009.0h0M221.6 1008.9h0M221.9 1008.7h0M222.2 1008.8h0M222.5 1008.7h0M222.8 1008.1h0M223.1 1008.9h0M223.4 1008.9h0M223.8 1008.5h0M224.1 1008.6h0M224.4 1009.0h0M224.7 1008.7h0M225.0 1007.5h0M225.3 1008.8h0M225.6 1008.6h0M225.9 1008.8h0M226.2 1007.8h0M226.5 1009.0h0M226.8 1009.0h0M227.1 1008.8h0M227.4 1008.5h0M227.8 1008.6h0M228.1 1008.9h0M228.4 1008.7h0M228.7 1008.4h0M229.0 1008.9h0M229.3 1007.8h0M229.6 1008.8h0M229.9 1008.7h0M230.2 1008.8h0M230.5 1008.6h0M230.8 1008.9h0M231.1 1008.7h0M231.5 1009.0h0M231.8 1008.7h0M232.1 1009.0h0M232.4 1008.1h0M232.7 1008.9h0M233.0 1009.0h0M233.3 1008.3h0M233.6 1008.7h0M233.9 1008.8h0M234.2 1008.9h0M234.5 1008.4h0M234.8 1008.5h0M235.2 1008.8h0M235.5 1009.0h0M235.8 1008.6h0M236.1 1008.8h0M236.4 1008.9h0M236.7 1008.1h0M237.0 1008.3h0M237.3 1008.9h0M237.6 1008.9h0M237.9 1008.7h0M238.2 1008.2h0M238.5 1009.0h0M238.9 1008.9h0M239.2 1008.0h0M239.5 1008.8h0M239.8 1009.0h0M240.1 1008.8h0M240.4 1008.6h0M240.7 1008.9h0M241.0 1008.5h0M241.3 1009.0h0M241.6 1008.9h0M241.9 1009.0h0M242.2 1008.2h0M242.6 1007.9h0M242.9 1008.1h0M243.2 1008.2h0M243.5 1008.7h0M243.8 1008.7h0M244.1 1008.7h0M244.4 1008.4h0M244.7 1008.0h0M245.0 1008.9h0M245.3 1008.7h0M245.6 1007.9h0M245.9 1008.3h0M246.3 1008.7h0M246.6 1008.6h0M246.9 1008.9h0M247.2 1008.4h0M247.5 1008.8h0M247.8 1008.5h0M248.1 1008.9h0M248.4 1008.5h0M248.7 1008.7h0M249.0 1008.4h0M249.3 1008.2h0M249.6 1008.8h0M250.0 1008.8h0M250.3 1008.5h0M250.6 1008.2h0M250.9 1008.4h0M251.2 1008.8h0M251.5 1008.9h0M251.8 1008.9h0M252.1 1008.4h0M252.4 1008.8h0M252.7 1008.3h0M253.0 1008.3h0M253.3 1008.7h0M253.7 1008.5h0M254.0 1008.4h0M254.3 1008.5h0M254.6 1008.7h0M254.9 1008.9h0M255.2 1008.8h0M255.5 1008.4h0M255.8 1008.2h0M256.1 1008.8h0M256.4 1008.8h0M256.7 1008.1h0M257.0 1008.2h0M257.3 1009.0h0M257.7 1008.9h0M258.0 1008.5h0M258.3 1008.8h0M258.6 1008.8h0M258.9 1008.7h0M259.2 1008.8h0M259.5 1008.9h0M259.8 1008.7h0M260.1 1008.7h0M260.4 1008.6h0M260.7 1008.4h0M261.0 1008.8h0M261.4 1008.4h0M261.7 1008.1h0M262.0 1008.8h0M262.3 1008.7h0M262.6 1008.3h0M262.9 1008.9h0M263.2 1008.6h0M263.5 1008.6h0M263.8 1007.9h0M264.1 1008.8h0M264.4 1008.6h0M264.7 1008.1h0M265.1 1008.3h0M265.4 1008.6h0M265.7 1008.2h0M266.0 1008.5h0M266.3 1008.9h0M266.6 1008.9h0M266.9 1008.8h0M267.2 1008.4h0M267.5 1008.8h0M267.8 1008.5h0M268.1 1009.0h0M268.4 1009.0h0M268.8 1008.8h0M269.1 1008.9h0M269.4 1008.9h0M269.7 1008.5h0M270.0 1008.6h0M270.3 1008.9h0M270.6 1008.7h0M270.9 1008.9h0M271.2 1009.0h0M271.5 1008.9h0M271.8 1008.9h0M272.1 1008.9h0M272.5 1008.9h0M272.8 1008.8h0M273.1 1008.9h0M273.4 1008.7h0M273.7 1008.7h0M274.0 1008.6h0M274.3 1008.3h0M274.6 1008.7h0M274.9 1009.0h0M275.2 1008.6h0M275.5 1008.9h0M275.8 1008.4h0M276.2 1008.7h0M276.5 1008.9h0M276.8 1009.0h0M277.1 1008.5h0M277.4 1009.0h0M277.7 1009.0h0M278.0 1009.0h0M278.3 1008.1h0M278.6 1008.5h0M278.9 1008.1h0M279.2 1008.7h0M279.5 1008.5h0M279.9 1008.9h0M280.2 1008.2h0M280.5 1008.8h0M280.8 1008.7h0M281.1 1008.3h0M281.4 1008.7h0M281.7 1008.8h0M282.0 1008.9h0M282.3 1008.8h0M282.6 1008.8h0M282.9 1008.6h0M283.2 1008.1h0M283.6 1008.6h0M283.9 1009.0h0M284.2 1008.4h0M284.5 1008.4h0M284.8 1008.3h0M285.1 1008.7h0M285.4 1008.5h0M285.7 1008.5h0M286.0 1008.9h0M286.3 1009.0h0M286.6 1008.8h0M286.9 1008.3h0M287.2 1008.9h0M287.6 1008.4h0M287.9 1008.8h0M288.2 1008.8h0M288.5 1008.9h0M288.8 1008.8h0M289.1 1008.6h0M289.4 1008.7h0M289.7 1008.9h0M290.0 1008.9h0M290.3 1008.6h0M290.6 1008.5h0M290.9 1008.8h0M291.3 1009.0h0M291.6 1008.6h0M291.9 1008.9h0M292.2 1008.4h0M292.5 1008.8h0M292.8 1008.7h0M293.1 1008.6h0M293.4 1008.6h0M293.7 1008.4h0M294.0 1008.0h0M294.3 1008.7h0M294.6 1008.9h0M295.0 1009.0h0M295.3 1008.7h0M295.6 1008.9h0M295.9 1007.9h0M296.2 1008.9h0M296.5 1008.9h0M296.8 1008.8h0M297.1 1008.2h0M297.4 1009.0h0M297.7 1008.4h0M298.0 1008.3h0M298.3 1008.8h0M298.7 1009.0h0M299.0 1008.2h0M299.3 1008.1h0M299.6 1008.3h0M299.9 1008.4h0M300.2 1008.7h0M300.5 1008.0h0M300.8 1008.4h0M301.1 1008.9h0M301.4 1008.4h0M301.7 1008.4h0M302.0 1008.5h0M302.4 1008.8h0M302.7 1008.6h0M303.0 1008.4h0M303.3 1008.7h0M303.6 1008.9h0M303.9 1009.0h0M304.2 1008.9h0M304.5 1008.9h0M304.8 1008.1h0M305.1 1008.9h0M305.4 1008.4h0M305.7 1008.7h0M306.1 1007.3h0M306.4 1008.2h0M306.7 1008.1h0M307.0 1008.6h0M307.3 1008.1h0M307.6 1008.3h0M307.9 1008.9h0M308.2 1008.1h0M308.5 1008.6h0M308.8 1008.9h0M309.1 1008.3h0M309.4 1008.9h0M309.8 1008.7h0M310.1 1008.7h0M310.4 1008.8h0M310.7 1008.3h0M311.0 1008.8h0M311.3 1008.9h0M311.6 1009.0h0M311.9 1008.6h0M312.2 1008.9h0M312.5 1008.8h0M312.8 1008.9h0M313.1 1008.7h0M313.5 1008.7h0M313.8 1008.6h0M314.1 1008.7h0M314.4 1008.8h0M314.7 1008.5h0M315.0 1008.4h0M315.3 1008.5h0M315.6 1008.8h0M315.9 1008.7h0M316.2 1008.4h0M316.5 1008.7h0M316.8 1008.8h0M317.1 1008.9h0M317.5 1008.6h0M317.8 1008.6h0M318.1 1008.3h0M318.4 1009.0h0M318.7 1008.5h0M319.0 1008.9h0M319.3 1008.8h0M319.6 1008.2h0M319.9 1009.0h0M320.2 1008.9h0M320.5 1008.0h0M320.8 1008.6h0M321.2 1008.4h0M321.5 1008.6h0M321.8 1008.8h0M322.1 1008.9h0M322.4 1008.7h0M322.7 1008.7h0M323.0 1008.8h0M323.3 1008.3h0M323.6 1009.0h0M323.9 1008.6h0M324.2 1008.9h0M324.5 1008.6h0M324.9 1009.0h0M325.2 1008.6h0M325.5 1008.6h0M325.8 1008.7h0M326.1 1008.7h0M326.4 1008.6h0M326.7 1008.6h0M327.0 1008.9h0M327.3 1008.6h0M327.6 1008.7h0M327.9 1008.8h0M328.2 1008.3h0M328.6 1008.6h0M328.9 1008.8h0M329.2 1008.0h0M329.5 1008.8h0M329.8 1008.3h0M330.1 1008.5h0M330.4 1009.0h0M330.7 1008.9h0M331.0 1009.0h0M331.3 1008.1h0M331.6 1008.5h0M331.9 1008.5h0M332.3 1008.9h0M332.6 1009.0h0M332.9 1008.9h0M333.2 1008.6h0M333.5 1009.0h0M333.8 1008.5h0M334.1 1008.9h0M334.4 1008.8h0M334.7 1008.2h0M335.0 1008.6h0M335.3 1008.8h0M335.6 1008.7h0M336.0 1008.7h0M336.3 1008.5h0M336.6 1008.6h0M336.9 1008.2h0M337.2 1008.3h0M337.5 1008.9h0M337.8 1009.0h0M338.1 1008.3h0M338.4 1008.7h0M338.7 1008.8h0M339.0 1008.6h0M339.3 1008.4h0M339.7 1008.8h0M340.0 1008.2h0M340.3 1008.4h0M340.6 1009.0h0M340.9 1008.5h0M341.2 1008.9h0M341.5 1008.5h0M341.8 1008.9h0M342.1 1008.0h0M342.4 1008.9h0M342.7 1008.4h0M343.0 1008.9h0M343.4 1008.5h0M343.7 1008.3h0M344.0 1008.8h0M344.3 1008.2h0M344.6 1008.9h0M344.9 1008.1h0M345.2 1008.3h0M345.5 1008.7h0M345.8 1008.2h0M346.1 1008.2h0M346.4 1008.3h0M346.7 1008.5h0M347.1 1008.9h0M347.4 1008.3h0M347.7 1008.6h0M348.0 1008.2h0M348.3 1008.6h0M348.6 1008.7h0M348.9 1008.3h0M349.2 1008.6h0M349.5 1008.5h0M349.8 1008.6h0M350.1 1008.9h0M350.4 1008.7h0M350.7 1008.5h0M351.1 1008.6h0M351.4 1008.9h0M351.7 1008.2h0M352.0 1008.5h0M352.3 1008.6h0M352.6 1008.7h0M352.9 1008.9h0M353.2 1008.9h0M353.5 1008.6h0M353.8 1008.7h0M354.1 1008.9h0M354.4 1007.8h0M354.8 1008.8h0M355.1 1008.6h0M355.4 1008.9h0M355.7 1008.0h0M356.0 1008.8h0M356.3 1008.0h0M356.6 1008.8h0M356.9 1008.4h0M357.2 1008.5h0M357.5 1007.4h0M357.8 1008.7h0M358.1 1009.0h0M358.5 1008.8h0M358.8 1008.8h0M359.1 1008.1h0M359.4 1008.1h0M359.7 1008.8h0M360.0 1009.0h0M360.3 1009.0h0M360.6 1008.9h0M360.9 1008.8h0M361.2 1008.9h0M361.5 1008.8h0M361.8 1008.1h0M362.2 1008.6h0M362.5 1008.3h0M362.8 1008.4h0M363.1 1008.8h0M363.4 1008.4h0M363.7 1008.3h0M364.0 1008.6h0M364.3 1008.8h0M364.6 1009.0h0M364.9 1008.4h0M365.2 1009.0h0M365.5 1008.9h0M365.9 1008.5h0M366.2 1008.1h0M366.5 1008.8h0M366.8 1008.1h0M367.1 1008.0h0M367.4 1008.7h0M367.7 1008.9h0M368.0 1008.2h0M368.3 1008.5h0M368.6 1008.8h0M368.9 1008.3h0M369.2 1008.2h0M369.6 1008.7h0M369.9 1008.9h0M370.2 1009.0h0M370.5 1008.6h0M370.8 1007.7h0M371.1 1008.4h0M371.4 1007.9h0M371.7 1008.0h0M372.0 1008.6h0M372.3 1009.0h0M372.6 1008.5h0M372.9 1008.9h0M373.3 1008.1h0M373.6 1008.4h0M373.9 1008.8h0M374.2 1007.2h0M374.5 1008.4h0M374.8 1008.7h0M375.1 1008.7h0M375.4 1008.8h0M375.7 1009.0h0M376.0 1008.8h0M376.3 1008.8h0M376.6 1008.4h0M377.0 1008.8h0M377.3 1008.8h0M377.6 1008.8h0M377.9 1009.0h0M378.2 1008.3h0M378.5 1008.9h0M378.8 1008.5h0M379.1 1008.9h0M379.4 1008.3h0M379.7 1008.9h0M380.0 1008.3h0M380.3 1008.5h0M380.6 1008.3h0M381.0 1008.7h0M381.3 1008.6h0M381.6 1008.8h0M381.9 1008.1h0M382.2 1009.0h0M382.5 1008.8h0M382.8 1008.8h0M383.1 1008.4h0M383.4 1008.0h0M383.7 1009.0h0M384.0 1008.4h0M384.3 1008.8h0M384.7 1008.5h0M385.0 1008.9h0M385.3 1008.2h0M385.6 1008.9h0M385.9 1008.7h0M386.2 1008.9h0M386.5 1008.3h0M386.8 1008.6h0M387.1 1009.0h0M387.4 1008.5h0M387.7 1008.5h0M388.0 1008.6h0M388.4 1008.2h0M388.7 1008.3h0M389.0 1009.0h0M389.3 1009.0h0M389.6 1008.8h0M389.9 1008.9h0M390.2 1008.5h0M390.5 1008.1h0M390.8 1009.0h0M391.1 1008.7h0M391.4 1008.8h0M391.7 1008.8h0M392.1 1008.9h0M392.4 1008.8h0M392.7 1008.9h0M393.0 1008.7h0M393.3 1009.0h0M393.6 1008.7h0M393.9 1008.5h0M394.2 1008.6h0M394.5 1008.4h0M394.8 1008.2h0M395.1 1008.9h0M395.4 1008.4h0M395.8 1008.1h0M396.1 1008.3h0M396.4 1008.9h0M396.7 1008.5h0M397.0 1008.5h0M397.3 1008.5h0M397.6 1008.9h0M397.9 1008.7h0M398.2 1008.5h0M398.5 1009.0h0M398.8 1008.7h0M399.1 1009.0h0M399.5 1008.8h0M399.8 1008.7h0M400.1 1008.9h0M400.4 1008.8h0M400.7 1008.8h0M401.0 1008.5h0M401.3 1008.8h0M401.6 1009.0h0M401.9 1008.5h0M402.2 1008.8h0M402.5 1008.8h0M402.8 1008.6h0M403.2 1008.9h0M403.5 1009.0h0M403.8 1008.8h0M404.1 1008.9h0M404.4 1008.6h0M404.7 1008.7h0M405.0 1008.8h0M405.3 1009.0h0M405.6 1008.9h0M405.9 1008.9h0M406.2 1008.3h0M406.5 1008.4h0M406.9 1007.8h0M407.2 1008.5h0M407.5 1008.5h0M407.8 1008.8h0M408.1 1009.0h0M408.4 1008.8h0M408.7 1008.4h0M409.0 1008.4h0M409.3 1008.6h0M409.6 1008.0h0M409.9 1008.9h0M410.2 1008.0h0M410.5 1008.7h0M410.9 1008.8h0M411.2 1009.0h0M411.5 1008.3h0M411.8 1008.7h0M412.1 1008.5h0M412.4 1008.9h0M412.7 1008.7h0M413.0 1008.1h0M413.3 1008.8h0M413.6 1008.9h0M413.9 1008.5h0M414.2 1008.3h0M414.6 1009.0h0M414.9 1008.6h0M415.2 1008.7h0M415.5 1008.8h0M415.8 1008.8h0M416.1 1008.9h0M416.4 1009.0h0M416.7 1008.9h0M417.0 1008.9h0M417.3 1008.4h0M417.6 1008.9h0M417.9 1008.9h0M418.3 1008.9h0M418.6 1008.6h0M418.9 1008.3h0M419.2 1008.6h0M419.5 1008.3h0M419.8 1008.1h0M420.1 1008.5h0M420.4 1008.8h0M420.7 1008.4h0M421.0 1008.5h0M421.3 1008.9h0M421.6 1008.6h0M422.0 1008.4h0M422.3 1008.9h0M422.6 1008.5h0M422.9 1008.8h0M423.2 1008.8h0M423.5 1008.6h0M423.8 1008.8h0M424.1 1008.9h0M424.4 1008.8h0M424.7 1008.5h0M425.0 1008.9h0M425.3 1008.9h0M425.7 1009.0h0M426.0 1008.7h0M426.3 1008.7h0M426.6 1008.3h0M426.9 1008.8h0M427.2 1008.5h0M427.5 1009.0h0M427.8 1009.0h0M428.1 1008.6h0M428.4 1008.9h0M428.7 1008.8h0M429.0 1008.9h0M429.4 1008.8h0M429.7 1008.7h0M430.0 1008.9h0M430.3 1008.1h0M430.6 1008.5h0M430.9 1008.9h0M431.2 1008.0h0M431.5 1008.5h0M431.8 1009.0h0M432.1 1008.9h0M432.4 1008.8h0M432.7 1008.7h0M433.1 1008.9h0M433.4 1009.0h0M433.7 1008.6h0M434.0 1008.8h0M434.3 1008.5h0M434.6 1008.6h0M434.9 1008.8h0M435.2 1008.4h0M435.5 1008.8h0M435.8 1008.5h0M436.1 1008.8h0M436.4 1008.9h0M436.8 1008.7h0M437.1 1008.9h0M437.4 1008.9h0M437.7 1008.2h0M438.0 1009.0h0M438.3 1008.4h0M438.6 1008.8h0M438.9 1008.7h0M439.2 1008.2h0M439.5 1008.4h0M439.8 1008.6h0M440.1 1008.3h0M440.4 1008.4h0M440.8 1008.8h0M441.1 1008.9h0M441.4 1008.9h0M441.7 1009.0h0M442.0 1008.7h0M442.3 1008.7h0M442.6 1008.2h0M442.9 1008.4h0M443.2 1008.9h0M443.5 1008.4h0M443.8 1009.0h0M444.1 1008.8h0M444.5 1008.4h0M444.8 1008.7h0M445.1 1008.7h0M445.4 1008.9h0M445.7 1008.3h0M446.0 1008.3h0M446.3 1008.6h0M446.6 1009.0h0M446.9 1008.2h0M447.2 1009.0h0M447.5 1007.9h0M447.8 1008.9h0M448.2 1008.8h0M448.5 1008.7h0M448.8 1008.7h0M449.1 1008.6h0M449.4 1007.8h0M449.7 1007.9h0M450.0 1008.7h0M450.3 1009.0h0M450.6 1008.1h0M450.9 1008.6h0M451.2 1008.5h0M451.5 1008.0h0M451.9 1008.7h0M452.2 1008.8h0M452.5 1008.9h0M452.8 1008.5h0M453.1 1008.8h0M453.4 1009.0h0M453.7 1008.9h0M454.0 1008.8h0M454.3 1008.3h0M454.6 1008.8h0M454.9 1008.4h0M455.2 1008.8h0M455.6 1008.8h0M455.9 1008.7h0M456.2 1008.3h0M456.5 1008.9h0M456.8 1008.9h0M457.1 1008.7h0M457.4 1008.0h0M457.7 1007.6h0M458.0 1008.8h0M458.3 1009.0h0M458.6 1008.5h0M458.9 1009.0h0M459.3 1009.0h0M459.6 1008.7h0M459.9 1009.0h0M460.2 1008.6h0M460.5 1009.0h0M460.8 1008.1h0M461.1 1008.7h0M461.4 1007.9h0M461.7 1008.9h0M462.0 1008.5h0M462.3 1008.6h0M462.6 1008.4h0M463.0 1008.9h0M463.3 1008.8h0M463.6 1008.6h0M463.9 1008.7h0M464.2 1008.9h0M464.5 1007.9h0M464.8 1008.7h0M465.1 1009.0h0M465.4 1008.6h0M465.7 1008.9h0M466.0 1008.8h0M466.3 1009.0h0M466.7 1008.7h0M467.0 1008.4h0M467.3 1008.9h0M467.6 1008.8h0M467.9 1007.6h0M468.2 1008.5h0M468.5 1008.9h0M468.8 1008.7h0M469.1 1008.5h0M469.4 1008.7h0M469.7 1007.9h0M470.0 1008.8h0M470.4 1007.8h0M470.7 1008.8h0M471.0 1008.6h0M471.3 1008.2h0M471.6 1008.2h0M471.9 1008.3h0M472.2 1008.5h0M472.5 1008.5h0M472.8 1007.8h0M473.1 1008.6h0M473.4 1008.0h0M473.7 1008.3h0M474.0 1009.0h0M474.4 1008.7h0M474.7 1009.0h0M475.0 1008.9h0M475.3 1008.4h0M475.6 1008.8h0M475.9 1008.7h0M476.2 1008.6h0M476.5 1007.8h0M476.8 1008.4h0M477.1 1008.4h0M477.4 1008.7h0M477.7 1008.9h0M478.1 1008.3h0M478.4 1009.0h0M478.7 1008.3h0M479.0 1008.2h0M479.3 1007.7h0M479.6 1008.5h0M479.9 1008.7h0M480.2 1008.9h0M480.5 1008.5h0M480.8 1008.5h0M481.1 1008.9h0M481.4 1008.8h0M481.8 1008.4h0M482.1 1009.0h0M482.4 1008.5h0M482.7 1008.9h0M483.0 1009.0h0M483.3 1008.7h0M483.6 1009.0h0M483.9 1008.8h0M484.2 1008.7h0M484.5 1008.6h0M484.8 1008.2h0M485.1 1008.4h0M485.5 1008.6h0M485.8 1008.4h0M486.1 1009.0h0M486.4 1008.6h0M486.7 1008.2h0M487.0 1008.7h0M487.3 1008.9h0M487.6 1008.8h0M487.9 1008.8h0M488.2 1008.5h0M488.5 1008.6h0M488.8 1008.9h0M489.2 1008.9h0M489.5 1008.2h0M489.8 1008.3h0M490.1 1008.9h0M490.4 1008.3h0M490.7 1007.8h0M491.0 1008.9h0M491.3 1008.8h0M491.6 1008.9h0M491.9 1009.0h0M492.2 1008.5h0M492.5 1007.3h0M492.9 1009.0h0M493.2 1008.6h0M493.5 1008.9h0M493.8 1008.5h0M494.1 1008.8h0M494.4 1009.0h0M494.7 1008.3h0M495.0 1008.6h0M495.3 1008.7h0M495.6 1008.6h0M495.9 1008.1h0M496.2 1008.6h0M496.6 1008.4h0M496.9 1008.8h0M497.2 1008.8h0M497.5 1008.9h0M497.8 1008.8h0M498.1 1008.7h0M498.4 1008.4h0M498.7 1009.0h0M499.0 1008.3h0M499.3 1008.7h0M499.6 1008.6h0M499.9 1008.8h0M500.3 1008.5h0M500.6 1008.7h0M500.9 1007.5h0M501.2 1008.2h0M501.5 1008.7h0M501.8 1008.1h0M502.1 1007.9h0M502.4 1007.8h0M502.7 1008.9h0M503.0 1008.6h0M503.3 1008.9h0M503.6 1008.9h0M503.9 1008.9h0M504.3 1008.9h0M504.6 1008.9h0M504.9 1008.4h0M505.2 1008.9h0M505.5 1008.9h0M505.8 1008.5h0M506.1 1008.5h0M506.4 1008.8h0M506.7 1008.5h0M507.0 1008.1h0M507.3 1008.7h0M507.6 1008.3h0M508.0 1008.6h0M508.3 1008.7h0M508.6 1008.9h0M508.9 1008.7h0M509.2 1008.9h0M509.5 1008.3h0M509.8 1008.0h0M510.1 1008.7h0M510.4 1008.4h0M510.7 1008.1h0M511.0 1009.0h0M511.3 1008.0h0M511.7 1007.8h0M512.0 1008.8h0M512.3 1008.7h0M512.6 1009.0h0M512.9 1008.4h0M513.2 1008.6h0M513.5 1008.0h0M513.8 1008.9h0M514.1 1008.7h0M514.4 1007.9h0M514.7 1008.6h0M515.0 1008.8h0M515.4 1008.6h0M515.7 1008.9h0M516.0 1008.8h0M516.3 1008.8h0M516.6 1008.3h0M516.9 1008.8h0M517.2 1008.3h0M517.5 1008.7h0M517.8 1007.9h0M518.1 1008.9h0M518.4 1008.6h0M518.7 1008.3h0M519.1 1008.5h0M519.4 1008.8h0M519.7 1008.9h0M520.0 1008.4h0M520.3 1008.4h0M520.6 1008.9h0M520.9 1008.8h0M521.2 1008.5h0M521.5 1008.5h0M521.8 1008.5h0M522.1 1008.8h0M522.4 1008.5h0M522.8 1008.8h0M523.1 1008.7h0M523.4 1008.6h0M523.7 1008.8h0M524.0 1008.5h0M524.3 1008.3h0M524.6 1009.0h0M524.9 1009.0h0M525.2 1008.4h0M525.5 1008.3h0M525.8 1008.7h0M526.1 1008.5h0M526.5 1008.8h0M526.8 1008.7h0M527.1 1008.6h0M527.4 1008.7h0M527.7 1009.0h0M528.0 1008.6h0M528.3 1008.8h0M528.6 1008.8h0M528.9 1008.6h0M529.2 1007.7h0M529.5 1008.7h0M529.8 1008.4h0M530.2 1008.1h0M530.5 1008.8h0M530.8 1008.6h0M531.1 1008.3h0M531.4 1008.7h0M531.7 1008.5h0M532.0 1009.0h0M532.3 1008.6h0M532.6 1008.4h0M532.9 1009.0h0M533.2 1008.9h0M533.5 1008.5h0M533.8 1008.8h0M534.2 1008.9h0M534.5 1008.7h0M534.8 1008.5h0M535.1 1008.4h0M535.4 1008.6h0M535.7 1007.9h0M536.0 1008.1h0M536.3 1008.0h0M536.6 1008.1h0M536.9 1008.7h0M537.2 1008.1h0M537.5 1008.5h0M537.9 1008.8h0M538.2 1008.7h0M538.5 1008.9h0M538.8 1008.5h0M539.1 1008.7h0M539.4 1008.3h0M539.7 1008.8h0M540.0 1008.7h0M540.3 1008.1h0M540.6 1008.5h0M540.9 1008.8h0M541.2 1008.5h0M541.6 1008.5h0M541.9 1008.7h0M542.2 1008.8h0M542.5 1008.9h0M542.8 1008.9h0M543.1 1008.9h0M543.4 1008.7h0M543.7 1008.0h0M544.0 1008.8h0M544.3 1008.6h0M544.6 1008.8h0M544.9 1008.5h0M545.3 1008.8h0M545.6 1009.0h0M545.9 1008.5h0M546.2 1008.5h0M546.5 1008.0h0M546.8 1008.5h0M547.1 1008.9h0M547.4 1008.2h0M547.7 1008.7h0M548.0 1008.7h0M548.3 1008.9h0M548.6 1008.4h0M549.0 1008.5h0M549.3 1009.0h0M549.6 1009.0h0M549.9 1008.1h0M550.2 1008.7h0M550.5 1008.8h0M550.8 1008.5h0M551.1 1008.2h0M551.4 1008.8h0M551.7 1008.7h0M552.0 1008.7h0M552.3 1008.5h0M552.7 1009.0h0M553.0 1008.7h0M553.3 1008.6h0M553.6 1008.5h0M553.9 1008.5h0M554.2 1008.5h0M554.5 1008.8h0M554.8 1008.8h0M555.1 1008.6h0M555.4 1008.8h0M555.7 1008.6h0M556.0 1008.9h0M556.4 1008.9h0M556.7 1008.9h0M557.0 1008.7h0M557.3 1008.8h0M557.6 1008.9h0M557.9 1008.6h0M558.2 1008.6h0M558.5 1008.7h0M558.8 1008.8h0M559.1 1008.0h0M559.4 1009.0h0M559.7 1008.9h0M560.1 1008.9h0M560.4 1008.7h0M560.7 1008.9h0M561.0 1008.8h0M561.3 1008.7h0M561.6 1008.4h0M561.9 1008.2h0M562.2 1008.6h0M562.5 1009.0h0M562.8 1008.7h0M563.1 1008.6h0M563.4 1008.3h0M563.7 1007.8h0M564.1 1009.0h0M564.4 1008.6h0M564.7 1008.7h0M565.0 1008.7h0M565.3 1008.6h0M565.6 1008.8h0M565.9 1008.5h0M566.2 1008.2h0M566.5 1008.5h0M566.8 1008.4h0M567.1 1008.6h0M567.4 1009.0h0M567.8 1008.1h0M568.1 1008.5h0M568.4 1008.5h0M568.7 1008.9h0M569.0 1008.9h0M569.3 1008.4h0M569.6 1009.0h0M569.9 1008.9h0M570.2 1008.9h0M570.5 1008.9h0M570.8 1008.4h0M571.1 1008.8h0M571.5 1008.4h0M571.8 1008.2h0M572.1 1008.8h0M572.4 1008.7h0M572.7 1008.5h0M573.0 1008.9h0M573.3 1008.4h0M573.6 1008.5h0M573.9 1008.8h0M574.2 1008.7h0M574.5 1008.7h0M574.8 1008.9h0M575.2 1008.9h0M575.5 1008.0h0M575.8 1007.8h0M576.1 1008.8h0M576.4 1008.5h0M576.7 1009.0h0M577.0 1008.8h0M577.3 1008.8h0M577.6 1008.9h0M577.9 1008.9h0M578.2 1008.7h0M578.5 1009.0h0M578.9 1008.6h0M579.2 1008.5h0M579.5 1008.7h0M579.8 1008.9h0M580.1 1008.9h0M580.4 1008.2h0M580.7 1008.9h0M581.0 1008.6h0M581.3 1008.7h0M581.6 1008.9h0M581.9 1008.9h0M582.2 1008.9h0M582.6 1009.0h0M582.9 1008.5h0M583.2 1008.8h0M583.5 1008.6h0M583.8 1009.0h0M584.1 1008.8h0M584.4 1008.9h0M584.7 1008.2h0M585.0 1008.2h0M585.3 1007.7h0M585.6 1008.9h0M585.9 1008.6h0M586.3 1008.4h0M586.6 1008.6h0M586.9 1008.7h0M587.2 1008.9h0M587.5 1008.2h0M587.8 1008.9h0M588.1 1008.3h0M588.4 1008.2h0M588.7 1008.9h0M589.0 1008.6h0M589.3 1008.7h0M589.6 1008.7h0M590.0 1008.5h0M590.3 1008.5h0M590.6 1008.6h0M590.9 1008.7h0M591.2 1008.3h0M591.5 1008.9h0M591.8 1008.9h0M592.1 1008.7h0M592.4 1008.8h0M592.7 1008.7h0M593.0 1008.5h0M593.3 1008.9h0M593.6 1008.9h0M594.0 1007.3h0M594.3 1008.8h0M594.6 1009.0h0M594.9 1008.7h0M595.2 1008.9h0M595.5 1008.5h0M595.8 1008.6h0M596.1 1008.5h0M596.4 1008.8h0M596.7 1008.3h0M597.0 1008.5h0M597.3 1008.9h0M597.7 1008.3h0M598.0 1008.0h0M598.3 1008.8h0M598.6 1008.9h0M598.9 1008.8h0M599.2 1008.8h0M599.5 1008.0h0M599.8 1008.6h0M600.1 1009.0h0M600.4 1008.9h0M600.7 1008.8h0M601.0 1008.9h0M601.4 1008.8h0M601.7 1009.0h0M602.0 1008.8h0M602.3 1008.7h0M602.6 1008.9h0M602.9 1008.4h0M603.2 1007.6h0M603.5 1008.9h0M603.8 1008.8h0M604.1 1008.4h0M604.4 1009.0h0M604.7 1008.7h0M605.1 1008.2h0M605.4 1008.8h0M605.7 1008.7h0M606.0 1008.1h0M606.3 1008.6h0M606.6 1008.2h0M606.9 1008.8h0M607.2 1009.0h0M607.5 1007.6h0M607.8 1008.9h0M608.1 1008.2h0M608.4 1008.5h0M608.8 1007.9h0M609.1 1008.1h0M609.4 1008.9h0M609.7 1008.9h0M610.0 1008.6h0M610.3 1008.9h0M610.6 1008.5h0M610.9 1008.8h0M611.2 1008.9h0M611.5 1008.9h0M611.8 1008.4h0M612.1 1008.7h0M612.5 1008.5h0M612.8 1008.9h0M613.1 1008.9h0M613.4 1008.4h0M613.7 1008.9h0M614.0 1008.6h0M614.3 1008.5h0M614.6 1008.6h0M614.9 1009.0h0M615.2 1008.7h0M615.5 1008.2h0M615.8 1009.0h0M616.2 1008.2h0M616.5 1008.9h0M616.8 1008.9h0M617.1 1008.4h0M617.4 1008.0h0M617.7 1008.7h0M618.0 1008.5h0M618.3 1008.9h0M618.6 1008.7h0M618.9 1008.8h0M619.2 1008.4h0M619.5 1008.8h0M619.9 1008.8h0M620.2 1008.8h0M620.5 1009.0h0M620.8 1008.7h0M621.1 1008.6h0M621.4 1008.8h0M621.7 1008.3h0M622.0 1008.6h0M622.3 1008.3h0M622.6 1008.6h0M622.9 1007.8h0M623.2 1009.0h0M623.6 1008.1h0M623.9 1008.9h0M624.2 1008.4h0M624.5 1008.8h0M624.8 1008.7h0M625.1 1008.9h0M625.4 1008.5h0M625.7 1008.3h0M626.0 1008.3h0M626.3 1008.5h0M626.6 1009.0h0M626.9 1008.0h0M627.2 1008.7h0M627.6 1008.2h0M627.9 1008.2h0M628.2 1008.7h0M628.5 1008.8h0M628.8 1008.2h0M629.1 1008.8h0M629.4 1008.8h0M629.7 1008.9h0M630.0 1009.0h0M630.3 1008.9h0M630.6 1008.6h0M630.9 1008.0h0M631.3 1008.1h0M631.6 1008.6h0M631.9 1008.9h0M632.2 1008.8h0M632.5 1008.9h0M632.8 1008.6h0M633.1 1008.7h0M633.4 1009.0h0M633.7 1008.8h0M634.0 1008.7h0M634.3 1008.7h0M634.6 1008.6h0M635.0 1008.7h0M635.3 1008.3h0M635.6 1008.4h0M635.9 1008.7h0M636.2 1008.2h0M636.5 1008.6h0M636.8 1008.8h0M637.1 1008.3h0M637.4 1008.8h0M637.7 1008.8h0M638.0 1008.2h0M638.3 1008.7h0M638.7 1008.4h0M639.0 1008.8h0M639.3 1007.8h0M639.6 1008.8h0M639.9 1008.8h0M640.2 1008.4h0M640.5 1008.1h0M640.8 1008.9h0M641.1 1008.5h0M641.4 1008.7h0M641.7 1008.6h0M642.0 1008.9h0M642.4 1008.7h0M642.7 1008.6h0M643.0 1008.7h0M643.3 1008.9h0M643.6 1008.9h0M643.9 1008.7h0M644.2 1008.3h0M644.5 1009.0h0M644.8 1008.4h0M645.1 1008.8h0M645.4 1008.7h0M645.7 1008.8h0M646.1 1008.4h0M646.4 1008.8h0M646.7 1009.0h0M647.0 1008.8h0M647.3 1008.2h0M647.6 1008.4h0M647.9 1008.7h0M648.2 1008.6h0M648.5 1009.0h0M648.8 1008.5h0M649.1 1008.7h0M649.4 1008.4h0M649.8 1008.4h0M650.1 1008.7h0M650.4 1008.5h0M650.7 1008.7h0M651.0 1009.0h0M651.3 1008.3h0M651.6 1008.2h0M651.9 1008.8h0M652.2 1008.2h0M652.5 1008.1h0M652.8 1008.9h0M653.1 1008.3h0M653.5 1008.9h0M653.8 1008.5h0M654.1 1008.2h0M654.4 1008.6h0M654.7 1008.9h0M655.0 1008.4h0M655.3 1008.7h0M655.6 1008.3h0M655.9 1009.0h0M656.2 1008.5h0M656.5 1008.8h0M656.8 1008.9h0M657.1 1008.4h0M657.5 1008.7h0M657.8 1008.0h0M658.1 1008.9h0M658.4 1008.8h0M658.7 1008.5h0M659.0 1008.8h0M659.3 1008.8h0M659.6 1008.6h0M659.9 1008.7h0M660.2 1008.9h0M660.5 1008.3h0M660.8 1008.5h0M661.2 1007.8h0M661.5 1008.8h0M661.8 1008.6h0M662.1 1008.5h0M662.4 1008.9h0M662.7 1007.7h0M663.0 1008.9h0M663.3 1008.6h0M663.6 1008.9h0M663.9 1008.4h0M664.2 1009.0h0M664.5 1007.6h0M664.9 1008.7h0M665.2 1008.7h0M665.5 1008.6h0M665.8 1008.4h0M666.1 1008.7h0M666.4 1008.6h0M666.7 1008.2h0M667.0 1008.8h0M667.3 1007.6h0M667.6 1008.3h0M667.9 1008.4h0M668.2 1008.9h0M668.6 1008.9h0M668.9 1008.5h0M669.2 1008.4h0M669.5 1008.9h0M669.8 1008.5h0M670.1 1008.6h0M670.4 1008.6h0M670.7 1008.8h0M671.0 1009.0h0M671.3 1008.2h0M671.6 1007.6h0M671.9 1008.4h0M672.3 1008.8h0M672.6 1008.5h0M672.9 1008.3h0M673.2 1008.6h0M673.5 1008.9h0M673.8 1008.7h0M674.1 1008.7h0M674.4 1008.9h0M674.7 1008.9h0M675.0 1008.6h0M675.3 1009.0h0M675.6 1008.4h0M676.0 1008.9h0M676.3 1008.9h0M676.6 1008.8h0M676.9 1008.3h0M677.2 1008.6h0M677.5 1008.8h0M677.8 1008.5h0M678.1 1008.5h0M678.4 1008.5h0M678.7 1008.1h0M679.0 1008.8h0M679.3 1008.4h0M679.7 1008.6h0M680.0 1008.1h0M680.3 1008.5h0M680.6 1008.5h0M680.9 1008.6h0M681.2 1008.5h0M681.5 1008.6h0M681.8 1008.8h0M682.1 1008.5h0M682.4 1008.0h0M682.7 1008.7h0M683.0 1008.2h0M683.4 1008.5h0M683.7 1008.6h0M684.0 1008.3h0M684.3 1008.6h0M684.6 1008.6h0M684.9 1008.2h0M685.2 1008.7h0M685.5 1008.9h0M685.8 1008.9h0M686.1 1007.7h0M686.4 1009.0h0M686.7 1008.5h0M687.0 1009.0h0M687.4 1008.6h0M687.7 1009.0h0M688.0 1008.3h0M688.3 1007.6h0M688.6 1008.7h0M688.9 1008.6h0M689.2 1008.9h0M689.5 1008.6h0M689.8 1008.4h0M690.1 1008.6h0M690.4 1008.4h0M690.7 1008.5h0M691.1 1008.9h0M691.4 1007.9h0M691.7 1008.8h0M692.0 1008.2h0M692.3 1008.4h0M692.6 1008.9h0M692.9 1008.9h0M693.2 1008.7h0M693.5 1008.9h0M693.8 1008.7h0M694.1 1008.3h0M694.4 1008.8h0M694.8 1008.6h0M695.1 1008.8h0M695.4 1008.5h0M695.7 1008.4h0M696.0 1007.9h0M696.3 1008.7h0M696.6 1008.4h0M696.9 1008.9h0M697.2 1009.0h0M697.5 1009.0h0M697.8 1008.0h0M698.1 1008.7h0M698.5 1008.9h0M698.8 1009.0h0M699.1 1009.0h0M699.4 1008.5h0M699.7 1009.0h0M700.0 1009.0h0M700.3 1008.3h0M700.6 1008.5h0M700.9 1008.6h0M701.2 1008.0h0M701.5 1009.0h0M701.8 1008.4h0M702.2 1008.2h0M702.5 1009.0h0M702.8 1008.9h0M703.1 1008.5h0M703.4 1008.3h0M703.7 1008.3h0M704.0 1008.9h0M704.3 1008.9h0M704.6 1008.3h0M704.9 1008.9h0M705.2 1008.6h0M705.5 1008.9h0M705.9 1007.8h0M706.2 1008.6h0M706.5 1008.6h0M706.8 1008.9h0M707.1 1008.3h0M707.4 1007.9h0M707.7 1008.9h0M708.0 1008.8h0M708.3 1008.6h0M708.6 1008.8h0M708.9 1008.6h0M709.2 1008.9h0M709.6 1008.5h0M709.9 1008.5h0M710.2 1008.3h0M710.5 1008.2h0M710.8 1008.8h0M711.1 1008.8h0M711.4 1008.7h0M711.7 1008.5h0M712.0 1008.8h0M712.3 1008.7h0M712.6 1008.7h0M712.9 1008.6h0M713.3 1008.7h0M713.6 1008.1h0M713.9 1008.9h0M714.2 1008.7h0M714.5 1008.8h0M714.8 1008.8h0M715.1 1008.4h0M715.4 1008.4h0M715.7 1008.4h0M716.0 1007.9h0M716.3 1008.7h0M716.6 1008.7h0M717.0 1008.7h0M717.3 1009.0h0M717.6 1008.2h0M717.9 1007.7h0M718.2 1008.6h0M718.5 1008.8h0M718.8 1008.4h0M719.1 1008.9h0M719.4 1008.6h0M719.7 1008.6h0M720.0 1008.9h0M720.3 1008.8h0M720.6 1007.8h0M721.0 1008.1h0M721.3 1008.6h0M721.6 1008.5h0M721.9 1008.6h0M722.2 1008.9h0M722.5 1008.7h0M722.8 1009.0h0M723.1 1008.8h0M723.4 1008.8h0M723.7 1008.4h0M724.0 1008.7h0M724.3 1007.8h0M724.7 1008.7h0M725.0 1008.5h0M725.3 1008.9h0M725.6 1008.5h0M725.9 1008.4h0M726.2 1007.7h0M726.5 1008.8h0M726.8 1008.4h0M727.1 1008.6h0M727.4 1008.9h0M727.7 1008.6h0M728.0 1008.9h0M728.4 1008.7h0M728.7 1008.8h0M729.0 1007.8h0M729.3 1008.8h0M729.6 1008.5h0M729.9 1009.0h0M730.2 1008.9h0M730.5 1008.3h0M730.8 1008.9h0M731.1 1008.9h0M731.4 1008.9h0M731.7 1008.7h0M732.1 1008.7h0M732.4 1008.5h0M732.7 1008.8h0M733.0 1008.9h0M733.3 1008.3h0M733.6 1008.3h0M733.9 1008.6h0M734.2 1008.2h0M734.5 1008.6h0M734.8 1008.9h0M735.1 1008.5h0M735.4 1008.5h0M735.8 1008.7h0M736.1 1008.5h0M736.4 1008.4h0M736.7 1008.7h0M737.0 1008.6h0M737.3 1008.2h0M737.6 1009.0h0M737.9 1008.4h0M738.2 1008.6h0M738.5 1008.6h0M738.8 1008.8h0M739.1 1008.6h0M739.5 1008.8h0M739.8 1008.8h0M740.1 1008.7h0M740.4 1008.6h0M740.7 1008.7h0M741.0 1008.8h0M741.3 1008.7h0M741.6 1008.9h0M741.9 1009.0h0M742.2 1008.7h0M742.5 1008.9h0M742.8 1008.7h0M743.2 1008.3h0M743.5 1008.5h0M743.8 1008.6h0M744.1 1008.4h0M744.4 1008.3h0M744.7 1008.7h0M745.0 1008.8h0M745.3 1008.8h0M745.6 1008.8h0M745.9 1008.6h0M746.2 1008.7h0M746.5 1008.5h0M746.9 1008.6h0M747.2 1008.4h0M747.5 1008.7h0M747.8 1009.0h0M748.1 1008.1h0M748.4 1008.5h0M748.7 1008.6h0M749.0 1008.6h0M749.3 1008.6h0M749.6 1008.2h0M749.9 1008.4h0M750.2 1008.1h0M750.5 1009.0h0M750.9 1009.0h0M751.2 1008.8h0M751.5 1008.3h0M751.8 1008.0h0M752.1 1009.0h0M752.4 1008.6h0M752.7 1008.7h0M753.0 1008.5h0M753.3 1008.3h0M753.6 1008.3h0M753.9 1008.9h0M754.2 1008.3h0M754.6 1008.2h0M754.9 1008.7h0M755.2 1008.9h0M755.5 1008.2h0M755.8 1008.7h0M756.1 1008.5h0M756.4 1008.3h0M756.7 1008.7h0M757.0 1008.4h0M757.3 1008.2h0M757.6 1008.8h0M757.9 1008.8h0M758.3 1008.7h0M758.6 1008.2h0M758.9 1008.5h0M759.2 1008.8h0M759.5 1008.7h0M759.8 1008.7h0M760.1 1008.8h0M760.4 1008.2h0M760.7 1008.8h0M761.0 1008.4h0M761.3 1008.7h0M761.6 1008.9h0M762.0 1009.0h0M762.3 1008.8h0M762.6 1009.0h0M762.9 1008.7h0M763.2 1008.0h0M763.5 1008.5h0M763.8 1008.4h0M764.1 1008.0h0M764.4 1008.8h0M764.7 1008.9h0M765.0 1009.0h0M765.3 1008.7h0M765.7 1008.7h0M766.0 1008.9h0M766.3 1009.0h0M766.6 1008.9h0M766.9 1008.2h0M767.2 1008.8h0M767.5 1008.5h0M767.8 1008.5h0M768.1 1008.8h0M768.4 1008.9h0M768.7 1008.6h0M769.0 1008.7h0M769.4 1008.8h0M769.7 1008.8h0M770.0 1008.9h0M770.3 1008.4h0M770.6 1008.9h0M770.9 1008.9h0M771.2 1009.0h0M771.5 1008.4h0M771.8 1008.7h0M772.1 1008.8h0M772.4 1008.4h0M772.7 1008.1h0M773.1 1008.4h0M773.4 1008.7h0M773.7 1008.5h0M774.0 1008.3h0M774.3 1007.4h0M774.6 1008.9h0M774.9 1008.8h0M775.2 1008.8h0M775.5 1008.8h0M775.8 1008.3h0M776.1 1009.0h0M776.4 1008.9h0M776.8 1008.2h0M777.1 1008.8h0M777.4 1008.8h0M777.7 1008.4h0M778.0 1008.4h0M778.3 1008.3h0M778.6 1008.0h0M778.9 1008.4h0M779.2 1008.8h0M779.5 1008.2h0M779.8 1008.4h0M780.1 1008.4h0M780.4 1008.9h0M780.8 1008.5h0M781.1 1007.9h0M781.4 1008.9h0M781.7 1008.9h0M782.0 1008.7h0M782.3 1008.0h0M782.6 1008.7h0M782.9 1008.2h0M783.2 1008.9h0M783.5 1008.7h0M783.8 1008.4h0M784.1 1008.9h0M784.5 1008.8h0M784.8 1008.3h0M785.1 1008.8h0M785.4 1008.7h0M785.7 1007.7h0M786.0 1008.8h0M786.3 1008.7h0M786.6 1008.8h0M786.9 1008.2h0M787.2 1008.5h0M787.5 1008.1h0M787.8 1008.6h0M788.2 1008.9h0M788.5 1009.0h0M788.8 1008.6h0M789.1 1008.9h0M789.4 1008.6h0M789.7 1008.9h0M790.0 1008.4h0M790.3 1008.9h0M790.6 1008.6h0M790.9 1008.8h0M791.2 1008.9h0M791.5 1008.9h0M791.9 1008.7h0M792.2 1008.3h0M792.5 1008.5h0M792.8 1008.9h0M793.1 1008.9h0M793.4 1008.4h0M793.7 1008.6h0M794.0 1008.8h0M794.3 1008.7h0M794.6 1008.5h0M794.9 1008.9h0M795.2 1008.7h0M795.6 1008.3h0M795.9 1008.7h0M796.2 1008.4h0M796.5 1008.6h0M796.8 1008.8h0M797.1 1009.0h0M797.4 1008.6h0M797.7 1008.7h0M798.0 1008.7h0M798.3 1008.7h0M798.6 1008.6h0M798.9 1008.6h0M799.3 1008.7h0M799.6 1008.5h0M799.9 1008.6h0M800.2 1008.3h0M800.5 1008.8h0M800.8 1008.4h0M801.1 1008.7h0M801.4 1008.2h0M801.7 1008.9h0M802.0 1008.0h0M802.3 1008.5h0M802.6 1008.1h0M803.0 1008.3h0M803.3 1008.5h0M803.6 1008.7h0M803.9 1008.8h0M804.2 1007.9h0M804.5 1008.7h0M804.8 1008.7h0M805.1 1008.7h0M805.4 1008.5h0M805.7 1008.6h0M806.0 1008.0h0M806.3 1008.5h0M806.7 1008.6h0M807.0 1007.9h0M807.3 1009.0h0M807.6 1008.8h0M807.9 1008.6h0M808.2 1008.6h0M808.5 1008.6h0M808.8 1008.9h0M809.1 1008.4h0M809.4 1008.9h0M809.7 1008.3h0M810.0 1008.4h0M810.3 1008.9h0M810.7 1008.7h0M811.0 1008.6h0M811.3 1008.4h0M811.6 1008.5h0M811.9 1008.9h0M812.2 1008.0h0M812.5 1008.5h0M812.8 1008.1h0M813.1 1008.5h0M813.4 1008.7h0M813.7 1008.6h0M814.0 1009.0h0M814.4 1008.9h0M814.7 1008.3h0M815.0 1008.8h0M815.3 1008.9h0M815.6 1008.7h0M815.9 1008.5h0M816.2 1008.5h0M816.5 1008.7h0M816.8 1008.9h0M817.1 1008.0h0M817.4 1008.4h0M817.7 1008.4h0M818.1 1008.4h0M818.4 1008.5h0M818.7 1008.5h0M819.0 1007.8h0M819.3 1008.6h0M819.6 1008.7h0M819.9 1008.7h0M820.2 1008.5h0M820.5 1008.4h0M820.8 1008.9h0M821.1 1008.5h0M821.4 1008.9h0M821.8 1008.9h0M822.1 1009.0h0M822.4 1008.5h0M822.7 1008.7h0M823.0 1008.5h0M823.3 1009.0h0M823.6 1008.9h0M823.9 1008.9h0M824.2 1008.1h0M824.5 1008.7h0M824.8 1008.1h0M825.1 1008.0h0M825.5 1008.6h0M825.8 1008.3h0M826.1 1008.8h0M826.4 1008.6h0M826.7 1008.3h0M827.0 1008.3h0M827.3 1009.0h0M827.6 1008.7h0M827.9 1008.7h0M828.2 1008.9h0M828.5 1008.6h0M828.8 1008.5h0M829.2 1008.6h0M829.5 1009.0h0M829.8 1008.8h0M830.1 1009.0h0M830.4 1008.4h0M830.7 1008.9h0M831.0 1008.9h0M831.3 1008.7h0M831.6 1008.9h0M831.9 1008.8h0M832.2 1008.9h0M832.5 1008.5h0M832.9 1008.7h0M833.2 1008.9h0M833.5 1008.8h0M833.8 1008.3h0M834.1 1009.0h0M834.4 1008.4h0M834.7 1008.9h0M835.0 1008.1h0M835.3 1008.7h0M835.6 1008.7h0M835.9 1008.9h0M836.2 1008.8h0M836.6 1008.6h0M836.9 1008.4h0M837.2 1008.5h0M837.5 1008.4h0M837.8 1008.6h0M838.1 1008.4h0M838.4 1008.8h0M838.7 1008.6h0M839.0 1008.9h0M839.3 1008.5h0M839.6 1008.2h0M839.9 1008.9h0M840.3 1008.6h0M840.6 1008.8h0M840.9 1008.4h0M841.2 1008.7h0M841.5 1008.8h0M841.8 1008.5h0M842.1 1008.6h0M842.4 1008.8h0M842.7 1008.9h0M843.0 1008.7h0M843.3 1008.1h0M843.6 1008.6h0M843.9 1008.9h0M844.3 1008.3h0M844.6 1008.5h0M844.9 1008.4h0M845.2 1008.7h0M845.5 1007.5h0M845.8 1008.7h0M846.1 1008.8h0M846.4 1008.7h0M846.7 1008.8h0M847.0 1008.0h0M847.3 1008.3h0M847.6 1008.7h0M848.0 1009.0h0M848.3 1008.3h0M848.6 1008.7h0M848.9 1008.7h0M849.2 1008.8h0M849.5 1008.8h0M849.8 1008.4h0M850.1 1008.5h0M850.4 1008.9h0M850.7 1008.7h0M851.0 1008.4h0M851.3 1008.9h0M851.7 1008.1h0M852.0 1008.2h0M852.3 1008.6h0M852.6 1008.6h0M852.9 1008.2h0M853.2 1008.3h0M853.5 1007.9h0M853.8 1009.0h0M854.1 1008.9h0M854.4 1008.5h0M854.7 1009.0h0M855.0 1008.2h0M855.4 1008.9h0M855.7 1008.9h0M856.0 1008.4h0M856.3 1008.8h0M856.6 1008.6h0M856.9 1008.7h0M857.2 1009.0h0M857.5 1008.8h0M857.8 1008.9h0M858.1 1008.8h0M858.4 1008.4h0M858.7 1008.9h0M859.1 1008.6h0M859.4 1008.4h0M859.7 1008.3h0M860.0 1008.6h0M860.3 1008.7h0M860.6 1008.5h0M860.9 1008.1h0M861.2 1009.0h0M861.5 1008.5h0M861.8 1008.9h0M862.1 1008.7h0M862.4 1008.8h0M862.8 1008.6h0M863.1 1008.9h0M863.4 1008.7h0M863.7 1009.0h0M864.0 1008.8h0M864.3 1008.5h0M864.6 1008.1h0M864.9 1008.7h0M865.2 1008.8h0M865.5 1008.7h0M865.8 1008.9h0M866.1 1008.8h0M866.5 1008.0h0M866.8 1008.2h0M867.1 1008.8h0M867.4 1008.9h0M867.7 1009.0h0M868.0 1008.5h0M868.3 1008.6h0M868.6 1008.8h0M868.9 1008.5h0M869.2 1007.7h0M869.5 1008.6h0M869.8 1008.9h0M870.2 1008.6h0M870.5 1008.5h0M870.8 1009.0h0M871.1 1008.1h0M871.4 1008.8h0M871.7 1008.6h0M872.0 1008.6h0M872.3 1008.1h0M872.6 1008.8h0M872.9 1008.8h0M873.2 1008.4h0M873.5 1008.4h0M873.8 1008.5h0M874.2 1008.5h0M874.5 1008.8h0M874.8 1008.3h0M875.1 1009.0h0M875.4 1008.7h0M875.7 1008.5h0M876.0 1008.6h0M876.3 1008.7h0M876.6 1008.6h0M876.9 1008.8h0M877.2 1008.5h0M877.5 1008.6h0M877.9 1008.1h0M878.2 1008.8h0M878.5 1009.0h0M878.8 1008.5h0M879.1 1007.9h0M879.4 1008.4h0M879.7 1008.7h0M880.0 1008.8h0M880.3 1008.3h0M880.6 1007.9h0M880.9 1008.1h0M881.2 1008.9h0M881.6 1008.2h0M881.9 1008.7h0M882.2 1007.9h0M882.5 1008.8h0M882.8 1009.0h0M883.1 1008.6h0M883.4 1008.7h0M883.7 1008.7h0M884.0 1008.7h0M884.3 1008.5h0M884.6 1008.0h0M884.9 1008.7h0M885.3 1008.2h0M885.6 1008.4h0M885.9 1008.4h0M886.2 1008.9h0M886.5 1008.7h0M886.8 1009.0h0M887.1 1008.6h0M887.4 1008.8h0M887.7 1009.0h0M888.0 1008.7h0M888.3 1009.0h0M888.6 1008.6h0M889.0 1008.5h0M889.3 1008.7h0M889.6 1008.4h0M889.9 1008.9h0M890.2 1009.0h0M890.5 1008.6h0M890.8 1008.4h0M891.1 1008.5h0M891.4 1008.7h0M891.7 1008.6h0M892.0 1008.7h0M892.3 1008.6h0M892.7 1008.5h0M893.0 1008.7h0M893.3 1008.5h0M893.6 1008.5h0M893.9 1007.8h0M894.2 1008.9h0M894.5 1008.7h0M894.8 1008.7h0M895.1 1008.9h0M895.4 1007.9h0M895.7 1008.0h0M896.0 1008.7h0M896.4 1007.8h0M896.7 1008.6h0M897.0 1009.0h0M897.3 1008.2h0M897.6 1008.2h0M897.9 1008.7h0M898.2 1008.4h0M898.5 1008.2h0M898.8 1008.0h0M899.1 1008.7h0M899.4 1008.8h0M899.7 1008.7h0M900.1 1008.4h0M900.4 1008.5h0M900.7 1008.3h0M901.0 1008.7h0M901.3 1008.4h0M901.6 1008.9h0M901.9 1008.0h0M902.2 1008.7h0M902.5 1008.9h0M902.8 1008.9h0M903.1 1009.0h0M903.4 1008.9h0M903.7 1008.8h0M904.1 1009.0h0M904.4 1008.3h0M904.7 1008.6h0M905.0 1008.4h0M905.3 1008.3h0M905.6 1009.0h0M905.9 1008.9h0M906.2 1008.6h0M906.5 1008.6h0M906.8 1008.9h0M907.1 1008.6h0M907.4 1008.5h0M907.8 1008.5h0M908.1 1008.8h0M908.4 1008.8h0M908.7 1007.8h0M909.0 1008.9h0M909.3 1008.7h0M909.6 1009.0h0M909.9 1009.0h0M910.2 1008.5h0M910.5 1008.7h0M910.8 1008.9h0M911.1 1008.5h0M911.5 1008.9h0M911.8 1008.1h0M912.1 1008.9h0M912.4 1009.0h0M912.7 1008.6h0M913.0 1008.7h0M913.3 1008.8h0M913.6 1008.6h0M913.9 1008.9h0M914.2 1008.6h0M914.5 1008.6h0M914.8 1008.8h0M915.2 1008.9h0M915.5 1008.4h0M915.8 1008.7h0M916.1 1008.6h0M916.4 1008.4h0M916.7 1008.5h0M917.0 1008.4h0M917.3 1008.8h0M917.6 1008.9h0M917.9 1008.7h0M918.2 1008.6h0M918.5 1008.8h0M918.9 1008.8h0M919.2 1008.8h0M919.5 1008.6h0M919.8 1008.5h0M920.1 1008.6h0M920.4 1008.7h0M920.7 1008.7h0M921.0 1008.9h0M921.3 1008.6h0M921.6 1009.0h0M921.9 1008.5h0M922.2 1009.0h0M922.6 1008.9h0M922.9 1008.6h0M923.2 1007.9h0M923.5 1008.8h0M923.8 1008.1h0M924.1 1008.6h0M924.4 1008.6h0M924.7 1008.8h0M925.0 1008.5h0M925.3 1008.0h0M925.6 1008.1h0M925.9 1008.9h0M926.3 1008.6h0M926.6 1008.9h0M926.9 1008.9h0M927.2 1008.5h0M927.5 1008.8h0M927.8 1008.3h0M928.1 1008.3h0M928.4 1008.6h0M928.7 1008.9h0M929.0 1008.7h0M929.3 1008.1h0M929.6 1008.2h0M930.0 1008.7h0M930.3 1008.8h0M930.6 1008.6h0M930.9 1008.9h0M931.2 1008.7h0M931.5 1008.7h0M931.8 1007.9h0M932.1 1008.4h0M932.4 1008.5h0M932.7 1008.5h0M933.0 1008.7h0M933.3 1008.9h0M933.6 1008.7h0M934.0 1008.1h0M934.3 1009.0h0M934.6 1009.0h0M934.9 1008.9h0M935.2 1008.9h0M935.5 1009.0h0M935.8 1008.8h0M936.1 1008.8h0M936.4 1008.7h0M936.7 1008.3h0M937.0 1009.0h0M937.3 1008.7h0M937.7 1008.7h0M938.0 1008.3h0M938.3 1008.5h0M938.6 1008.8h0M938.9 1009.0h0M939.2 1009.0h0M939.5 1008.8h0M939.8 1008.7h0M940.1 1008.7h0M940.4 1008.9h0M940.7 1008.7h0M941.0 1008.9h0M941.4 1008.9h0M941.7 1008.8h0M942.0 1008.6h0M942.3 1008.5h0M942.6 1008.7h0M942.9 1008.3h0M943.2 1008.4h0M943.5 1007.7h0M943.8 1009.0h0M944.1 1008.6h0M944.4 1008.9h0M944.7 1008.7h0M945.1 1009.0h0M945.4 1008.5h0M945.7 1008.9h0M946.0 1008.9h0M946.3 1008.4h0M946.6 1008.6h0M946.9 1008.9h0M947.2 1009.0h0M947.5 1008.8h0M947.8 1008.9h0M948.1 1009.0h0M948.4 1008.4h0M948.8 1008.5h0M949.1 1008.0h0M949.4 1008.8h0M949.7 1007.9h0M950.0 1008.9h0M950.3 1008.4h0M950.6 1008.3h0M950.9 1008.4h0M951.2 1008.8h0M951.5 1008.4h0M951.8 1008.9h0M952.1 1008.3h0M952.5 1008.7h0M952.8 1008.3h0M953.1 1008.9h0M953.4 1007.7h0M953.7 1008.7h0M954.0 1008.6h0M954.3 1008.4h0M954.6 1008.6h0M954.9 1008.7h0M955.2 1008.6h0M955.5 1008.9h0M955.8 1008.8h0M956.2 1008.2h0M956.5 1008.7h0M956.8 1008.7h0M957.1 1008.6h0M957.4 1008.3h0M957.7 1008.7h0M958.0 1009.0h0M958.3 1008.8h0M958.6 1008.4h0M958.9 1008.8h0M959.2 1008.4h0M959.5 1008.0h0M959.9 1009.0h0M960.2 1008.6h0M960.5 1008.8h0M960.8 1008.8h0M961.1 1008.6h0M961.4 1008.8h0M961.7 1008.9h0M962.0 1008.4h0M962.3 1008.4h0M962.6 1008.4h0M962.9 1009.0h0M963.2 1008.3h0M963.6 1008.8h0M963.9 1008.6h0M964.2 1009.0h0M964.5 1008.8h0M964.8 1008.7h0M965.1 1008.9h0M965.4 1008.9h0M965.7 1008.5h0M966.0 1008.6h0M966.3 1008.9h0M966.6 1008.1h0M966.9 1008.4h0M967.2 1008.9h0M967.6 1008.4h0M967.9 1008.7h0M968.2 1008.1h0M968.5 1008.7h0M968.8 1008.7h0M969.1 1008.9h0M969.4 1008.3h0M969.7 1008.4h0M970.0 1008.8h0M970.3 1009.0h0M970.6 1008.8h0M970.9 1008.5h0M971.3 1008.6h0M971.6 1008.7h0M971.9 1008.9h0M972.2 1008.3h0M972.5 1008.4h0M972.8 1007.8h0M973.1 1008.4h0M973.4 1008.8h0M973.7 1008.3h0M974.0 1008.5h0M974.3 1008.3h0M974.6 1008.0h0M975.0 1008.4h0M975.3 1008.1h0M975.6 1009.0h0M975.9 1008.8h0M976.2 1008.8h0M976.5 1008.5h0M976.8 1008.7h0M977.1 1008.8h0M977.4 1008.5h0M977.7 1008.6h0M978.0 1008.5h0M978.3 1008.1h0M978.7 1008.2h0M979.0 1008.2h0M979.3 1007.8h0M979.6 1008.6h0M979.9 1008.8h0M980.2 1008.6h0M980.5 1008.4h0M980.8 1007.9h0M981.1 1008.5h0M981.4 1009.0h0M981.7 1009.0h0M982.0 1008.2h0M982.4 1008.8h0M982.7 1007.9h0M983.0 1008.8h0M983.3 1008.5h0M983.6 1008.5h0M983.9 1008.4h0M984.2 1008.9h0M984.5 1008.9h0M984.8 1008.7h0M985.1 1009.0h0M985.4 1008.6h0M985.7 1009.0h0M986.1 1008.9h0M986.4 1008.5h0M986.7 1008.5h0M987.0 1008.5h0M987.3 1008.4h0M987.6 1009.0h0M987.9 1009.0h0M988.2 1008.8h0M988.5 1008.8h0M988.8 1008.2h0M989.1 1008.8h0M989.4 1008.8h0M989.8 1008.4h0M990.1 1008.5h0M990.4 1008.2h0M990.7 1008.9h0M991.0 1008.3h0M991.3 1008.7h0M991.6 1008.9h0M991.9 1008.7h0M992.2 1008.5h0M992.5 1008.5h0M992.8 1009.0h0M993.1 1008.8h0M993.5 1008.1h0M993.8 1009.0h0M994.1 1008.8h0M994.4 1008.1h0M994.7 1008.8h0M995.0 1009.0h0M995.3 1008.9h0M995.6 1008.8h0M995.9 1008.8h0M996.2 1008.6h0M996.5 1008.5h0M996.8 1008.4h0M997.1 1009.0h0M997.5 1008.3h0M997.8 1008.1h0M998.1 1008.7h0M998.4 1008.8h0M998.7 1008.6h0M999.0 1008.8h0M999.3 1008.6h0M999.6 1008.9h0M999.9 1008.4h0M1000.2 1009.0h0M1000.5 1008.7h0M1000.8 1008.2h0M1001.2 1008.9h0M1001.5 1008.5h0M1001.8 1008.6h0M1002.1 1008.7h0M1002.4 1008.7h0M1002.7 1008.6h0M1003.0 1008.0h0M1003.3 1008.7h0M1003.6 1008.9h0M1003.9 1009.0h0M1004.2 1008.6h0M1004.5 1008.9h0M1004.9 1008.0h0M1005.2 1008.8h0M1005.5 1008.8h0M1005.8 1008.5h0M1006.1 1008.4h0M1006.4 1008.4h0M1006.7 1009.0h0M1007.0 1007.7h0M1007.3 1007.8h0M1007.6 1008.7h0M1007.9 1008.7h0M1008.2 1008.8h0M1008.6 1008.7h0M1008.9 1008.6h0M1009.2 1008.4h0M1009.5 1008.3h0M1009.8 1008.7h0M1010.1 1008.8h0M1010.4 1008.9h0M1010.7 1008.9h0M1011.0 1008.9h0M1011.3 1008.9h0M1011.6 1008.7h0M1011.9 1008.2h0M1012.3 1008.1h0M1012.6 1008.9h0M1012.9 1008.9h0M1013.2 1008.9h0M1013.5 1008.3h0M1013.8 1008.3h0M1014.1 1009.0h0M1014.4 1008.7h0M1014.7 1008.6h0M1015.0 1008.7h0M1015.3 1008.6h0M1015.6 1009.0h0M1016.0 1008.8h0M1016.3 1008.5h0M1016.6 1008.2h0M1016.9 1007.9h0M1017.2 1008.0h0M1017.5 1009.0h0M1017.8 1008.6h0M1018.1 1009.0h0M1018.4 1008.7h0M1018.7 1008.4h0M1019.0 1008.1h0M1019.3 1008.9h0M1019.7 1008.5h0M1020.0 1009.0h0M1020.3 1008.8h0M1020.6 1009.0h0M1020.9 1008.9h0M1021.2 1008.2h0M1021.5 1008.8h0M1021.8 1008.9h0M1022.1 1008.9h0M1022.4 1008.3h0M1022.7 1008.3h0M1023.0 1008.7h0M1023.4 1008.8h0M1023.7 1008.9h0M1024.0 1008.8h0M1024.3 1008.6h0M1024.6 1008.1h0M1024.9 1008.7h0M1025.2 1008.0h0M1025.5 1008.4h0M1025.8 1008.1h0M1026.1 1008.9h0M1026.4 1009.0h0M1026.7 1008.9h0M1027.0 1008.5h0M1027.4 1008.7h0M1027.7 1008.8h0M1028.0 1008.3h0M1028.3 1008.4h0M1028.6 1008.5h0M1028.9 1008.8h0M1029.2 1008.8h0M1029.5 1008.5h0M1029.8 1008.7h0M1030.1 1008.7h0M1030.4 1008.2h0M1030.7 1008.7h0M1031.1 1008.6h0M1031.4 1008.8h0M1031.7 1008.6h0M1032.0 1008.6h0M1032.3 1008.5h0M1032.6 1008.8h0M1032.9 1008.8h0M1033.2 1008.8h0M1033.5 1008.6h0M1033.8 1008.4h0M1034.1 1008.7h0M1034.4 1009.0h0M1034.8 1008.2h0M1035.1 1008.9h0M1035.4 1009.0h0M1035.7 1009.0h0M1036.0 1008.8h0M1036.3 1008.7h0M1036.6 1008.5h0M1036.9 1007.6h0M1037.2 1008.6h0M1037.5 1008.0h0M1037.8 1008.8h0M1038.1 1008.8h0M1038.5 1008.6h0M1038.8 1008.5h0M1039.1 1008.8h0M1039.4 1008.6h0M1039.7 1008.6h0M1040.0 1008.4h0M1040.3 1008.5h0M1040.6 1008.8h0M1040.9 1008.9h0M1041.2 1009.0h0M1041.5 1008.5h0M1041.8 1008.6h0M1042.2 1008.9h0M1042.5 1008.1h0M1042.8 1008.7h0M1043.1 1008.4h0M1043.4 1008.3h0M1043.7 1008.4h0M1044.0 1008.4h0M1044.3 1008.8h0M1044.6 1008.8h0M1044.9 1009.0h0M1045.2 1009.0h0M1045.5 1008.6h0M1045.9 1008.6h0M1046.2 1008.6h0M1046.5 1008.8h0M1046.8 1008.9h0M1047.1 1008.6h0M1047.4 1009.0h0M1047.7 1008.5h0M1048.0 1008.4h0M1048.3 1008.5h0M1048.6 1008.6h0M1048.9 1008.8h0M1049.2 1008.2h0M1049.6 1009.0h0M1049.9 1008.7h0M1050.2 1008.7h0M1050.5 1008.9h0M1050.8 1008.9h0M1051.1 1008.2h0M1051.4 1008.5h0M1051.7 1008.1h0M1052.0 1008.7h0M1052.3 1007.9h0M1052.6 1008.5h0M1052.9 1008.7h0M1053.3 1008.5h0M1053.6 1008.3h0M1053.9 1008.9h0M1054.2 1008.7h0M1054.5 1008.8h0M1054.8 1008.6h0M1055.1 1008.3h0M1055.4 1008.3h0M1055.7 1009.0h0M1056.0 1008.9h0M1056.3 1008.4h0M1056.6 1008.7h0M1056.9 1008.9h0M1057.3 1008.4h0M1057.6 1008.2h0M1057.9 1008.6h0M1058.2 1008.9h0M1058.5 1008.9h0M1058.8 1008.2h0M1059.1 1008.8h0M1059.4 1008.6h0M1059.7 1008.3h0M1060.0 1008.8h0M1060.3 1008.8h0M1060.6 1008.7h0M1061.0 1008.3h0M1061.3 1009.0h0M1061.6 1009.0h0M1061.9 1009.0h0M1062.2 1008.4h0M1062.5 1008.2h0M1062.8 1008.0h0M1063.1 1008.9h0M1063.4 1009.0h0M1063.7 1008.9h0M1064.0 1008.8h0M1064.3 1008.9h0M1064.7 1008.6h0M1065.0 1008.8h0M1065.3 1009.0h0M1065.6 1008.4h0M1065.9 1008.2h0M1066.2 1008.5h0M1066.5 1008.6h0M1066.8 1008.8h0M1067.1 1007.9h0M1067.4 1008.9h0M1067.7 1008.5h0M1068.0 1008.8h0M1068.4 1008.3h0M1068.7 1008.7h0M1069.0 1008.4h0M1069.3 1007.8h0M1069.6 1009.0h0M1069.9 1008.8h0M1070.2 1008.9h0M1070.5 1008.6h0M1070.8 1009.0h0M1071.1 1009.0h0M1071.4 1008.5h0M1071.7 1008.0h0M1072.1 1007.9h0M1072.4 1008.8h0M1072.7 1008.7h0M1073.0 1008.6h0M1073.3 1008.6h0M1073.6 1008.6h0M1073.9 1008.8h0M1074.2 1008.1h0M1074.5 1009.0h0M1074.8 1008.9h0M1075.1 1008.6h0M1075.4 1008.8h0M1075.8 1008.0h0M1076.1 1009.0h0M1076.4 1008.4h0M1076.7 1008.8h0M1077.0 1008.9h0M1077.3 1008.9h0M1077.6 1008.9h0M1077.9 1008.5h0M1078.2 1008.1h0M1078.5 1008.0h0M1078.8 1008.7h0M1079.1 1008.0h0M1079.5 1008.1h0M1079.8 1008.8h0M1080.1 1008.5h0M1080.4 1009.0h0M1080.7 1008.7h0M1081.0 1008.5h0M1081.3 1008.9h0M1081.6 1007.8h0M1081.9 1008.7h0M1082.2 1009.0h0M1082.5 1009.0h0M1082.8 1008.9h0M1083.2 1008.7h0M1083.5 1008.2h0M1083.8 1008.4h0M1084.1 1008.8h0M1084.4 1008.9h0M1084.7 1008.7h0M1085.0 1008.0h0M1085.3 1008.1h0M1085.6 1008.5h0M1085.9 1009.0h0M1086.2 1008.9h0M1086.5 1008.8h0M1086.9 1008.8h0M1087.2 1008.0h0M1087.5 1008.3h0M1087.8 1008.1h0M1088.1 1008.6h0M1088.4 1008.4h0M1088.7 1008.2h0M1089.0 1008.8h0M1089.3 1008.3h0M1089.6 1008.9h0M1089.9 1008.4h0M1090.2 1008.9h0M1090.5 1008.6h0M1090.9 1008.5h0M1091.2 1008.8h0M1091.5 1008.8h0M1091.8 1008.7h0M1092.1 1008.7h0M1092.4 1008.7h0M1092.7 1008.6h0M1093.0 1009.0h0M1093.3 1008.8h0M1093.6 1008.2h0M1093.9 1008.4h0M1094.2 1008.9h0M1094.6 1007.5h0M1094.9 1008.8h0M1095.2 1008.8h0M1095.5 1008.7h0M1095.8 1008.9h0M1096.1 1008.9h0M1096.4 1008.9h0M1096.7 1008.2h0M1097.0 1008.2h0M1097.3 1008.3h0M1097.6 1008.5h0M1097.9 1008.9h0M1098.3 1008.9h0M1098.6 1008.1h0M1098.9 1008.4h0M1099.2 1008.5h0M1099.5 1008.5h0M1099.8 1008.7h0M1100.1 1008.8h0M1100.4 1008.1h0M1100.7 1007.7h0M1101.0 1008.6h0M1101.3 1008.3h0M1101.6 1008.3h0M1102.0 1008.7h0M1102.3 1008.9h0M1102.6 1008.6h0M1102.9 1008.5h0M1103.2 1008.2h0M1103.5 1008.9h0M1103.8 1008.4h0M1104.1 1008.3h0M1104.4 1008.7h0M1104.7 1008.5h0M1105.0 1008.9h0M1105.3 1007.9h0M1105.7 1008.1h0M1106.0 1008.3h0M1106.3 1009.0h0M1106.6 1008.5h0M1106.9 1008.6h0M1107.2 1008.8h0M1107.5 1008.4h0M1107.8 1008.9h0M1108.1 1008.9h0M1108.4 1008.4h0M1108.7 1008.0h0M1109.0 1008.3h0M1109.4 1008.2h0M1109.7 1008.9h0M1110.0 1008.7h0M1110.3 1008.5h0M1110.6 1008.7h0M1110.9 1008.8h0M1111.2 1008.7h0M1111.5 1008.2h0M1111.8 1007.9h0M1112.1 1008.9h0M1112.4 1008.7h0M1112.7 1008.9h0M1113.1 1008.8h0M1113.4 1008.6h0M1113.7 1008.6h0M1114.0 1008.9h0M1114.3 1008.7h0M1114.6 1008.4h0M1114.9 1008.8h0M1115.2 1008.3h0M1115.5 1008.9h0M1115.8 1008.9h0M1116.1 1008.4h0M1116.4 1008.8h0M1116.8 1008.7h0M1117.1 1008.3h0M1117.4 1008.8h0M1117.7 1008.7h0M1118.0 1008.6h0M1118.3 1008.5h0M1118.6 1007.9h0M1118.9 1008.7h0M1119.2 1008.4h0M1119.5 1008.7h0M1119.8 1008.5h0M1120.1 1008.9h0M1120.4 1008.7h0M1120.8 1008.9h0M1121.1 1008.6h0M1121.4 1008.8h0M1121.7 1008.7h0M1122.0 1009.0h0M1122.3 1008.6h0M1122.6 1008.0h0M1122.9 1008.4h0M1123.2 1008.3h0M1123.5 1008.5h0M1123.8 1009.0h0M1124.1 1008.8h0M1124.5 1008.9h0M1124.8 1008.0h0M1125.1 1008.9h0M1125.4 1008.7h0M1125.7 1008.8h0M1126.0 1008.8h0M1126.3 1008.6h0M1126.6 1008.7h0M1126.9 1008.7h0M1127.2 1008.1h0M1127.5 1008.7h0M1127.8 1008.4h0M1128.2 1008.7h0M1128.5 1007.7h0M1128.8 1009.0h0M1129.1 1008.7h0M1129.4 1008.8h0M1129.7 1008.7h0M1130.0 1008.9h0M1130.3 1008.7h0M1130.6 1008.9h0M1130.9 1008.9h0M1131.2 1008.3h0M1131.5 1008.9h0M1131.9 1008.5h0M1132.2 1008.6h0M1132.5 1007.8h0M1132.8 1007.9h0M1133.1 1007.6h0M1133.4 1008.9h0M1133.7 1008.8h0M1134.0 1008.6h0M1134.3 1008.6h0M1134.6 1008.6h0M1134.9 1008.8h0M1135.2 1008.8h0M1135.6 1008.9h0M1135.9 1008.1h0M1136.2 1008.3h0M1136.5 1008.5h0M1136.8 1008.4h0M1137.1 1008.3h0M1137.4 1008.9h0M1137.7 1008.4h0M1138.0 1008.8h0M1138.3 1008.4h0M1138.6 1008.3h0M1138.9 1008.5h0M1139.3 1009.0h0M1139.6 1009.0h0M1139.9 1008.7h0M1140.2 1008.9h0M1140.5 1008.7h0M1140.8 1008.4h0M1141.1 1007.8h0M1141.4 1008.4h0M1141.7 1008.4h0M1142.0 1008.3h0M1142.3 1008.5h0M1142.6 1008.2h0M1143.0 1008.2h0M1143.3 1008.0h0M1143.6 1008.8h0M1143.9 1009.0h0M1144.2 1008.9h0M1144.5 1008.4h0M1144.8 1009.0h0M1145.1 1008.6h0M1145.4 1008.8h0M1145.7 1008.5h0M1146.0 1008.0h0M1146.3 1009.0h0M1146.7 1008.8h0M1147.0 1008.8h0M1147.3 1008.9h0M1147.6 1008.0h0M1147.9 1008.7h0M1148.2 1009.0h0M1148.5 1008.9h0M1148.8 1008.9h0M1149.1 1008.5h0M1149.4 1008.3h0M1149.7 1008.6h0M1150.0 1008.3h0M1150.3 1008.9h0M1150.7 1008.5h0M1151.0 1008.9h0M1151.3 1008.9h0M1151.6 1007.7h0M1151.9 1008.9h0M1152.2 1008.6h0M1152.5 1008.7h0M1152.8 1008.2h0M1153.1 1008.4h0M1153.4 1008.8h0M1153.7 1008.5h0M1154.0 1008.4h0M1154.4 1008.6h0M1154.7 1008.9h0M1155.0 1008.8h0M1155.3 1008.7h0M1155.6 1008.7h0M1155.9 1008.9h0M1156.2 1008.8h0M1156.5 1009.0h0M1156.8 1008.5h0M1157.1 1008.9h0M1157.4 1008.7h0M1157.7 1008.2h0M1158.1 1008.8h0M1158.4 1009.0h0M1158.7 1009.0h0M1159.0 1008.2h0M1159.3 1008.9h0M1159.6 1008.8h0M1159.9 1008.7h0M1160.2 1008.9h0M1160.5 1008.8h0M1160.8 1008.6h0M1161.1 1008.5h0M1161.4 1008.9h0M1161.8 1008.4h0M1162.1 1008.6h0M1162.4 1008.6h0M1162.7 1008.6h0M1163.0 1008.7h0M1163.3 1008.7h0M1163.6 1008.8h0M1163.9 1008.7h0M1164.2 1008.2h0M1164.5 1007.8h0M1164.8 1008.7h0M1165.1 1008.7h0M1165.5 1009.0h0M1165.8 1008.7h0M1166.1 1008.7h0M1166.4 1007.7h0M1166.7 1008.3h0M1167.0 1007.9h0M1167.3 1008.9h0M1167.6 1008.9h0M1167.9 1008.9h0M1168.2 1008.4h0M1168.5 1008.6h0M1168.8 1008.8h0M1169.2 1008.4h0M1169.5 1009.0h0M1169.8 1008.3h0M1170.1 1008.9h0M1170.4 1008.8h0M1170.7 1009.0h0M1171.0 1008.8h0M1171.3 1008.4h0M1171.6 1008.7h0M1171.9 1008.8h0M1172.2 1008.3h0M1172.5 1008.7h0M1172.9 1009.0h0M1173.2 1008.4h0M1173.5 1008.9h0M1173.8 1008.6h0M1174.1 1008.4h0M1174.4 1008.6h0M1174.7 1008.9h0M1175.0 1008.8h0M1175.3 1008.7h0M1175.6 1008.0h0M1175.9 1008.5h0M1176.2 1008.7h0M1176.6 1008.5h0M1176.9 1008.8h0M1177.2 1009.0h0M1177.5 1008.2h0M1177.8 1008.4h0M1178.1 1008.5h0M1178.4 1008.5h0M1178.7 1008.9h0M1179.0 1008.9h0M1179.3 1008.4h0M1179.6 1008.8h0M1179.9 1008.9h0M1180.2 1008.8h0M1180.6 1008.7h0M1180.9 1008.6h0M1181.2 1008.4h0M1181.5 1008.4h0M1181.8 1009.0h0M1182.1 1008.4h0M1182.4 1008.9h0M1182.7 1008.7h0M1183.0 1008.4h0M1183.3 1008.9h0M1183.6 1008.6h0M1183.9 1008.8h0M1184.3 1008.5h0M1184.6 1008.9h0M1184.9 1008.3h0M1185.2 1009.0h0M1185.5 1008.6h0M1185.8 1008.8h0M1186.1 1008.5h0M1186.4 1008.9h0M1186.7 1008.7h0M1187.0 1008.2h0M1187.3 1008.9h0M1187.6 1008.6h0M1188.0 1009.0h0M1188.3 1008.8h0M1188.6 1008.6h0M1188.9 1008.9h0M1189.2 1008.8h0M1189.5 1009.0h0M1189.8 1008.5h0M1190.1 1008.7h0M1190.4 1008.6h0M1190.7 1008.8h0M1191.0 1008.8h0M1191.3 1009.0h0M1191.7 1008.9h0M1192.0 1008.9h0M1192.3 1007.8h0M1192.6 1008.4h0M1192.9 1008.9h0M1193.2 1008.7h0M1193.5 1008.8h0M1193.8 1008.9h0M1194.1 1008.3h0M1194.4 1008.9h0M1194.7 1008.6h0M1195.0 1008.9h0M1195.4 1008.9h0M1195.7 1007.9h0M1196.0 1008.1h0M1196.3 1008.5h0M1196.6 1008.3h0M1196.9 1008.4h0M1197.2 1008.4h0M1197.5 1008.9h0M1197.8 1008.6h0M1198.1 1008.6h0M1198.4 1008.4h0M1198.7 1008.8h0M1199.1 1008.8h0M1199.4 1008.8h0M1199.7 1008.7h0M1200.0 1008.5h0M1200.3 1008.5h0" stroke="#000" stroke-width="2.7" stroke-linecap="round" fill="none"/>
<path d="M1218.5 1007.1h0M1218.8 1007.0h0M1219.1 1007.2h0M1219.4 1007.0h0M1219.7 1006.4h0M1220.0 1006.7h0M1220.4 1006.7h0M1220.7 1008.0h0M1221.0 1007.2h0M1221.3 1006.7h0M1221.6 1006.8h0M1221.9 1006.4h0M1222.2 1007.4h0M1222.5 1006.2h0M1222.8 1005.6h0M1223.1 1008.3h0M1223.5 1005.3h0M1223.8 1005.3h0M1224.1 1004.9h0M1224.4 1005.5h0M1224.7 1004.7h0M1225.0 1004.5h0M1225.3 1005.3h0M1225.6 1005.4h0M1225.9 1004.6h0M1226.2 1003.6h0M1226.6 1004.4h0M1226.9 1003.5h0M1227.2 1003.9h0M1227.5 1003.7h0M1227.8 1002.7h0M1228.1 1003.8h0M1228.4 1003.4h0M1228.7 1003.4h0M1229.0 1002.9h0M1229.3 1004.1h0M1229.7 1003.2h0M1230.0 1003.7h0M1230.3 1003.2h0M1230.6 1003.1h0M1230.9 1003.1h0M1231.2 1003.0h0M1231.5 1003.8h0M1231.8 1004.8h0M1232.1 1004.7h0M1232.4 1003.7h0M1232.8 1003.8h0M1233.1 1005.2h0M1233.4 1004.8h0M1233.7 1004.4h0M1234.0 1004.2h0M1234.3 1004.2h0M1234.6 1003.1h0M1234.9 1004.1h0M1235.2 1005.7h0M1235.5 1005.5h0M1235.9 1004.4h0M1236.2 1005.1h0M1236.5 1005.0h0M1236.8 1004.3h0M1237.1 1004.2h0M1237.4 1004.4h0M1237.7 1004.8h0M1238.0 1005.5h0M1238.3 1004.9h0M1238.6 1004.7h0M1239.0 1004.6h0M1239.3 1005.4h0M1239.6 1005.6h0M1239.9 1004.8h0M1240.2 1004.5h0M1240.5 1004.8h0M1240.8 1004.9h0M1241.1 1005.3h0M1241.4 1005.1h0M1241.7 1004.1h0M1242.1 1004.4h0M1242.4 1004.2h0M1242.7 1004.8h0M1243.0 1003.8h0M1243.3 1003.4h0M1243.6 1004.4h0M1243.9 1004.1h0M1244.2 1004.2h0M1244.5 1004.6h0M1244.8 1004.3h0M1245.2 1005.0h0M1245.5 1004.5h0M1245.8 1004.6h0M1246.1 1005.8h0M1246.4 1005.4h0M1246.7 1006.4h0M1247.0 1006.1h0M1247.3 1005.7h0M1247.6 1006.0h0M1247.9 1005.8h0M1248.3 1006.5h0M1248.6 1006.8h0M1248.9 1006.5h0M1249.2 1006.7h0M1249.5 1006.1h0M1249.8 1007.4h0M1250.1 1007.0h0M1250.4 1007.3h0M1250.7 1006.1h0M1251.0 1006.6h0M1251.4 1006.4h0M1251.7 1007.7h0M1252.0 1006.7h0M1252.3 1008.2h0M1252.6 1007.2h0M1252.9 1006.6h0M1253.2 1007.7h0M1253.5 1008.0h0M1253.8 1006.9h0M1254.1 1006.7h0M1254.5 1007.1h0M1254.8 1006.5h0M1255.1 1006.4h0M1255.4 1005.2h0M1255.7 1005.6h0M1256.0 1004.7h0M1256.3 1005.0h0M1256.6 1004.5h0M1256.9 1004.4h0M1257.2 1003.4h0M1257.6 1002.6h0M1257.9 1002.9h0M1258.2 1001.3h0M1258.5 999.9h0M1258.8 999.8h0M1259.1 1000.1h0M1259.4 1000.8h0M1259.7 1001.2h0M1260.0 1000.2h0M1260.3 1001.6h0M1260.7 1001.4h0M1261.0 1001.7h0M1261.3 1000.9h0M1261.6 1001.5h0M1261.9 1000.6h0M1262.2 1002.1h0M1262.5 1002.2h0M1262.8 1003.2h0M1263.1 1003.8h0M1263.4 1003.0h0M1263.8 1004.4h0M1264.1 1004.8h0M1264.4 1004.4h0M1264.7 1006.0h0M1265.0 1004.8h0M1265.3 1004.0h0M1265.6 1004.5h0M1265.9 1005.1h0M1266.2 1004.0h0M1266.5 1002.3h0M1266.9 1002.6h0M1267.2 1003.2h0M1267.5 1001.7h0M1267.8 1001.6h0M1268.1 1000.9h0M1268.4 1002.9h0M1268.7 1003.0h0M1269.0 1001.5h0M1269.3 1001.4h0M1269.6 1003.0h0M1270.0 1003.2h0M1270.3 1003.2h0M1270.6 1003.5h0M1270.9 1003.5h0M1271.2 1004.4h0M1271.5 1004.6h0M1271.8 1005.1h0M1272.1 1005.1h0M1272.4 1004.5h0M1272.7 1004.8h0M1273.1 1005.1h0M1273.4 1005.6h0M1273.7 1005.4h0M1274.0 1005.5h0M1274.3 1005.9h0M1274.6 1005.9h0M1274.9 1006.2h0M1275.2 1007.3h0M1275.5 1007.3h0M1275.8 1006.3h0M1276.2 1006.7h0M1276.5 1006.6h0M1276.8 1006.4h0M1277.1 1007.3h0M1277.4 1005.9h0M1277.7 1007.3h0M1278.0 1007.1h0M1278.3 1006.4h0M1278.6 1007.2h0M1278.9 1007.3h0M1279.3 1006.7h0M1279.6 1006.7h0M1279.9 1005.7h0M1280.2 1006.3h0M1280.5 1006.8h0M1280.8 1005.1h0M1281.1 1006.9h0M1281.4 1004.4h0M1281.7 1005.8h0M1282.0 1004.8h0M1282.4 1005.1h0M1282.7 1004.8h0M1283.0 1004.6h0M1283.3 1005.1h0M1283.6 1004.3h0M1283.9 1004.5h0M1284.2 1004.9h0M1284.5 1004.1h0M1284.8 1002.8h0M1285.1 1003.6h0M1285.5 1003.5h0M1285.8 1003.2h0M1286.1 1004.0h0M1286.4 1003.6h0M1286.7 1003.0h0M1287.0 1003.0h0M1287.3 1002.4h0M1287.6 1002.9h0M1287.9 1004.2h0M1288.2 1002.0h0M1288.6 1004.0h0M1288.9 1002.8h0M1289.2 1002.6h0M1289.5 1002.3h0M1289.8 1001.8h0M1290.1 1002.9h0M1290.4 1002.8h0M1290.7 1003.1h0M1291.0 1003.8h0M1291.3 1005.2h0M1291.7 1004.5h0M1292.0 1005.1h0M1292.3 1006.4h0M1292.6 1005.4h0M1292.9 1007.0h0M1293.2 1007.9h0M1293.5 1006.4h0M1293.8 1005.3h0M1294.1 1006.7h0M1294.4 1005.8h0M1294.8 1006.6h0M1295.1 1006.0h0M1295.4 1005.7h0M1295.7 1004.9h0M1296.0 1005.9h0M1296.3 1005.4h0M1296.6 1005.2h0M1296.9 1005.1h0M1297.2 1005.0h0M1297.5 1004.7h0M1297.9 1004.4h0M1298.2 1003.3h0M1298.5 1003.8h0M1298.8 1003.8h0M1299.1 1004.5h0M1299.4 1004.4h0M1299.7 1003.0h0M1300.0 1003.2h0M1300.3 1003.8h0M1300.6 1004.9h0M1301.0 1005.5h0M1301.3 1006.2h0M1301.6 1006.1h0M1301.9 1006.9h0M1302.2 1008.5h0" stroke="#000" stroke-width="3" stroke-linecap="round" fill="none"/>
<path d="M161.3 957.6H176.8M1200.1 957.6H1220.1" stroke="#ff0000" stroke-width="3.3"/>
<path d="M165.0 957.6h0M167.9 957.6h0M170.8 957.6h0M173.7 957.6h0M175.4 957.6h0M1201.5 957.6h0M1204.4 957.6h0M1207.3 957.6h0M1210.2 957.6h0M1213.1 957.6h0M1216.0 957.6h0M1218.9 957.6h0" stroke="#fff" stroke-width="0.8" stroke-linecap="round" fill="none"/>
<path d="M394.2 980.4h0M771.4 986.5h0M1115.3 983.3h0" stroke="#ff0000" stroke-width="2.6" stroke-linecap="round" fill="none"/>
<path d="M542.4 956.1l2.00 4.00h-4.00zM834.3 956.1l2.00 4.00h-4.00zM902.3 956.1l2.00 4.00h-4.00zM1264.5 956.1l2.00 4.00h-4.00z" fill="#ff0000"/>
</g>
<rect x="105.5" y="954.5" width="1380" height="57" fill="none" stroke="#000" stroke-width="1.111" stroke-linejoin="miter"/>
<path d="M162.5 1011.5L162.5 1016.36" stroke="#000" stroke-width="1.11"/>
<text transform="matrix(1.0543 0 0 1.0597 158.43 1032)" font-size="13.89" fill="#000" style="">0</text>
<path d="M316.5 1011.5L316.5 1016.36" stroke="#000" stroke-width="1.11"/>
<text transform="matrix(1.1106 0 0 1.0597 303.75 1032)" font-size="13.89" fill="#000" style="">500</text>
<path d="M470.5 1011.5L470.5 1016.36" stroke="#000" stroke-width="1.11"/>
<text transform="matrix(1.1230 0 0 1.0597 453.11 1032)" font-size="13.89" fill="#000" style="">1000</text>
<path d="M624.5 1011.5L624.5 1016.36" stroke="#000" stroke-width="1.11"/>
<text transform="matrix(1.1230 0 0 1.0597 607.24 1032)" font-size="13.89" fill="#000" style="">1500</text>
<path d="M779.5 1011.5L779.5 1016.36" stroke="#000" stroke-width="1.11"/>
<text transform="matrix(1.1265 0 0 1.0597 761.51 1032)" font-size="13.89" fill="#000" style="">2000</text>
<path d="M933.5 1011.5L933.5 1016.36" stroke="#000" stroke-width="1.11"/>
<text transform="matrix(1.1265 0 0 1.0597 915.63 1032)" font-size="13.89" fill="#000" style="">2500</text>
<path d="M1087.5 1011.5L1087.5 1016.36" stroke="#000" stroke-width="1.11"/>
<text transform="matrix(1.1187 0 0 1.0597 1069.97 1032)" font-size="13.89" fill="#000" style="">3000</text>
<path d="M1241.5 1011.5L1241.5 1016.36" stroke="#000" stroke-width="1.11"/>
<text transform="matrix(1.1187 0 0 1.0597 1224.1 1032)" font-size="13.89" fill="#000" style="">3500</text>
<path d="M1395.5 1011.5L1395.5 1016.36" stroke="#000" stroke-width="1.11"/>
<text transform="matrix(1.1235 0 0 1.0597 1378.27 1032)" font-size="13.89" fill="#000" style="">4000</text>
<path d="M100.64 1009.5L105.5 1009.5" stroke="#000" stroke-width="1.11"/>
<text transform="matrix(1.0543 0 0 1.0597 86.62 1013.8)" font-size="13.89" fill="#000" style="">0</text>
<path d="M100.64 983.5L105.5 983.5" stroke="#000" stroke-width="1.11"/>
<text transform="matrix(0.9947 0 0 1.0597 86.79 987.8)" font-size="13.89" fill="#000" style="">5</text>
<path d="M100.64 957.5L105.5 957.5" stroke="#000" stroke-width="1.11"/>
<text transform="matrix(1.0996 0 0 1.0597 77.8 961.8)" font-size="13.89" fill="#000" style="">10</text>
<path d="M102.72 996.5L105.5 996.5" stroke="#000" stroke-width="0.83"/>
<path d="M102.72 970.5L105.5 970.5" stroke="#000" stroke-width="0.83"/>
<g transform="translate(69 983) rotate(-90)">
<text transform="matrix(1.1929 0 0 1.0597 -7.58 0)" font-size="13.89" fill="#000" style="">dr</text>
</g>
</svg>
</body></html>
